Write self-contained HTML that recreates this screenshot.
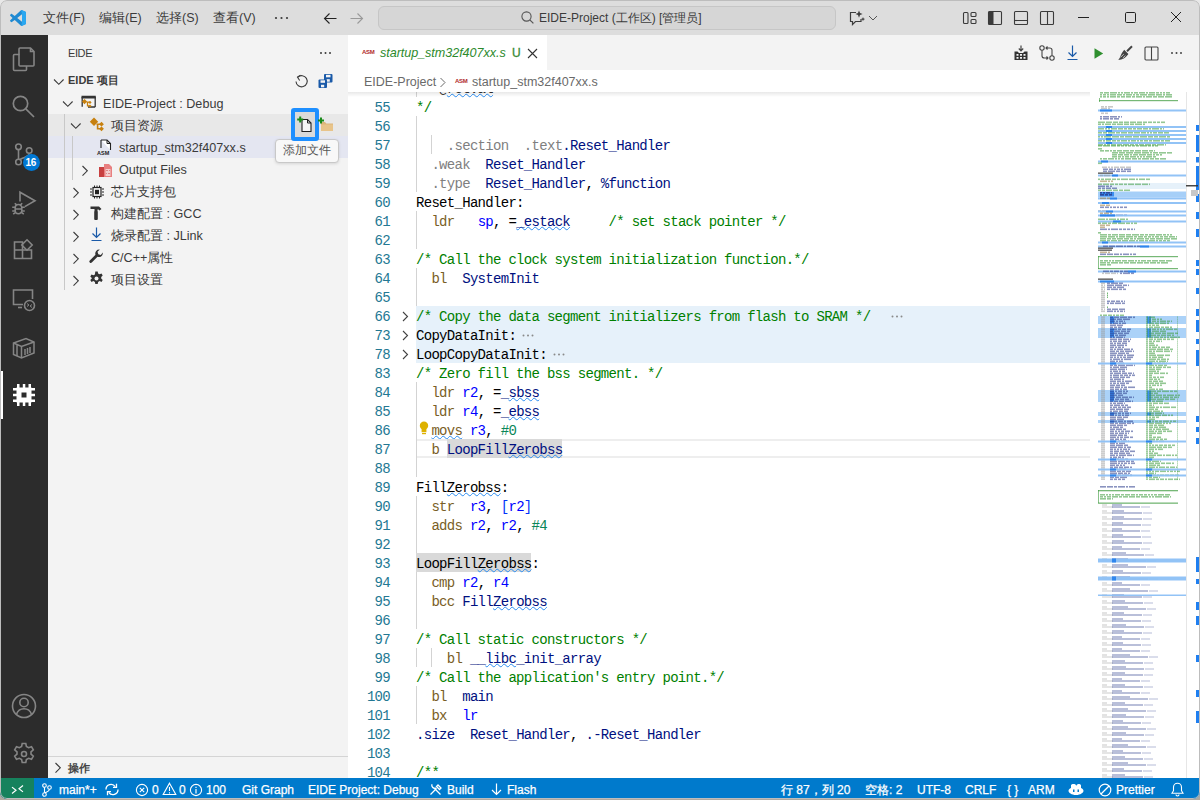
<!DOCTYPE html>
<html><head><meta charset="utf-8">
<style>
*{box-sizing:border-box;margin:0;padding:0}
html,body{width:1200px;height:800px;overflow:hidden;background:linear-gradient(#e8e8e8 0,#e8e8e8 30px,#b0a89f 30px);font-family:"Liberation Sans",sans-serif}
.a{position:absolute}
.t{position:absolute;white-space:pre;line-height:1}
svg{position:absolute;overflow:visible}
#win{position:absolute;left:0;top:0;width:1200px;height:799px;border-radius:7px;overflow:hidden;background:#f3f3f3}
#wb{position:absolute;left:0;top:0;width:1200px;height:799px;border-radius:7px;border:1px solid #bdbdbd;pointer-events:none;z-index:50}
#title{position:absolute;left:0;top:0;width:1200px;height:35px;background:#dddddd}
#act{position:absolute;left:0;top:35px;width:48px;height:743px;background:#2c2c2c}
#side{position:absolute;left:48px;top:35px;width:300px;height:743px;background:#f3f3f3}
#tabs{position:absolute;left:348px;top:35px;width:852px;height:35px;background:#f3f3f3}
#crumbs{position:absolute;left:348px;top:70px;width:852px;height:22px;background:#fff}
#editor{position:absolute;left:348px;top:92px;width:852px;height:686px;background:#fff;overflow:hidden}
#status{position:absolute;left:0;top:778px;width:1200px;height:21px;background:#007acc;color:#fff}
.menu{font-size:12.5px;color:#3b3b3b;top:12px}
.st{font-size:12px;color:#fff;top:6px;-webkit-text-stroke:0.25px #fff}
.side{font-size:12.6px;color:#3b3b3b}
.ln{position:absolute;margin-top:2px;left:0;width:42px;text-align:right;font-family:"Liberation Mono",monospace;font-size:14px;line-height:19px;height:19px;color:#237893;letter-spacing:-0.7px}
.cl{position:absolute;margin-top:2px;left:68px;white-space:pre;font-family:"Liberation Mono",monospace;font-size:14px;line-height:19px;height:19px;letter-spacing:-0.7px}
.cm{color:#008000}.dir{color:#7f7f7f}.id{color:#001080}.lab{color:#000}.mn{color:#795e26}.reg{color:#0000ff}.num{color:#098658}.p{color:#000}.br{color:#0431fa}.d{color:#333}
.sq{text-decoration:underline wavy #2a8cf0;text-decoration-thickness:1px;text-underline-offset:0px;text-decoration-skip-ink:none}
</style></head><body>
<div id="win">
<div id="title">
 <svg style="left:10px;top:10px" width="16" height="16" viewBox="0 0 100 100"><path fill="#1f8ad2" fill-rule="evenodd" d="M70.9 99.3c1.6.6 3.4.6 5-.2l20.6-9.9c2.2-1 3.5-3.2 3.5-5.6V16.4c0-2.4-1.4-4.6-3.5-5.6L75.9.9c-2.1-1-4.5-.8-6.4.6-.3.2-.5.4-.7.6L29.4 38 12.2 25c-1.6-1.2-3.8-1.1-5.3.2l-5.5 5c-1.8 1.7-1.8 4.5 0 6.2L16.2 50 1.4 63.6c-1.8 1.7-1.8 4.5 0 6.2l5.5 5c1.5 1.4 3.7 1.5 5.3.2l17.2-13 39.4 35.9c.6.6 1.4 1.1 2.1 1.4zM75 27.3 45.1 50 75 72.7V27.3z"/><path fill="#2aa7f0" d="M70.9 99.3c1.6.6 3.4.6 5-.2l20.6-9.9c2.2-1 3.5-3.2 3.5-5.6V16.4c0-2.4-1.4-4.6-3.5-5.6L75.9.9c-2.1-1-4.5-.8-6.4.6L75 27.3v45.4z"/></svg>
 <div class="t menu" style="left:43px">文件(F)</div>
 <div class="t menu" style="left:99px">编辑(E)</div>
 <div class="t menu" style="left:156px">选择(S)</div>
 <div class="t menu" style="left:213px">查看(V)</div>
 <svg style="left:274px;top:16px" width="16" height="4"><circle cx="2" cy="2" r="1.1" fill="#3b3b3b"/><circle cx="7.5" cy="2" r="1.1" fill="#3b3b3b"/><circle cx="13" cy="2" r="1.1" fill="#3b3b3b"/></svg>
 <svg style="left:323px;top:12px" width="16" height="14"><path d="M1.5 6.5h12M6.5 1.5l-5 5 5 5" stroke="#222" stroke-width="1.1" fill="none"/></svg>
 <svg style="left:349px;top:12px" width="16" height="14"><path d="M1.5 6.5h12M8.5 1.5l5 5-5 5" stroke="#999" stroke-width="1.1" fill="none"/></svg>
 <div class="a" style="left:378px;top:6px;width:458px;height:24px;border-radius:6px;background:#d6d6d6;border:1px solid #c6c6c6"></div>
 <svg style="left:519px;top:10px" width="16" height="16"><circle cx="7.5" cy="6.5" r="4.6" stroke="#555" stroke-width="1.1" fill="none"/><path d="M10.8 9.8l3.6 3.6" stroke="#555" stroke-width="1.2"/></svg>
 <div class="t" style="left:539px;top:12px;font-size:12px;color:#3b3b3b">EIDE-Project (工作区) [管理员]</div>
 <svg style="left:848px;top:10px" width="18" height="16"><path d="M8 2.5H2.5v9h2v3l3-3h5.5V9" stroke="#3b3b3b" stroke-width="1.2" fill="none"/><path d="M11 0.5l1 2.6 2.6 1-2.6 1-1 2.6-1-2.6-2.6-1 2.6-1z" fill="#3b3b3b"/><path d="M15 7l.6 1.5 1.5.6-1.5.6-.6 1.5-.6-1.5-1.5-.6 1.5-.6z" fill="#3b3b3b"/></svg>
 <svg style="left:868px;top:15px" width="10" height="6"><path d="M1 1l4 4 4-4" stroke="#555" stroke-width="1" fill="none"/></svg>
 <svg style="left:962px;top:11px" width="16" height="14"><rect x="1.5" y="1.5" width="4.5" height="11" rx="1" stroke="#3b3b3b" stroke-width="1.1" fill="none"/><rect x="9" y="1.5" width="5" height="4" rx="1" stroke="#3b3b3b" stroke-width="1.1" fill="none"/><rect x="9" y="8.5" width="5" height="4" rx="1" stroke="#3b3b3b" stroke-width="1.1" fill="none"/></svg>
 <svg style="left:987px;top:10px" width="16" height="16"><rect x="1.5" y="1.5" width="13" height="13" rx="1" stroke="#3b3b3b" stroke-width="1.1" fill="none"/><rect x="1.5" y="1.5" width="5" height="13" fill="#3b3b3b"/></svg>
 <svg style="left:1013px;top:10px" width="16" height="16"><rect x="1.5" y="1.5" width="13" height="13" rx="1" stroke="#3b3b3b" stroke-width="1.1" fill="none"/><path d="M1.5 10.5h13" stroke="#3b3b3b" stroke-width="1.1"/></svg>
 <svg style="left:1039px;top:10px" width="16" height="16"><rect x="1.5" y="1.5" width="13" height="13" rx="1" stroke="#3b3b3b" stroke-width="1.1" fill="none"/><path d="M8.5 1.5v13" stroke="#3b3b3b" stroke-width="1.1"/></svg>
 <svg style="left:1077px;top:16px" width="13" height="3"><path d="M1 1.5h11" stroke="#222" stroke-width="1"/></svg>
 <svg style="left:1124px;top:11px" width="13" height="13"><rect x="1.5" y="1.5" width="10" height="10" rx="1.2" stroke="#222" stroke-width="1" fill="none"/></svg>
 <svg style="left:1170px;top:11px" width="12" height="12"><path d="M1 1l10 10M11 1L1 11" stroke="#222" stroke-width="1"/></svg>
</div>
<div id="act">
 <!-- explorer -->
 <svg style="left:12px;top:12px" width="24" height="24" viewBox="0 0 24 24" fill="none" stroke="#858585" stroke-width="1.6"><path d="M7.5 7.5H2.5a1 1 0 0 0-1 1v14a1 1 0 0 0 1 1h11a1 1 0 0 0 1-1v-3.5"/><path d="M8 1h10.5l3.5 3.5V18a1 1 0 0 1-1 1H8a1 1 0 0 1-1-1V2a1 1 0 0 1 1-1z"/><path d="M18.5 1v3.5H22"/></svg>
 <!-- search -->
 <svg style="left:12px;top:60px" width="24" height="24" viewBox="0 0 24 24" fill="none" stroke="#858585" stroke-width="1.7"><circle cx="8.5" cy="8.5" r="7.2"/><path d="M13.8 13.8l8.2 8.2"/></svg>
 <!-- scm -->
 <svg style="left:12px;top:108px" width="24" height="24" viewBox="0 0 24 24" fill="none" stroke="#858585" stroke-width="1.6"><circle cx="6.5" cy="3.8" r="2.8"/><circle cx="17.2" cy="7.5" r="2.8"/><circle cx="6.5" cy="19" r="2.8"/><path d="M6.5 6.6v9.6M17.2 10.3c0 3.8-5 3.5-9.2 6.2"/></svg>
 <div class="a" style="left:23px;top:119px;width:17px;height:17px;border-radius:9px;background:#0078d4"></div>
 <div class="t" style="left:25.5px;top:123px;font-size:10px;font-weight:bold;color:#fff;letter-spacing:-0.3px">16</div>
 <!-- run debug -->
 <svg style="left:11px;top:156px" width="26" height="24" viewBox="0 0 26 24" fill="none" stroke="#858585" stroke-width="1.6"><path d="M9 10.5V1.2L24 9.8 13.8 15.6"/><path d="M4.2 16.8a3.3 3.3 0 0 1 6.6 0v2.6a3.3 3.3 0 0 1-6.6 0z M1.2 16.2h3M10.8 16.2h3M1.2 20h3M10.8 20h3M2.2 23.2l2-1.6M12.8 23.2l-2-1.6M5.2 13.6l-1.4-1.4M9.8 13.6l1.4-1.4M4.2 18h6.6"/></svg>
 <!-- extensions -->
 <svg style="left:12px;top:204px" width="24" height="24" viewBox="0 0 24 24" fill="none" stroke="#858585" stroke-width="1.6"><path d="M2.5 3h8v8h-8zM2.5 11h8v8.5h-8zM10.5 11h9v8.5h-9z"/><path d="M15 0.8l5.2 5.2-5.2 5.2-5.2-5.2z"/></svg>
 <!-- remote explorer -->
 <svg style="left:12px;top:253px" width="24" height="24" viewBox="0 0 24 24" fill="none" stroke="#858585" stroke-width="1.6"><path d="M11 16.5H1.5V2h19v9"/><path d="M6 19.5h4"/><circle cx="17.5" cy="17.5" r="5"/><path d="M15 15.5l2 1.5-2 1.5M20 16.5l-2 1.5 2 1.5" stroke-width="1"/></svg>
 <!-- container -->
 <svg style="left:12px;top:301px" width="24" height="24" viewBox="0 0 24 24" fill="none" stroke="#858585" stroke-width="1.5"><path d="M1.5 7v11.5L9.5 22 22 17V6L14 2.5z"/><path d="M1.5 7l8 3.5L22 6M9.5 10.5V22M5 9v11M13 13v6M15.5 12v6M18 11v6"/></svg>
 <!-- chip active -->
 <div class="a" style="left:1px;top:336px;width:2px;height:48px;background:#fff"></div>
 <svg style="left:12px;top:348px" width="24" height="24" viewBox="0 0 24 24" fill="#fff"><path d="M4.5 4.5h15v15h-15z M9.5 9.5v5h5v-5z" fill-rule="evenodd"/><path d="M5 1h2.5v4H5zM10.8 1h2.5v4h-2.5zM16.5 1H19v4h-2.5zM5 19h2.5v4H5zM10.8 19h2.5v4h-2.5zM16.5 19H19v4h-2.5zM1 5h4v2.5H1zM1 10.8h4v2.5H1zM1 16.5h4V19H1zM19 5h4v2.5h-4zM19 10.8h4v2.5h-4zM19 16.5h4V19h-4z"/></svg>
 <!-- account -->
 <svg style="left:12px;top:659px" width="24" height="24" viewBox="0 0 24 24" fill="none" stroke="#858585" stroke-width="1.6"><circle cx="12" cy="12" r="11.5"/><circle cx="12" cy="8.5" r="4.2"/><path d="M4.5 20.2c1.2-3.7 4-5.5 7.5-5.5s6.3 1.8 7.5 5.5"/></svg>
 <!-- settings gear -->
 <svg style="left:12px;top:707px" width="24" height="24" viewBox="0 0 24 24" fill="none" stroke="#858585" stroke-width="1.6"><path d="M10.2 1.5h3.6l.6 3 2.2 1.2 2.9-1 1.8 3.1-2.3 2v2.4l2.3 2-1.8 3.1-2.9-1-2.2 1.2-.6 3h-3.6l-.6-3-2.2-1.2-2.9 1-1.8-3.1 2.3-2v-2.4l-2.3-2 1.8-3.1 2.9 1 2.2-1.2z"/><circle cx="12" cy="12" r="2.5"/></svg>
</div>
<div id="side">
 <div class="t" style="left:20px;top:13px;font-size:11px;color:#3b3b3b;letter-spacing:-0.4px">EIDE</div>
 <svg style="left:271px;top:16px" width="14" height="4"><circle cx="2" cy="2" r="1" fill="#3b3b3b"/><circle cx="6.5" cy="2" r="1" fill="#3b3b3b"/><circle cx="11" cy="2" r="1" fill="#3b3b3b"/></svg>
 <!-- EIDE 项目 header -->
 <svg style="left:5px;top:43px" width="12" height="8"><path d="M1 1.5l4.8 4.8 4.8-4.8" stroke="#3b3b3b" stroke-width="1.1" fill="none"/></svg>
 <div class="t" style="left:20px;top:40px;font-size:11px;font-weight:bold;color:#3b3b3b">EIDE 项目</div>
 <svg style="left:246px;top:39px" width="15" height="15"><path d="M3.7 3.2A5.6 5.6 0 1 1 2 7.5" stroke="#3b3b3b" stroke-width="1.1" fill="none"/><path d="M6.5 1.2l-3 2 2.2 3.3" stroke="#3b3b3b" stroke-width="1.1" fill="none"/></svg>
 <svg style="left:270px;top:39px" width="15" height="15"><rect x="6" y="0" width="8.5" height="8.5" rx="1" fill="#1a5aa8"/><rect x="8" y="0.8" width="4.5" height="2.5" fill="#f3f3f3"/><rect x="8.6" y="5.2" width="3.2" height="2.5" fill="#f3f3f3"/><rect x="0.5" y="5.5" width="8.5" height="8.5" rx="1" fill="#1a5aa8"/><rect x="2.5" y="6.3" width="4.5" height="2.5" fill="#f3f3f3"/><rect x="3" y="10.8" width="3.2" height="2.5" fill="#f3f3f3"/></svg>
 <!-- project -->
 <svg style="left:14px;top:65px" width="12" height="8"><path d="M1 1.5l4.8 4.8 4.8-4.8" stroke="#3b3b3b" stroke-width="1.1" fill="none"/></svg>
 <svg style="left:33px;top:60px" width="16" height="16"><path d="M1.2 2v9.8M14.2 2v10M7 12h7.2" stroke="#333" stroke-width="1.3" fill="none"/><path d="M0.5 0.8h14.3v2.6H0.5z" fill="#333"/><path d="M3.5 4l2.6 2.6-2.6 2.6L.9 6.6z" fill="#c7800e"/><path d="M5.5 7.2h3M6.5 7.2v3.6h2" stroke="#c7800e" stroke-width="1.3" fill="none"/><path d="M9 5.8l1.6 1.6L9 9 7.4 7.4zM9 9.4l1.6 1.6L9 12.6 7.4 11z" fill="#c7800e"/></svg>
 <div class="t side" style="left:55px;top:63px">EIDE-Project : Debug</div>
 <!-- hover row 项目资源 -->
 <div class="a" style="left:0;top:79px;width:300px;height:22px;background:#e8e8e8"></div>
 <div class="a" style="left:16px;top:79px;width:1px;height:176px;background:#c8c8c8"></div>
 <svg style="left:22px;top:87px" width="12" height="8"><path d="M1 1.5l4.8 4.8 4.8-4.8" stroke="#3b3b3b" stroke-width="1.1" fill="none"/></svg>
 <svg style="left:41px;top:82px" width="16" height="15"><path d="M5 0.6l4.2 4.2L5 9 0.8 4.8z" fill="#c7800e"/><path d="M7.5 7.2h4.5M8.6 7.2v4.6h3.4" stroke="#c7800e" stroke-width="1.6" fill="none"/><path d="M12.5 4.8l2.4 2.4-2.4 2.4-2.4-2.4zM12.5 9.4l2.4 2.4-2.4 2.4-2.4-2.4z" fill="#c7800e"/></svg>
 <div class="t side" style="left:63px;top:85px">项目资源</div>
 <!-- selected row startup -->
 <div class="a" style="left:0;top:101px;width:300px;height:22px;background:#e4e6f1"></div>
 <div class="a" style="left:16px;top:79px;width:1px;height:176px;background:#c8c8c8"></div>
 <div class="a" style="left:24px;top:101px;width:1px;height:44px;background:#c8c8c8"></div>
 <svg style="left:49px;top:104px" width="15" height="16"><path d="M4 1h6l3.5 3.5V11" stroke="#222" stroke-width="1.1" fill="#fff"/><path d="M4 1v8" stroke="#222" stroke-width="1.1"/><path d="M10 1v3.5h3.5" stroke="#222" stroke-width="1" fill="none"/><text x="0" y="15.5" font-size="5.5" font-family="Liberation Sans" font-weight="bold" fill="#222">ASM</text></svg>
 <div class="t side" style="left:71px;top:107px">startup_stm32f407xx.s</div>
 <!-- output files -->
 <svg style="left:33px;top:130px" width="8" height="12"><path d="M1.5 1l4.8 4.8-4.8 4.8" stroke="#3b3b3b" stroke-width="1.1" fill="none"/></svg>
 <svg style="left:50px;top:128px" width="15" height="15"><path d="M1 4h6v10H1z" fill="#c84040"/><path d="M6 1h5l3 3v10H6z" fill="#e88080"/><path d="M7.5 6h5v7h-5z" fill="#f4d0d0"/><path d="M8.5 7.5h1M11 7.5h.5M8.5 10.5h.5M10.5 10.5h1" stroke="#c84040" stroke-width="1"/></svg>
 <div class="t side" style="left:71px;top:129px">Output Files</div>
 <!-- chip support -->
 <svg style="left:24px;top:152px" width="8" height="12"><path d="M1.5 1l4.8 4.8-4.8 4.8" stroke="#3b3b3b" stroke-width="1.1" fill="none"/></svg>
 <svg style="left:41px;top:150px" width="16" height="14"><rect x="4" y="2.5" width="8" height="9" stroke="#222" stroke-width="1.2" fill="none"/><rect x="6" y="4.8" width="4" height="4.4" fill="#222"/><path d="M1 4h2M1 7h2M1 10h2M13 4h2M13 7h2M13 10h2M5.5 0.5v1.5M8 0.5v1.5M10.5 0.5v1.5M5.5 12v1.5M8 12v1.5M10.5 12v1.5" stroke="#222" stroke-width="1"/></svg>
 <div class="t side" style="left:63px;top:151px">芯片支持包</div>
 <!-- build config -->
 <svg style="left:24px;top:174px" width="8" height="12"><path d="M1.5 1l4.8 4.8-4.8 4.8" stroke="#3b3b3b" stroke-width="1.1" fill="none"/></svg>
 <svg style="left:42px;top:171px" width="13" height="14"><path d="M0.5 0.5h8.5l2.5 2.5-2 1.5-1-1H7.5v2.5h-3V3H0.5z" fill="#333"/><path d="M4.2 5.5h3.6v7.5a1 1 0 0 1-1 1H5.2a1 1 0 0 1-1-1z" fill="#333"/></svg>
 <div class="t side" style="left:63px;top:173px">构建配置 : GCC</div>
 <!-- flash config -->
 <svg style="left:24px;top:196px" width="8" height="12"><path d="M1.5 1l4.8 4.8-4.8 4.8" stroke="#3b3b3b" stroke-width="1.1" fill="none"/></svg>
 <svg style="left:43px;top:192px" width="12" height="15"><path d="M5.5 0.5v10M1.5 6.5l4 4 4-4M0.5 13.5h10" stroke="#1a5aa8" stroke-width="1.2" fill="none"/></svg>
 <div class="t side" style="left:63px;top:195px">烧录配置 : JLink</div>
 <!-- c/c++ -->
 <svg style="left:24px;top:218px" width="8" height="12"><path d="M1.5 1l4.8 4.8-4.8 4.8" stroke="#3b3b3b" stroke-width="1.1" fill="none"/></svg>
 <svg style="left:41px;top:214px" width="15" height="15"><path d="M13.8 3.5a4 4 0 0 1-5.3 4.3L2.8 13.5a1.4 1.4 0 0 1-2-2L6.5 5.8A4 4 0 0 1 10.8 0.5L8.5 2.8l.8 2.5 2.5.8z" fill="#333"/></svg>
 <div class="t side" style="left:63px;top:217px">C/C++属性</div>
 <!-- project settings -->
 <svg style="left:24px;top:240px" width="8" height="12"><path d="M1.5 1l4.8 4.8-4.8 4.8" stroke="#3b3b3b" stroke-width="1.1" fill="none"/></svg>
 <svg style="left:41px;top:236px" width="15" height="15"><path d="M6.3 0.5h2.4l.4 2 1.5.8 1.9-.8 1.2 2-1.5 1.4v1.6l1.5 1.4-1.2 2-1.9-.8-1.5.8-.4 2H6.3l-.4-2-1.5-.8-1.9.8-1.2-2 1.5-1.4V6.9L1.3 5.5l1.2-2 1.9.8 1.5-.8z" fill="#333"/><circle cx="7.5" cy="7.5" r="2" fill="#f3f3f3"/></svg>
 <div class="t side" style="left:63px;top:239px">项目设置</div>
 <!-- tooltip -->
 <div class="a" style="left:227px;top:104px;width:64px;height:24px;background:#f8f8f8;border:1px solid #c8c8c8;border-radius:4px;box-shadow:0 1px 3px rgba(0,0,0,.12)"></div>
 <div class="t" style="left:235px;top:109px;font-size:12px;color:#555">添加文件</div>
 <!-- action buttons with highlight -->
 <div class="a" style="left:243px;top:73px;width:28px;height:33px;border:4px solid #1e8fff;border-radius:3px;background:#dadada"></div>
 <svg style="left:249px;top:81px" width="17" height="17"><path d="M5 3.5h5.5l3.5 3.5V15.5H5z" stroke="#222" stroke-width="1.1" fill="#f6f6f6"/><path d="M10.5 3.5V7H14" stroke="#222" stroke-width="1" fill="none"/><path d="M3.2 0.5v6M0.2 3.5h6" stroke="#1a8a1a" stroke-width="2"/></svg>
 <svg style="left:269px;top:82px" width="17" height="15"><path d="M4 5h4l1.3 1.5h6.7V14H4z" fill="#dcb67a"/><path d="M4 7.5h12V14H4z" fill="#e8c48a"/><path d="M4 0.5v6M1 3.5h6" stroke="#1a8a1a" stroke-width="2"/></svg>
 <!-- bottom section -->
 <div class="a" style="left:0;top:721px;width:300px;height:1px;background:#d4d4d4"></div>
 <svg style="left:6px;top:727px" width="8" height="12"><path d="M1.5 1l4.8 4.8-4.8 4.8" stroke="#3b3b3b" stroke-width="1.1" fill="none"/></svg>
 <div class="t" style="left:20px;top:728px;font-size:11px;font-weight:bold;color:#444">操作</div>
</div>
<div id="tabs">
 <div class="a" style="left:0;top:0;width:199px;height:35px;background:#fff"></div>
 <div class="t" style="left:14px;top:14px;font-size:6px;color:#b02a2a;letter-spacing:-0.3px;font-weight:bold">ASM</div>
 <div class="t" style="left:32px;top:12px;font-size:12.6px;font-style:italic;color:#2c8a2c;letter-spacing:-0.05px">startup_stm32f407xx.s</div>
 <div class="t" style="left:164px;top:12px;font-size:12px;color:#388a34;-webkit-text-stroke:0.3px #388a34">U</div>
 <svg style="left:179px;top:13px" width="11" height="11"><path d="M1 1l9 9M10 1L1 10" stroke="#333" stroke-width="1.1"/></svg>
 <!-- actions -->
 <svg style="left:665px;top:10px" width="16" height="16"><path d="M8 0.5v5M5.8 3.5L8 5.8l2.2-2.3" stroke="#444" stroke-width="1.2" fill="none"/><path d="M1.5 6.5h3l1.5 1.5h4l1.5-1.5h3V15h-13z" fill="#333"/><path d="M3.5 9h2v1.8h-2zM7 9h2v1.8H7zM10.5 9h2v1.8h-2zM3.5 12h2v1.8h-2zM7 12h2v1.8H7zM10.5 12h2v1.8h-2z" fill="#f3f3f3"/></svg>
 <svg style="left:691px;top:10px" width="16" height="16"><circle cx="3" cy="3" r="2.2" stroke="#444" stroke-width="1.1" fill="none"/><circle cx="13" cy="13" r="2.2" stroke="#444" stroke-width="1.1" fill="none"/><path d="M3 5.2V11c0 1.5 1 2 2.5 2H9M7.5 11.5L9 13l-1.5 1.5M13 10.8V5c0-1.5-1-2-2.5-2H7M8.5 1.5L7 3l1.5 1.5" stroke="#444" stroke-width="1.1" fill="none"/></svg>
 <svg style="left:719px;top:10px" width="12" height="16"><path d="M5.5 0.5v11M1.5 7.5l4 4 4-4M0.5 14.5h10" stroke="#1a5aa8" stroke-width="1.2" fill="none"/></svg>
 <svg style="left:746px;top:13px" width="10" height="11"><path d="M0.5 0.3v10.4l8.7-5.2z" fill="#2f8f2f"/></svg>
 <svg style="left:769px;top:10px" width="16" height="16"><path d="M15 1.2L10 6.2" stroke="#444" stroke-width="2"/><path d="M7.2 4.8l4.2 4.2-1.2 1.6c-1.6 2.2-4.5 4.2-9 4.4 1-1.2 1.4-2 2-3.3.8-1.8 1.8-4 4-6.9z" fill="#444"/><path d="M3.6 12.2l3.2-3M5.8 13l2.6-2.4" stroke="#f3f3f3" stroke-width="0.7"/></svg>
 <svg style="left:796px;top:11px" width="15" height="15"><rect x="1" y="1" width="13" height="13" rx="1" stroke="#444" stroke-width="1.1" fill="none"/><path d="M7.5 1v13" stroke="#444" stroke-width="1.1"/></svg>
 <svg style="left:822px;top:16px" width="14" height="4"><circle cx="2" cy="2" r="1" fill="#444"/><circle cx="6.5" cy="2" r="1" fill="#444"/><circle cx="11" cy="2" r="1" fill="#444"/></svg>
</div>
<div id="crumbs">
 <div class="t" style="left:16px;top:6px;font-size:12.5px;color:#6a6a6a">EIDE-Project</div>
 <svg style="left:91px;top:7px" width="8" height="11"><path d="M1.5 1l4.5 4.5-4.5 4.5" stroke="#6a6a6a" stroke-width="1" fill="none"/></svg>
 <div class="t" style="left:107px;top:8px;font-size:6px;color:#b02a2a;letter-spacing:-0.3px;font-weight:bold">ASM</div>
 <div class="t" style="left:124px;top:6px;font-size:12.5px;color:#6a6a6a">startup_stm32f407xx.s</div>
</div>
<div id="editor">
<div class="a" style="left:0;top:0;width:742px;height:5px;background:linear-gradient(rgba(0,0,0,0.09),rgba(0,0,0,0));z-index:5"></div>
<div class="a" style="left:68.0px;top:-14px;width:1px;height:19px;background:#d3d3d3"></div>
<div class="cl" style="top:-14px"><span class="p">   </span><span class="d">@</span><span class="d sq">retval</span></div>
<div class="ln" style="top:5px">55</div>
<div class="cl" style="top:5px"><span class="cm">*/</span></div>
<div class="a" style="left:68.0px;top:24px;width:1px;height:19px;background:#d3d3d3"></div>
<div class="ln" style="top:24px">56</div>
<div class="cl" style="top:24px"></div>
<div class="a" style="left:68.0px;top:43px;width:1px;height:19px;background:#d3d3d3"></div>
<div class="a" style="left:83.4px;top:43px;width:1px;height:19px;background:#d3d3d3"></div>
<div class="ln" style="top:43px">57</div>
<div class="cl" style="top:43px"><span class="p">    </span><span class="dir">.section</span><span class="p">  </span><span class="dir">.text</span><span class="id">.Reset_Handler</span></div>
<div class="a" style="left:68.0px;top:62px;width:1px;height:19px;background:#d3d3d3"></div>
<div class="ln" style="top:62px">58</div>
<div class="cl" style="top:62px"><span class="p">  </span><span class="dir">.weak</span><span class="p">  </span><span class="id">Reset_Handler</span></div>
<div class="a" style="left:68.0px;top:81px;width:1px;height:19px;background:#d3d3d3"></div>
<div class="ln" style="top:81px">59</div>
<div class="cl" style="top:81px"><span class="p">  </span><span class="dir">.type</span><span class="p">  </span><span class="id">Reset_Handler</span><span class="p">, </span><span class="id">%function</span></div>
<div class="ln" style="top:100px">60</div>
<div class="cl" style="top:100px"><span class="lab">Reset_Handler:</span></div>
<div class="a" style="left:68.0px;top:119px;width:1px;height:19px;background:#d3d3d3"></div>
<div class="ln" style="top:119px">61</div>
<div class="cl" style="top:119px"><span class="p">  </span><span class="mn">ldr</span><span class="p">   </span><span class="reg">sp</span><span class="p">, =</span><span class="id sq">_estack</span><span class="p">     </span><span class="cm">/* set stack pointer */</span></div>
<div class="a" style="left:68.0px;top:138px;width:1px;height:19px;background:#d3d3d3"></div>
<div class="ln" style="top:138px">62</div>
<div class="cl" style="top:138px"></div>
<div class="ln" style="top:157px">63</div>
<div class="cl" style="top:157px"><span class="cm">/* Call the clock system initialization function.*/</span></div>
<div class="a" style="left:68.0px;top:176px;width:1px;height:19px;background:#d3d3d3"></div>
<div class="ln" style="top:176px">64</div>
<div class="cl" style="top:176px"><span class="p">  </span><span class="mn">bl</span><span class="p">  </span><span class="id">SystemInit</span></div>
<div class="a" style="left:68.0px;top:195px;width:1px;height:19px;background:#d3d3d3"></div>
<div class="ln" style="top:195px">65</div>
<div class="cl" style="top:195px"></div>
<div class="a" style="left:68px;top:214px;width:674px;height:19px;background:#e6f1fa"></div>
<div class="ln" style="top:214px">66</div>
<svg style="left:54px;top:219px" width="7" height="10"><path d="M1 1l4.5 4.5L1 10" stroke="#424242" stroke-width="1.1" fill="none"/></svg>
<div class="cl" style="top:214px"><span class="cm">/* Copy the data segment initializers from flash to SRAM */</span></div>
<svg style="left:543.3px;top:223px" width="14" height="3"><circle cx="1.5" cy="1.5" r="1" fill="#8a8a8a"/><circle cx="6" cy="1.5" r="1" fill="#8a8a8a"/><circle cx="10.5" cy="1.5" r="1" fill="#8a8a8a"/></svg>
<div class="a" style="left:68px;top:233px;width:674px;height:19px;background:#e6f1fa"></div>
<div class="ln" style="top:233px">73</div>
<svg style="left:54px;top:238px" width="7" height="10"><path d="M1 1l4.5 4.5L1 10" stroke="#424242" stroke-width="1.1" fill="none"/></svg>
<div class="cl" style="top:233px"><span class="lab">CopyDataInit:</span></div>
<svg style="left:174.1px;top:242px" width="14" height="3"><circle cx="1.5" cy="1.5" r="1" fill="#8a8a8a"/><circle cx="6" cy="1.5" r="1" fill="#8a8a8a"/><circle cx="10.5" cy="1.5" r="1" fill="#8a8a8a"/></svg>
<div class="a" style="left:68px;top:252px;width:674px;height:19px;background:#e6f1fa"></div>
<div class="ln" style="top:252px">78</div>
<svg style="left:54px;top:257px" width="7" height="10"><path d="M1 1l4.5 4.5L1 10" stroke="#424242" stroke-width="1.1" fill="none"/></svg>
<div class="cl" style="top:252px"><span class="lab">LoopCopyDataInit:</span></div>
<svg style="left:204.9px;top:261px" width="14" height="3"><circle cx="1.5" cy="1.5" r="1" fill="#8a8a8a"/><circle cx="6" cy="1.5" r="1" fill="#8a8a8a"/><circle cx="10.5" cy="1.5" r="1" fill="#8a8a8a"/></svg>
<div class="ln" style="top:271px">83</div>
<div class="cl" style="top:271px"><span class="cm">/* Zero fill the bss segment. */</span></div>
<div class="a" style="left:68.0px;top:290px;width:1px;height:19px;background:#d3d3d3"></div>
<div class="ln" style="top:290px">84</div>
<div class="cl" style="top:290px"><span class="p">  </span><span class="mn">ldr</span><span class="p"> </span><span class="reg">r2</span><span class="p">, =</span><span class="id">_</span><span class="id sq">sbss</span></div>
<div class="a" style="left:68.0px;top:309px;width:1px;height:19px;background:#d3d3d3"></div>
<div class="ln" style="top:309px">85</div>
<div class="cl" style="top:309px"><span class="p">  </span><span class="mn">ldr</span><span class="p"> </span><span class="reg">r4</span><span class="p">, =</span><span class="id">_</span><span class="id sq">ebss</span></div>
<div class="a" style="left:68.0px;top:328px;width:1px;height:19px;background:#d3d3d3"></div>
<div class="ln" style="top:328px">86</div>
<div class="cl" style="top:328px"><span class="p">  </span><span class="mn sq">movs</span><span class="p"> </span><span class="reg">r3</span><span class="p">, </span><span class="num">#0</span></div>
<svg style="left:71px;top:329px" width="10" height="14"><path d="M5 0.5a4.2 4.2 0 0 0-4.2 4.2c0 1.7 1 2.5 1.8 3.5v3h4.8v-3c.8-1 1.8-1.8 1.8-3.5A4.2 4.2 0 0 0 5 .5z" fill="#ddb100"/><path d="M3 12h4v1.2H3z" fill="#ddb100"/></svg>
<div class="a" style="left:68px;top:347px;width:674px;height:19px;border-top:2px solid #eeeeee;border-bottom:2px solid #eeeeee"></div>
<div class="a" style="left:68.0px;top:347px;width:1px;height:19px;background:#d3d3d3"></div>
<div class="ln" style="top:347px">87</div>
<div class="a" style="left:98.8px;top:347px;width:61.6px;height:19px;background:#d9d9d9"></div>
<div class="a" style="left:160.4px;top:347px;width:53.9px;height:19px;background:#d9d9d9"></div>
<div class="cl" style="top:347px"><span class="p">  </span><span class="mn">b</span><span class="p"> </span><span class="id">LoopFill</span><span class="id sq">Zerobss</span></div>
<div class="a" style="left:68.0px;top:366px;width:1px;height:19px;background:#d3d3d3"></div>
<div class="ln" style="top:366px">88</div>
<div class="cl" style="top:366px"></div>
<div class="ln" style="top:385px">89</div>
<div class="cl" style="top:385px"><span class="lab">Fill</span><span class="lab sq">Zerobss</span><span class="lab">:</span></div>
<div class="a" style="left:68.0px;top:404px;width:1px;height:19px;background:#d3d3d3"></div>
<div class="ln" style="top:404px">90</div>
<div class="cl" style="top:404px"><span class="p">  </span><span class="mn">str</span><span class="p">  </span><span class="reg">r3</span><span class="p">, </span><span class="br">[</span><span class="reg">r2</span><span class="br">]</span></div>
<div class="a" style="left:68.0px;top:423px;width:1px;height:19px;background:#d3d3d3"></div>
<div class="ln" style="top:423px">91</div>
<div class="cl" style="top:423px"><span class="p">  </span><span class="mn">adds</span><span class="p"> </span><span class="reg">r2</span><span class="p">, </span><span class="reg">r2</span><span class="p">, </span><span class="num">#4</span></div>
<div class="a" style="left:68.0px;top:442px;width:1px;height:19px;background:#d3d3d3"></div>
<div class="ln" style="top:442px">92</div>
<div class="cl" style="top:442px"></div>
<div class="ln" style="top:461px">93</div>
<div class="a" style="left:68.0px;top:461px;width:61.6px;height:19px;background:#d9d9d9"></div>
<div class="a" style="left:129.6px;top:461px;width:53.9px;height:19px;background:#d9d9d9"></div>
<div class="cl" style="top:461px"><span class="lab">LoopFill</span><span class="lab sq">Zerobss</span><span class="lab">:</span></div>
<div class="a" style="left:68.0px;top:480px;width:1px;height:19px;background:#d3d3d3"></div>
<div class="ln" style="top:480px">94</div>
<div class="cl" style="top:480px"><span class="p">  </span><span class="mn">cmp</span><span class="p"> </span><span class="reg">r2</span><span class="p">, </span><span class="reg">r4</span></div>
<div class="a" style="left:68.0px;top:499px;width:1px;height:19px;background:#d3d3d3"></div>
<div class="ln" style="top:499px">95</div>
<div class="cl" style="top:499px"><span class="p">  </span><span class="mn">bcc</span><span class="p"> </span><span class="id">Fill</span><span class="id sq">Zerobss</span></div>
<div class="a" style="left:68.0px;top:518px;width:1px;height:19px;background:#d3d3d3"></div>
<div class="ln" style="top:518px">96</div>
<div class="cl" style="top:518px"></div>
<div class="ln" style="top:537px">97</div>
<div class="cl" style="top:537px"><span class="cm">/* Call static constructors */</span></div>
<div class="a" style="left:68.0px;top:556px;width:1px;height:19px;background:#d3d3d3"></div>
<div class="a" style="left:83.4px;top:556px;width:1px;height:19px;background:#d3d3d3"></div>
<div class="ln" style="top:556px">98</div>
<div class="cl" style="top:556px"><span class="p">    </span><span class="mn">bl</span><span class="p"> </span><span class="id">__</span><span class="id sq">libc</span><span class="id">_init_array</span></div>
<div class="ln" style="top:575px">99</div>
<div class="cl" style="top:575px"><span class="cm">/* Call the application&#x27;s entry point.*/</span></div>
<div class="a" style="left:68.0px;top:594px;width:1px;height:19px;background:#d3d3d3"></div>
<div class="ln" style="top:594px">100</div>
<div class="cl" style="top:594px"><span class="p">  </span><span class="mn">bl</span><span class="p">  </span><span class="id">main</span></div>
<div class="a" style="left:68.0px;top:613px;width:1px;height:19px;background:#d3d3d3"></div>
<div class="ln" style="top:613px">101</div>
<div class="cl" style="top:613px"><span class="p">  </span><span class="mn">bx</span><span class="p">  </span><span class="reg">lr</span></div>
<div class="ln" style="top:632px">102</div>
<div class="cl" style="top:632px"><span class="id">.size</span><span class="p">  </span><span class="id">Reset_Handler</span><span class="p">, </span><span class="id">.-Reset_Handler</span></div>
<div class="ln" style="top:651px">103</div>
<div class="cl" style="top:651px"></div>
<div class="ln" style="top:670px">104</div>
<div class="cl" style="top:670px"><span class="cm">/**</span></div>
<svg style="left:742px;top:0" width="109" height="686"><rect x="10.0" y="0.0" width="3.0" height="1.6" fill="#3c9a3c" fill-opacity="0.55"/><rect x="14.0" y="0.0" width="5.0" height="1.6" fill="#3c9a3c" fill-opacity="0.55"/><rect x="20.0" y="0.0" width="7.0" height="1.6" fill="#3c9a3c" fill-opacity="0.55"/><rect x="28.0" y="0.0" width="2.0" height="1.6" fill="#3c9a3c" fill-opacity="0.55"/><rect x="31.0" y="0.0" width="2.0" height="1.6" fill="#3c9a3c" fill-opacity="0.55"/><rect x="34.0" y="0.0" width="6.0" height="1.6" fill="#3c9a3c" fill-opacity="0.55"/><rect x="41.0" y="0.0" width="2.0" height="1.6" fill="#3c9a3c" fill-opacity="0.55"/><rect x="44.0" y="0.0" width="4.0" height="1.6" fill="#3c9a3c" fill-opacity="0.55"/><rect x="49.0" y="0.0" width="6.0" height="1.6" fill="#3c9a3c" fill-opacity="0.55"/><rect x="56.0" y="0.0" width="2.0" height="1.6" fill="#3c9a3c" fill-opacity="0.55"/><rect x="59.0" y="0.0" width="6.0" height="1.6" fill="#3c9a3c" fill-opacity="0.55"/><rect x="66.0" y="0.0" width="3.0" height="1.6" fill="#3c9a3c" fill-opacity="0.55"/><rect x="70.0" y="0.0" width="2.0" height="1.6" fill="#3c9a3c" fill-opacity="0.55"/><rect x="73.0" y="0.0" width="2.0" height="1.6" fill="#3c9a3c" fill-opacity="0.55"/><rect x="76.0" y="0.0" width="4.0" height="1.6" fill="#3c9a3c" fill-opacity="0.55"/><rect x="10.0" y="2.0" width="2.0" height="1.6" fill="#3c9a3c" fill-opacity="0.55"/><rect x="13.0" y="2.0" width="3.0" height="1.6" fill="#3c9a3c" fill-opacity="0.55"/><rect x="17.0" y="2.0" width="2.0" height="1.6" fill="#3c9a3c" fill-opacity="0.55"/><rect x="20.0" y="2.0" width="6.0" height="1.6" fill="#3c9a3c" fill-opacity="0.55"/><rect x="27.0" y="2.0" width="5.0" height="1.6" fill="#3c9a3c" fill-opacity="0.55"/><rect x="33.0" y="2.0" width="2.0" height="1.6" fill="#3c9a3c" fill-opacity="0.55"/><rect x="36.0" y="2.0" width="6.0" height="1.6" fill="#3c9a3c" fill-opacity="0.55"/><rect x="43.0" y="2.0" width="2.0" height="1.6" fill="#3c9a3c" fill-opacity="0.55"/><rect x="46.0" y="2.0" width="3.0" height="1.6" fill="#3c9a3c" fill-opacity="0.55"/><rect x="50.0" y="2.0" width="7.0" height="1.6" fill="#3c9a3c" fill-opacity="0.55"/><rect x="58.0" y="2.0" width="7.0" height="1.6" fill="#3c9a3c" fill-opacity="0.55"/><rect x="66.0" y="2.0" width="6.0" height="1.6" fill="#3c9a3c" fill-opacity="0.55"/><rect x="73.0" y="2.0" width="2.0" height="1.6" fill="#3c9a3c" fill-opacity="0.55"/><rect x="76.0" y="2.0" width="6.0" height="1.6" fill="#3c9a3c" fill-opacity="0.55"/><rect x="10.0" y="4.0" width="2.0" height="1.6" fill="#3c9a3c" fill-opacity="0.55"/><rect x="13.0" y="4.0" width="3.0" height="1.6" fill="#3c9a3c" fill-opacity="0.55"/><rect x="17.0" y="4.0" width="2.0" height="1.6" fill="#3c9a3c" fill-opacity="0.55"/><rect x="20.0" y="4.0" width="6.0" height="1.6" fill="#3c9a3c" fill-opacity="0.55"/><rect x="27.0" y="4.0" width="3.0" height="1.6" fill="#3c9a3c" fill-opacity="0.55"/><rect x="31.0" y="4.0" width="4.0" height="1.6" fill="#3c9a3c" fill-opacity="0.55"/><rect x="36.0" y="4.0" width="5.0" height="1.6" fill="#3c9a3c" fill-opacity="0.55"/><rect x="42.0" y="4.0" width="3.0" height="1.6" fill="#3c9a3c" fill-opacity="0.55"/><rect x="46.0" y="4.0" width="6.0" height="1.6" fill="#3c9a3c" fill-opacity="0.55"/><rect x="53.0" y="4.0" width="2.0" height="1.6" fill="#3c9a3c" fill-opacity="0.55"/><rect x="56.0" y="4.0" width="6.0" height="1.6" fill="#3c9a3c" fill-opacity="0.55"/><rect x="63.0" y="4.0" width="4.0" height="1.6" fill="#3c9a3c" fill-opacity="0.55"/><rect x="68.0" y="4.0" width="6.0" height="1.6" fill="#3c9a3c" fill-opacity="0.55"/><rect x="75.0" y="4.0" width="7.0" height="1.6" fill="#3c9a3c" fill-opacity="0.55"/><rect x="9.0" y="8.0" width="79.0" height="1.2" fill="#3c9a3c" fill-opacity="0.7"/><rect x="9.0" y="6.0" width="1.0" height="4" fill="#3c9a3c" fill-opacity="0.6"/><rect x="11.0" y="14.0" width="3.0" height="1.6" fill="#9a9a9a" fill-opacity="0.55"/><rect x="15.0" y="14.0" width="2.0" height="1.6" fill="#9a9a9a" fill-opacity="0.55"/><rect x="18.0" y="14.0" width="5.0" height="1.6" fill="#9a9a9a" fill-opacity="0.55"/><rect x="11.0" y="15.8" width="6.0" height="1.6" fill="#9a9a9a" fill-opacity="0.55"/><rect x="18.0" y="15.8" width="2.0" height="1.6" fill="#9a9a9a" fill-opacity="0.55"/><rect x="8.0" y="17.5" width="88.0" height="2" fill="#8cc0f5" fill-opacity="0.95"/><rect x="10.0" y="17.5" width="12.0" height="2" fill="#2f86ee"/><rect x="11.0" y="20.5" width="3.0" height="1.6" fill="#9a9a9a" fill-opacity="0.55"/><rect x="15.0" y="20.5" width="3.0" height="1.6" fill="#9a9a9a" fill-opacity="0.55"/><rect x="10.0" y="24.0" width="2.0" height="1.6" fill="#2a3a8a" fill-opacity="0.55"/><rect x="13.0" y="24.0" width="6.0" height="1.6" fill="#2a3a8a" fill-opacity="0.55"/><rect x="20.0" y="24.0" width="7.0" height="1.6" fill="#2a3a8a" fill-opacity="0.55"/><rect x="28.0" y="24.0" width="2.0" height="1.6" fill="#2a3a8a" fill-opacity="0.55"/><rect x="31.0" y="24.0" width="1.0" height="1.6" fill="#2a3a8a" fill-opacity="0.55"/><rect x="10.0" y="26.0" width="2.0" height="1.6" fill="#2a3a8a" fill-opacity="0.55"/><rect x="13.0" y="26.0" width="6.0" height="1.6" fill="#2a3a8a" fill-opacity="0.55"/><rect x="20.0" y="26.0" width="3.0" height="1.6" fill="#2a3a8a" fill-opacity="0.55"/><rect x="24.0" y="26.0" width="5.0" height="1.6" fill="#2a3a8a" fill-opacity="0.55"/><rect x="8.0" y="29.5" width="7.0" height="1.6" fill="#3c9a3c" fill-opacity="0.55"/><rect x="16.0" y="29.5" width="6.0" height="1.6" fill="#3c9a3c" fill-opacity="0.55"/><rect x="23.0" y="29.5" width="5.0" height="1.6" fill="#3c9a3c" fill-opacity="0.55"/><rect x="29.0" y="29.5" width="4.0" height="1.6" fill="#3c9a3c" fill-opacity="0.55"/><rect x="34.0" y="29.5" width="5.0" height="1.6" fill="#3c9a3c" fill-opacity="0.55"/><rect x="40.0" y="29.5" width="6.0" height="1.6" fill="#3c9a3c" fill-opacity="0.55"/><rect x="47.0" y="29.5" width="5.0" height="1.6" fill="#3c9a3c" fill-opacity="0.55"/><rect x="53.0" y="29.5" width="4.0" height="1.6" fill="#3c9a3c" fill-opacity="0.55"/><rect x="58.0" y="29.5" width="4.0" height="1.6" fill="#3c9a3c" fill-opacity="0.55"/><rect x="63.0" y="29.5" width="3.0" height="1.6" fill="#3c9a3c" fill-opacity="0.55"/><rect x="67.0" y="29.5" width="3.0" height="1.6" fill="#3c9a3c" fill-opacity="0.55"/><rect x="71.0" y="29.5" width="4.0" height="1.6" fill="#3c9a3c" fill-opacity="0.55"/><rect x="8.0" y="31.5" width="3.0" height="1.6" fill="#3c9a3c" fill-opacity="0.55"/><rect x="12.0" y="31.5" width="2.0" height="1.6" fill="#3c9a3c" fill-opacity="0.55"/><rect x="15.0" y="31.5" width="6.0" height="1.6" fill="#3c9a3c" fill-opacity="0.55"/><rect x="22.0" y="31.5" width="4.0" height="1.6" fill="#3c9a3c" fill-opacity="0.55"/><rect x="27.0" y="31.5" width="6.0" height="1.6" fill="#3c9a3c" fill-opacity="0.55"/><rect x="34.0" y="31.5" width="5.0" height="1.6" fill="#3c9a3c" fill-opacity="0.55"/><rect x="40.0" y="31.5" width="4.0" height="1.6" fill="#3c9a3c" fill-opacity="0.55"/><rect x="45.0" y="31.5" width="7.0" height="1.6" fill="#3c9a3c" fill-opacity="0.55"/><rect x="53.0" y="31.5" width="2.0" height="1.6" fill="#3c9a3c" fill-opacity="0.55"/><rect x="8.0" y="34.0" width="88.0" height="2" fill="#8cc0f5" fill-opacity="0.95"/><rect x="16.0" y="34.0" width="6.0" height="2" fill="#2f86ee"/><rect x="8.0" y="36.0" width="6.0" height="1.6" fill="#3c9a3c" fill-opacity="0.55"/><rect x="15.0" y="36.0" width="2.0" height="1.6" fill="#3c9a3c" fill-opacity="0.55"/><rect x="18.0" y="36.0" width="2.0" height="1.6" fill="#3c9a3c" fill-opacity="0.55"/><rect x="21.0" y="36.0" width="6.0" height="1.6" fill="#3c9a3c" fill-opacity="0.55"/><rect x="28.0" y="36.0" width="5.0" height="1.6" fill="#3c9a3c" fill-opacity="0.55"/><rect x="34.0" y="36.0" width="3.0" height="1.6" fill="#3c9a3c" fill-opacity="0.55"/><rect x="38.0" y="36.0" width="4.0" height="1.6" fill="#3c9a3c" fill-opacity="0.55"/><rect x="43.0" y="36.0" width="3.0" height="1.6" fill="#3c9a3c" fill-opacity="0.55"/><rect x="47.0" y="36.0" width="5.0" height="1.6" fill="#3c9a3c" fill-opacity="0.55"/><rect x="53.0" y="36.0" width="5.0" height="1.6" fill="#3c9a3c" fill-opacity="0.55"/><rect x="59.0" y="36.0" width="2.0" height="1.6" fill="#3c9a3c" fill-opacity="0.55"/><rect x="62.0" y="36.0" width="7.0" height="1.6" fill="#3c9a3c" fill-opacity="0.55"/><rect x="70.0" y="36.0" width="2.0" height="1.6" fill="#3c9a3c" fill-opacity="0.55"/><rect x="73.0" y="36.0" width="1.0" height="1.6" fill="#3c9a3c" fill-opacity="0.55"/><rect x="8.0" y="38.0" width="88.0" height="2" fill="#8cc0f5" fill-opacity="0.95"/><rect x="16.0" y="38.0" width="6.0" height="2" fill="#2f86ee"/><rect x="8.0" y="40.0" width="4.0" height="1.6" fill="#3c9a3c" fill-opacity="0.55"/><rect x="13.0" y="40.0" width="4.0" height="1.6" fill="#3c9a3c" fill-opacity="0.55"/><rect x="18.0" y="40.0" width="7.0" height="1.6" fill="#3c9a3c" fill-opacity="0.55"/><rect x="26.0" y="40.0" width="4.0" height="1.6" fill="#3c9a3c" fill-opacity="0.55"/><rect x="31.0" y="40.0" width="6.0" height="1.6" fill="#3c9a3c" fill-opacity="0.55"/><rect x="38.0" y="40.0" width="5.0" height="1.6" fill="#3c9a3c" fill-opacity="0.55"/><rect x="44.0" y="40.0" width="6.0" height="1.6" fill="#3c9a3c" fill-opacity="0.55"/><rect x="51.0" y="40.0" width="5.0" height="1.6" fill="#3c9a3c" fill-opacity="0.55"/><rect x="57.0" y="40.0" width="2.0" height="1.6" fill="#3c9a3c" fill-opacity="0.55"/><rect x="60.0" y="40.0" width="2.0" height="1.6" fill="#3c9a3c" fill-opacity="0.55"/><rect x="63.0" y="40.0" width="4.0" height="1.6" fill="#3c9a3c" fill-opacity="0.55"/><rect x="68.0" y="40.0" width="5.0" height="1.6" fill="#3c9a3c" fill-opacity="0.55"/><rect x="74.0" y="40.0" width="5.0" height="1.6" fill="#3c9a3c" fill-opacity="0.55"/><rect x="8.0" y="42.0" width="88.0" height="2" fill="#8cc0f5" fill-opacity="0.95"/><rect x="16.0" y="42.0" width="6.0" height="2" fill="#2f86ee"/><rect x="8.0" y="44.0" width="2.0" height="1.6" fill="#3c9a3c" fill-opacity="0.55"/><rect x="11.0" y="44.0" width="2.0" height="1.6" fill="#3c9a3c" fill-opacity="0.55"/><rect x="14.0" y="44.0" width="7.0" height="1.6" fill="#3c9a3c" fill-opacity="0.55"/><rect x="22.0" y="44.0" width="7.0" height="1.6" fill="#3c9a3c" fill-opacity="0.55"/><rect x="30.0" y="44.0" width="4.0" height="1.6" fill="#3c9a3c" fill-opacity="0.55"/><rect x="35.0" y="44.0" width="7.0" height="1.6" fill="#3c9a3c" fill-opacity="0.55"/><rect x="43.0" y="44.0" width="6.0" height="1.6" fill="#3c9a3c" fill-opacity="0.55"/><rect x="50.0" y="44.0" width="7.0" height="1.6" fill="#3c9a3c" fill-opacity="0.55"/><rect x="58.0" y="44.0" width="5.0" height="1.6" fill="#3c9a3c" fill-opacity="0.55"/><rect x="64.0" y="44.0" width="4.0" height="1.6" fill="#3c9a3c" fill-opacity="0.55"/><rect x="69.0" y="44.0" width="7.0" height="1.6" fill="#3c9a3c" fill-opacity="0.55"/><rect x="77.0" y="44.0" width="3.0" height="1.6" fill="#3c9a3c" fill-opacity="0.55"/><rect x="8.0" y="46.0" width="88.0" height="2" fill="#8cc0f5" fill-opacity="0.95"/><rect x="16.0" y="46.0" width="6.0" height="2" fill="#2f86ee"/><rect x="8.0" y="48.0" width="4.0" height="1.6" fill="#3c9a3c" fill-opacity="0.55"/><rect x="13.0" y="48.0" width="2.0" height="1.6" fill="#3c9a3c" fill-opacity="0.55"/><rect x="16.0" y="48.0" width="5.0" height="1.6" fill="#3c9a3c" fill-opacity="0.55"/><rect x="22.0" y="48.0" width="4.0" height="1.6" fill="#3c9a3c" fill-opacity="0.55"/><rect x="27.0" y="48.0" width="3.0" height="1.6" fill="#3c9a3c" fill-opacity="0.55"/><rect x="31.0" y="48.0" width="6.0" height="1.6" fill="#3c9a3c" fill-opacity="0.55"/><rect x="38.0" y="48.0" width="2.0" height="1.6" fill="#3c9a3c" fill-opacity="0.55"/><rect x="41.0" y="48.0" width="5.0" height="1.6" fill="#3c9a3c" fill-opacity="0.55"/><rect x="47.0" y="48.0" width="2.0" height="1.6" fill="#3c9a3c" fill-opacity="0.55"/><rect x="50.0" y="48.0" width="3.0" height="1.6" fill="#3c9a3c" fill-opacity="0.55"/><rect x="54.0" y="48.0" width="4.0" height="1.6" fill="#3c9a3c" fill-opacity="0.55"/><rect x="59.0" y="48.0" width="3.0" height="1.6" fill="#3c9a3c" fill-opacity="0.55"/><rect x="63.0" y="48.0" width="7.0" height="1.6" fill="#3c9a3c" fill-opacity="0.55"/><rect x="71.0" y="48.0" width="3.0" height="1.6" fill="#3c9a3c" fill-opacity="0.55"/><rect x="75.0" y="48.0" width="5.0" height="1.6" fill="#3c9a3c" fill-opacity="0.55"/><rect x="8.0" y="50.0" width="88.0" height="2" fill="#8cc0f5" fill-opacity="0.95"/><rect x="16.0" y="50.0" width="6.0" height="2" fill="#2f86ee"/><rect x="8.0" y="52.0" width="5.0" height="1.6" fill="#3c9a3c" fill-opacity="0.55"/><rect x="14.0" y="52.0" width="2.0" height="1.6" fill="#3c9a3c" fill-opacity="0.55"/><rect x="17.0" y="52.0" width="3.0" height="1.6" fill="#3c9a3c" fill-opacity="0.55"/><rect x="21.0" y="52.0" width="5.0" height="1.6" fill="#3c9a3c" fill-opacity="0.55"/><rect x="27.0" y="52.0" width="5.0" height="1.6" fill="#3c9a3c" fill-opacity="0.55"/><rect x="33.0" y="52.0" width="6.0" height="1.6" fill="#3c9a3c" fill-opacity="0.55"/><rect x="40.0" y="52.0" width="4.0" height="1.6" fill="#3c9a3c" fill-opacity="0.55"/><rect x="45.0" y="52.0" width="3.0" height="1.6" fill="#3c9a3c" fill-opacity="0.55"/><rect x="49.0" y="52.0" width="5.0" height="1.6" fill="#3c9a3c" fill-opacity="0.55"/><rect x="55.0" y="52.0" width="6.0" height="1.6" fill="#3c9a3c" fill-opacity="0.55"/><rect x="62.0" y="52.0" width="4.0" height="1.6" fill="#3c9a3c" fill-opacity="0.55"/><rect x="67.0" y="52.0" width="7.0" height="1.6" fill="#3c9a3c" fill-opacity="0.55"/><rect x="75.0" y="52.0" width="1.0" height="1.6" fill="#3c9a3c" fill-opacity="0.55"/><rect x="8.0" y="53.0" width="4.0" height="1.6" fill="#3c9a3c" fill-opacity="0.55"/><rect x="13.0" y="53.0" width="7.0" height="1.6" fill="#3c9a3c" fill-opacity="0.55"/><rect x="21.0" y="53.0" width="5.0" height="1.6" fill="#3c9a3c" fill-opacity="0.55"/><rect x="27.0" y="53.0" width="3.0" height="1.6" fill="#3c9a3c" fill-opacity="0.55"/><rect x="31.0" y="53.0" width="3.0" height="1.6" fill="#3c9a3c" fill-opacity="0.55"/><rect x="35.0" y="53.0" width="2.0" height="1.6" fill="#3c9a3c" fill-opacity="0.55"/><rect x="38.0" y="53.0" width="3.0" height="1.6" fill="#3c9a3c" fill-opacity="0.55"/><rect x="42.0" y="53.0" width="3.0" height="1.6" fill="#3c9a3c" fill-opacity="0.55"/><rect x="46.0" y="53.0" width="3.0" height="1.6" fill="#3c9a3c" fill-opacity="0.55"/><rect x="50.0" y="53.0" width="7.0" height="1.6" fill="#3c9a3c" fill-opacity="0.55"/><rect x="58.0" y="53.0" width="3.0" height="1.6" fill="#3c9a3c" fill-opacity="0.55"/><rect x="62.0" y="53.0" width="2.0" height="1.6" fill="#3c9a3c" fill-opacity="0.55"/><rect x="65.0" y="53.0" width="3.0" height="1.6" fill="#3c9a3c" fill-opacity="0.55"/><rect x="8.0" y="56.0" width="4.0" height="1.6" fill="#3c9a3c" fill-opacity="0.55"/><rect x="10.0" y="58.0" width="4.0" height="1.6" fill="#3c9a3c" fill-opacity="0.55"/><rect x="15.0" y="58.0" width="4.0" height="1.6" fill="#3c9a3c" fill-opacity="0.55"/><rect x="20.0" y="58.0" width="2.0" height="1.6" fill="#3c9a3c" fill-opacity="0.55"/><rect x="23.0" y="58.0" width="3.0" height="1.6" fill="#3c9a3c" fill-opacity="0.55"/><rect x="27.0" y="58.0" width="5.0" height="1.6" fill="#3c9a3c" fill-opacity="0.55"/><rect x="33.0" y="58.0" width="6.0" height="1.6" fill="#3c9a3c" fill-opacity="0.55"/><rect x="40.0" y="58.0" width="4.0" height="1.6" fill="#3c9a3c" fill-opacity="0.55"/><rect x="45.0" y="58.0" width="6.0" height="1.6" fill="#3c9a3c" fill-opacity="0.55"/><rect x="52.0" y="58.0" width="6.0" height="1.6" fill="#3c9a3c" fill-opacity="0.55"/><rect x="59.0" y="58.0" width="4.0" height="1.6" fill="#3c9a3c" fill-opacity="0.55"/><rect x="64.0" y="58.0" width="1.0" height="1.6" fill="#3c9a3c" fill-opacity="0.55"/><rect x="22.0" y="60.0" width="6.0" height="1.6" fill="#3c9a3c" fill-opacity="0.55"/><rect x="29.0" y="60.0" width="6.0" height="1.6" fill="#3c9a3c" fill-opacity="0.55"/><rect x="36.0" y="60.0" width="7.0" height="1.6" fill="#3c9a3c" fill-opacity="0.55"/><rect x="44.0" y="60.0" width="7.0" height="1.6" fill="#3c9a3c" fill-opacity="0.55"/><rect x="52.0" y="60.0" width="7.0" height="1.6" fill="#3c9a3c" fill-opacity="0.55"/><rect x="60.0" y="60.0" width="2.0" height="1.6" fill="#3c9a3c" fill-opacity="0.55"/><rect x="63.0" y="60.0" width="5.0" height="1.6" fill="#3c9a3c" fill-opacity="0.55"/><rect x="69.0" y="60.0" width="7.0" height="1.6" fill="#3c9a3c" fill-opacity="0.55"/><rect x="77.0" y="60.0" width="5.0" height="1.6" fill="#3c9a3c" fill-opacity="0.55"/><rect x="22.0" y="62.0" width="5.0" height="1.6" fill="#3c9a3c" fill-opacity="0.55"/><rect x="28.0" y="62.0" width="5.0" height="1.6" fill="#3c9a3c" fill-opacity="0.55"/><rect x="34.0" y="62.0" width="5.0" height="1.6" fill="#3c9a3c" fill-opacity="0.55"/><rect x="40.0" y="62.0" width="2.0" height="1.6" fill="#3c9a3c" fill-opacity="0.55"/><rect x="43.0" y="62.0" width="5.0" height="1.6" fill="#3c9a3c" fill-opacity="0.55"/><rect x="49.0" y="62.0" width="7.0" height="1.6" fill="#3c9a3c" fill-opacity="0.55"/><rect x="57.0" y="62.0" width="5.0" height="1.6" fill="#3c9a3c" fill-opacity="0.55"/><rect x="63.0" y="62.0" width="2.0" height="1.6" fill="#3c9a3c" fill-opacity="0.55"/><rect x="66.0" y="62.0" width="3.0" height="1.6" fill="#3c9a3c" fill-opacity="0.55"/><rect x="70.0" y="62.0" width="2.0" height="1.6" fill="#3c9a3c" fill-opacity="0.55"/><rect x="22.0" y="64.0" width="5.0" height="1.6" fill="#3c9a3c" fill-opacity="0.55"/><rect x="28.0" y="64.0" width="3.0" height="1.6" fill="#3c9a3c" fill-opacity="0.55"/><rect x="32.0" y="64.0" width="2.0" height="1.6" fill="#3c9a3c" fill-opacity="0.55"/><rect x="35.0" y="64.0" width="4.0" height="1.6" fill="#3c9a3c" fill-opacity="0.55"/><rect x="40.0" y="64.0" width="6.0" height="1.6" fill="#3c9a3c" fill-opacity="0.55"/><rect x="47.0" y="64.0" width="2.0" height="1.6" fill="#3c9a3c" fill-opacity="0.55"/><rect x="50.0" y="64.0" width="2.0" height="1.6" fill="#3c9a3c" fill-opacity="0.55"/><rect x="53.0" y="64.0" width="2.0" height="1.6" fill="#3c9a3c" fill-opacity="0.55"/><rect x="56.0" y="64.0" width="6.0" height="1.6" fill="#3c9a3c" fill-opacity="0.55"/><rect x="63.0" y="64.0" width="3.0" height="1.6" fill="#3c9a3c" fill-opacity="0.55"/><rect x="10.0" y="66.0" width="2.0" height="1.6" fill="#3c9a3c" fill-opacity="0.55"/><rect x="13.0" y="66.0" width="4.0" height="1.6" fill="#3c9a3c" fill-opacity="0.55"/><rect x="18.0" y="66.0" width="6.0" height="1.6" fill="#3c9a3c" fill-opacity="0.55"/><rect x="25.0" y="66.0" width="2.0" height="1.6" fill="#3c9a3c" fill-opacity="0.55"/><rect x="28.0" y="66.0" width="2.0" height="1.6" fill="#3c9a3c" fill-opacity="0.55"/><rect x="31.0" y="66.0" width="3.0" height="1.6" fill="#3c9a3c" fill-opacity="0.55"/><rect x="35.0" y="66.0" width="6.0" height="1.6" fill="#3c9a3c" fill-opacity="0.55"/><rect x="42.0" y="66.0" width="5.0" height="1.6" fill="#3c9a3c" fill-opacity="0.55"/><rect x="48.0" y="66.0" width="3.0" height="1.6" fill="#3c9a3c" fill-opacity="0.55"/><rect x="52.0" y="66.0" width="7.0" height="1.6" fill="#3c9a3c" fill-opacity="0.55"/><rect x="60.0" y="66.0" width="4.0" height="1.6" fill="#3c9a3c" fill-opacity="0.55"/><rect x="65.0" y="66.0" width="4.0" height="1.6" fill="#3c9a3c" fill-opacity="0.55"/><rect x="70.0" y="66.0" width="6.0" height="1.6" fill="#3c9a3c" fill-opacity="0.55"/><rect x="8.0" y="68.5" width="88.0" height="2" fill="#8cc0f5" fill-opacity="0.95"/><rect x="11.0" y="68.5" width="7.0" height="2" fill="#2f86ee"/><rect x="8.0" y="70.5" width="4.0" height="1.6" fill="#3c9a3c" fill-opacity="0.55"/><rect x="12.0" y="74.5" width="5.0" height="1.6" fill="#9a9a9a" fill-opacity="0.55"/><rect x="18.0" y="74.5" width="2.0" height="1.6" fill="#9a9a9a" fill-opacity="0.55"/><rect x="21.0" y="74.5" width="2.0" height="1.6" fill="#9a9a9a" fill-opacity="0.55"/><rect x="24.0" y="74.5" width="5.0" height="1.6" fill="#9a9a9a" fill-opacity="0.55"/><rect x="30.0" y="74.5" width="5.0" height="1.6" fill="#9a9a9a" fill-opacity="0.55"/><rect x="36.0" y="74.5" width="5.0" height="1.6" fill="#9a9a9a" fill-opacity="0.55"/><rect x="13.0" y="76.5" width="5.0" height="1.6" fill="#2a3a8a" fill-opacity="0.55"/><rect x="19.0" y="76.5" width="4.0" height="1.6" fill="#2a3a8a" fill-opacity="0.55"/><rect x="24.0" y="76.5" width="2.0" height="1.6" fill="#2a3a8a" fill-opacity="0.55"/><rect x="27.0" y="76.5" width="3.0" height="1.6" fill="#2a3a8a" fill-opacity="0.55"/><rect x="31.0" y="76.5" width="2.0" height="1.6" fill="#2a3a8a" fill-opacity="0.55"/><rect x="34.0" y="76.5" width="7.0" height="1.6" fill="#2a3a8a" fill-opacity="0.55"/><rect x="13.0" y="78.5" width="4.0" height="1.6" fill="#2a3a8a" fill-opacity="0.55"/><rect x="18.0" y="78.5" width="7.0" height="1.6" fill="#2a3a8a" fill-opacity="0.55"/><rect x="26.0" y="78.5" width="4.0" height="1.6" fill="#2a3a8a" fill-opacity="0.55"/><rect x="31.0" y="78.5" width="5.0" height="1.6" fill="#2a3a8a" fill-opacity="0.55"/><rect x="37.0" y="78.5" width="4.0" height="1.6" fill="#2a3a8a" fill-opacity="0.55"/><rect x="8.0" y="80.5" width="15.0" height="1.3" fill="#222" fill-opacity="0.8"/><rect x="8.0" y="82.5" width="88.0" height="2" fill="#8cc0f5" fill-opacity="0.95"/><rect x="22.0" y="82.5" width="6.0" height="2" fill="#2f86ee"/><rect x="10.0" y="82.7" width="3.0" height="1.6" fill="#9a9a9a" fill-opacity="0.55"/><rect x="14.0" y="82.7" width="6.0" height="1.6" fill="#9a9a9a" fill-opacity="0.55"/><rect x="8.0" y="86.5" width="2.0" height="1.6" fill="#3c9a3c" fill-opacity="0.55"/><rect x="11.0" y="86.5" width="3.0" height="1.6" fill="#3c9a3c" fill-opacity="0.55"/><rect x="15.0" y="86.5" width="6.0" height="1.6" fill="#3c9a3c" fill-opacity="0.55"/><rect x="22.0" y="86.5" width="4.0" height="1.6" fill="#3c9a3c" fill-opacity="0.55"/><rect x="27.0" y="86.5" width="3.0" height="1.6" fill="#3c9a3c" fill-opacity="0.55"/><rect x="31.0" y="86.5" width="7.0" height="1.6" fill="#3c9a3c" fill-opacity="0.55"/><rect x="39.0" y="86.5" width="6.0" height="1.6" fill="#3c9a3c" fill-opacity="0.55"/><rect x="46.0" y="86.5" width="2.0" height="1.6" fill="#3c9a3c" fill-opacity="0.55"/><rect x="49.0" y="86.5" width="6.0" height="1.6" fill="#3c9a3c" fill-opacity="0.55"/><rect x="56.0" y="86.5" width="4.0" height="1.6" fill="#3c9a3c" fill-opacity="0.55"/><rect x="10.0" y="88.5" width="7.0" height="1.6" fill="#9a7a40" fill-opacity="0.55"/><rect x="18.0" y="88.5" width="2.0" height="1.6" fill="#9a7a40" fill-opacity="0.55"/><rect x="21.0" y="88.5" width="2.0" height="1.6" fill="#9a7a40" fill-opacity="0.55"/><rect x="8.0" y="91.0" width="88.0" height="6" fill="#e6f1fa"/><rect x="8.0" y="91.5" width="4.0" height="1.6" fill="#3c9a3c" fill-opacity="0.55"/><rect x="13.0" y="91.5" width="6.0" height="1.6" fill="#3c9a3c" fill-opacity="0.55"/><rect x="20.0" y="91.5" width="4.0" height="1.6" fill="#3c9a3c" fill-opacity="0.55"/><rect x="25.0" y="91.5" width="3.0" height="1.6" fill="#3c9a3c" fill-opacity="0.55"/><rect x="29.0" y="91.5" width="4.0" height="1.6" fill="#3c9a3c" fill-opacity="0.55"/><rect x="34.0" y="91.5" width="3.0" height="1.6" fill="#3c9a3c" fill-opacity="0.55"/><rect x="38.0" y="91.5" width="6.0" height="1.6" fill="#3c9a3c" fill-opacity="0.55"/><rect x="45.0" y="91.5" width="6.0" height="1.6" fill="#3c9a3c" fill-opacity="0.55"/><rect x="52.0" y="91.5" width="6.0" height="1.6" fill="#3c9a3c" fill-opacity="0.55"/><rect x="59.0" y="91.5" width="1.0" height="1.6" fill="#3c9a3c" fill-opacity="0.55"/><rect x="8.0" y="93.5" width="7.0" height="1.6" fill="#2a3a8a" fill-opacity="0.55"/><rect x="16.0" y="93.5" width="3.0" height="1.6" fill="#2a3a8a" fill-opacity="0.55"/><rect x="20.0" y="93.5" width="2.0" height="1.6" fill="#2a3a8a" fill-opacity="0.55"/><rect x="8.0" y="95.5" width="3.0" height="1.6" fill="#2a3a8a" fill-opacity="0.55"/><rect x="12.0" y="95.5" width="3.0" height="1.6" fill="#2a3a8a" fill-opacity="0.55"/><rect x="16.0" y="95.5" width="5.0" height="1.6" fill="#2a3a8a" fill-opacity="0.55"/><rect x="22.0" y="95.5" width="5.0" height="1.6" fill="#2a3a8a" fill-opacity="0.55"/><rect x="8.0" y="97.5" width="3.0" height="1.6" fill="#3c9a3c" fill-opacity="0.55"/><rect x="12.0" y="97.5" width="3.0" height="1.6" fill="#3c9a3c" fill-opacity="0.55"/><rect x="16.0" y="97.5" width="6.0" height="1.6" fill="#3c9a3c" fill-opacity="0.55"/><rect x="23.0" y="97.5" width="5.0" height="1.6" fill="#3c9a3c" fill-opacity="0.55"/><rect x="29.0" y="97.5" width="4.0" height="1.6" fill="#3c9a3c" fill-opacity="0.55"/><rect x="34.0" y="97.5" width="6.0" height="1.6" fill="#3c9a3c" fill-opacity="0.55"/><rect x="8.0" y="99.5" width="88.0" height="6" fill="#9ccaf7" fill-opacity="0.9"/><rect x="10.0" y="100.0" width="14.0" height="4.5" fill="#2f86ee" fill-opacity="0.9"/><rect x="10.0" y="100.0" width="2.0" height="1.6" fill="#2a3a8a" fill-opacity="0.8"/><rect x="13.0" y="100.0" width="2.0" height="1.6" fill="#2a3a8a" fill-opacity="0.8"/><rect x="16.0" y="100.0" width="4.0" height="1.6" fill="#2a3a8a" fill-opacity="0.8"/><rect x="21.0" y="100.0" width="1.0" height="1.6" fill="#2a3a8a" fill-opacity="0.8"/><rect x="10.0" y="102.0" width="4.0" height="1.6" fill="#2a3a8a" fill-opacity="0.8"/><rect x="15.0" y="102.0" width="3.0" height="1.6" fill="#2a3a8a" fill-opacity="0.8"/><rect x="19.0" y="102.0" width="3.0" height="1.6" fill="#2a3a8a" fill-opacity="0.8"/><rect x="8.0" y="105.5" width="88.0" height="2" fill="#8cc0f5" fill-opacity="0.95"/><rect x="20.0" y="105.5" width="7.0" height="2" fill="#2f86ee"/><rect x="10.0" y="105.5" width="6.0" height="1.6" fill="#9a7a40" fill-opacity="0.55"/><rect x="17.0" y="105.5" width="3.0" height="1.6" fill="#9a7a40" fill-opacity="0.55"/><rect x="8.0" y="110.0" width="88.0" height="2" fill="#8cc0f5" fill-opacity="0.95"/><rect x="12.0" y="110.0" width="7.0" height="2" fill="#2f86ee"/><rect x="10.0" y="112.5" width="5.0" height="1.6" fill="#9a7a40" fill-opacity="0.55"/><rect x="16.0" y="112.5" width="4.0" height="1.6" fill="#9a7a40" fill-opacity="0.55"/><rect x="10.0" y="114.5" width="4.0" height="1.6" fill="#2a3a8a" fill-opacity="0.55"/><rect x="15.0" y="114.5" width="4.0" height="1.6" fill="#2a3a8a" fill-opacity="0.55"/><rect x="20.0" y="114.5" width="2.0" height="1.6" fill="#2a3a8a" fill-opacity="0.55"/><rect x="23.0" y="114.5" width="3.0" height="1.6" fill="#2a3a8a" fill-opacity="0.55"/><rect x="27.0" y="114.5" width="2.0" height="1.6" fill="#2a3a8a" fill-opacity="0.55"/><rect x="30.0" y="114.5" width="3.0" height="1.6" fill="#2a3a8a" fill-opacity="0.55"/><rect x="34.0" y="114.5" width="3.0" height="1.6" fill="#2a3a8a" fill-opacity="0.55"/><rect x="8.0" y="118.0" width="3.0" height="1.6" fill="#9a9a9a" fill-opacity="0.55"/><rect x="12.0" y="118.0" width="4.0" height="1.6" fill="#9a9a9a" fill-opacity="0.55"/><rect x="8.0" y="118.5" width="88.0" height="2" fill="#8cc0f5" fill-opacity="0.95"/><rect x="16.0" y="118.5" width="7.0" height="2" fill="#2f86ee"/><rect x="10.0" y="120.5" width="3.0" height="1.6" fill="#9a7a40" fill-opacity="0.55"/><rect x="14.0" y="120.5" width="5.0" height="1.6" fill="#9a7a40" fill-opacity="0.55"/><rect x="20.0" y="120.5" width="2.0" height="1.6" fill="#9a7a40" fill-opacity="0.55"/><rect x="10.0" y="122.5" width="6.0" height="1.6" fill="#2a3a8a" fill-opacity="0.55"/><rect x="17.0" y="122.5" width="2.0" height="1.6" fill="#2a3a8a" fill-opacity="0.55"/><rect x="20.0" y="122.5" width="5.0" height="1.6" fill="#2a3a8a" fill-opacity="0.55"/><rect x="26.0" y="122.5" width="7.0" height="1.6" fill="#2a3a8a" fill-opacity="0.55"/><rect x="34.0" y="122.5" width="3.0" height="1.6" fill="#2a3a8a" fill-opacity="0.55"/><rect x="8.0" y="122.5" width="88.0" height="2" fill="#8cc0f5" fill-opacity="0.95"/><rect x="10.0" y="122.5" width="15.0" height="2" fill="#2f86ee"/><rect x="8.0" y="126.5" width="7.0" height="1.6" fill="#3c9a3c" fill-opacity="0.55"/><rect x="16.0" y="126.5" width="2.0" height="1.6" fill="#3c9a3c" fill-opacity="0.55"/><rect x="19.0" y="126.5" width="7.0" height="1.6" fill="#3c9a3c" fill-opacity="0.55"/><rect x="27.0" y="126.5" width="2.0" height="1.6" fill="#3c9a3c" fill-opacity="0.55"/><rect x="30.0" y="126.5" width="5.0" height="1.6" fill="#3c9a3c" fill-opacity="0.55"/><rect x="36.0" y="126.5" width="2.0" height="1.6" fill="#3c9a3c" fill-opacity="0.55"/><rect x="8.0" y="128.5" width="88.0" height="2" fill="#8cc0f5" fill-opacity="0.95"/><rect x="23.0" y="128.5" width="8.0" height="2" fill="#2f86ee"/><rect x="8.0" y="130.5" width="3.0" height="1.6" fill="#3c9a3c" fill-opacity="0.55"/><rect x="12.0" y="130.5" width="5.0" height="1.6" fill="#3c9a3c" fill-opacity="0.55"/><rect x="18.0" y="130.5" width="3.0" height="1.6" fill="#3c9a3c" fill-opacity="0.55"/><rect x="22.0" y="130.5" width="5.0" height="1.6" fill="#3c9a3c" fill-opacity="0.55"/><rect x="28.0" y="130.5" width="7.0" height="1.6" fill="#3c9a3c" fill-opacity="0.55"/><rect x="36.0" y="130.5" width="4.0" height="1.6" fill="#3c9a3c" fill-opacity="0.55"/><rect x="41.0" y="130.5" width="2.0" height="1.6" fill="#3c9a3c" fill-opacity="0.55"/><rect x="44.0" y="130.5" width="3.0" height="1.6" fill="#3c9a3c" fill-opacity="0.55"/><rect x="10.0" y="132.5" width="5.0" height="1.6" fill="#9a7a40" fill-opacity="0.55"/><rect x="16.0" y="132.5" width="4.0" height="1.6" fill="#9a7a40" fill-opacity="0.55"/><rect x="10.0" y="134.5" width="5.0" height="1.6" fill="#9a7a40" fill-opacity="0.55"/><rect x="10.0" y="136.5" width="7.0" height="1.6" fill="#2a3a8a" fill-opacity="0.55"/><rect x="18.0" y="136.5" width="2.0" height="1.6" fill="#2a3a8a" fill-opacity="0.55"/><rect x="21.0" y="136.5" width="7.0" height="1.6" fill="#2a3a8a" fill-opacity="0.55"/><rect x="29.0" y="136.5" width="3.0" height="1.6" fill="#2a3a8a" fill-opacity="0.55"/><rect x="33.0" y="136.5" width="3.0" height="1.6" fill="#2a3a8a" fill-opacity="0.55"/><rect x="37.0" y="136.5" width="3.0" height="1.6" fill="#2a3a8a" fill-opacity="0.55"/><rect x="41.0" y="136.5" width="2.0" height="1.6" fill="#2a3a8a" fill-opacity="0.55"/><rect x="44.0" y="136.5" width="1.0" height="1.6" fill="#2a3a8a" fill-opacity="0.55"/><rect x="8.0" y="140.0" width="3.0" height="1.6" fill="#3c9a3c" fill-opacity="0.55"/><rect x="10.0" y="142.0" width="7.0" height="1.6" fill="#3c9a3c" fill-opacity="0.55"/><rect x="18.0" y="142.0" width="3.0" height="1.6" fill="#3c9a3c" fill-opacity="0.55"/><rect x="22.0" y="142.0" width="6.0" height="1.6" fill="#3c9a3c" fill-opacity="0.55"/><rect x="29.0" y="142.0" width="6.0" height="1.6" fill="#3c9a3c" fill-opacity="0.55"/><rect x="36.0" y="142.0" width="5.0" height="1.6" fill="#3c9a3c" fill-opacity="0.55"/><rect x="42.0" y="142.0" width="7.0" height="1.6" fill="#3c9a3c" fill-opacity="0.55"/><rect x="50.0" y="142.0" width="4.0" height="1.6" fill="#3c9a3c" fill-opacity="0.55"/><rect x="55.0" y="142.0" width="3.0" height="1.6" fill="#3c9a3c" fill-opacity="0.55"/><rect x="59.0" y="142.0" width="6.0" height="1.6" fill="#3c9a3c" fill-opacity="0.55"/><rect x="66.0" y="142.0" width="6.0" height="1.6" fill="#3c9a3c" fill-opacity="0.55"/><rect x="73.0" y="142.0" width="3.0" height="1.6" fill="#3c9a3c" fill-opacity="0.55"/><rect x="77.0" y="142.0" width="2.0" height="1.6" fill="#3c9a3c" fill-opacity="0.55"/><rect x="80.0" y="142.0" width="2.0" height="1.6" fill="#3c9a3c" fill-opacity="0.55"/><rect x="10.0" y="144.0" width="7.0" height="1.6" fill="#3c9a3c" fill-opacity="0.55"/><rect x="18.0" y="144.0" width="7.0" height="1.6" fill="#3c9a3c" fill-opacity="0.55"/><rect x="26.0" y="144.0" width="2.0" height="1.6" fill="#3c9a3c" fill-opacity="0.55"/><rect x="29.0" y="144.0" width="6.0" height="1.6" fill="#3c9a3c" fill-opacity="0.55"/><rect x="36.0" y="144.0" width="7.0" height="1.6" fill="#3c9a3c" fill-opacity="0.55"/><rect x="44.0" y="144.0" width="3.0" height="1.6" fill="#3c9a3c" fill-opacity="0.55"/><rect x="48.0" y="144.0" width="5.0" height="1.6" fill="#3c9a3c" fill-opacity="0.55"/><rect x="54.0" y="144.0" width="3.0" height="1.6" fill="#3c9a3c" fill-opacity="0.55"/><rect x="58.0" y="144.0" width="3.0" height="1.6" fill="#3c9a3c" fill-opacity="0.55"/><rect x="62.0" y="144.0" width="2.0" height="1.6" fill="#3c9a3c" fill-opacity="0.55"/><rect x="65.0" y="144.0" width="4.0" height="1.6" fill="#3c9a3c" fill-opacity="0.55"/><rect x="70.0" y="144.0" width="3.0" height="1.6" fill="#3c9a3c" fill-opacity="0.55"/><rect x="74.0" y="144.0" width="4.0" height="1.6" fill="#3c9a3c" fill-opacity="0.55"/><rect x="79.0" y="144.0" width="6.0" height="1.6" fill="#3c9a3c" fill-opacity="0.55"/><rect x="86.0" y="144.0" width="1.0" height="1.6" fill="#3c9a3c" fill-opacity="0.55"/><rect x="10.0" y="146.0" width="6.0" height="1.6" fill="#3c9a3c" fill-opacity="0.55"/><rect x="17.0" y="146.0" width="4.0" height="1.6" fill="#3c9a3c" fill-opacity="0.55"/><rect x="22.0" y="146.0" width="4.0" height="1.6" fill="#3c9a3c" fill-opacity="0.55"/><rect x="27.0" y="146.0" width="6.0" height="1.6" fill="#3c9a3c" fill-opacity="0.55"/><rect x="34.0" y="146.0" width="5.0" height="1.6" fill="#3c9a3c" fill-opacity="0.55"/><rect x="40.0" y="146.0" width="3.0" height="1.6" fill="#3c9a3c" fill-opacity="0.55"/><rect x="44.0" y="146.0" width="2.0" height="1.6" fill="#3c9a3c" fill-opacity="0.55"/><rect x="47.0" y="146.0" width="7.0" height="1.6" fill="#3c9a3c" fill-opacity="0.55"/><rect x="55.0" y="146.0" width="4.0" height="1.6" fill="#3c9a3c" fill-opacity="0.55"/><rect x="60.0" y="146.0" width="5.0" height="1.6" fill="#3c9a3c" fill-opacity="0.55"/><rect x="66.0" y="146.0" width="7.0" height="1.6" fill="#3c9a3c" fill-opacity="0.55"/><rect x="74.0" y="146.0" width="6.0" height="1.6" fill="#3c9a3c" fill-opacity="0.55"/><rect x="81.0" y="146.0" width="6.0" height="1.6" fill="#3c9a3c" fill-opacity="0.55"/><rect x="10.0" y="148.0" width="6.0" height="1.6" fill="#3c9a3c" fill-opacity="0.55"/><rect x="17.0" y="148.0" width="3.0" height="1.6" fill="#3c9a3c" fill-opacity="0.55"/><rect x="21.0" y="148.0" width="6.0" height="1.6" fill="#3c9a3c" fill-opacity="0.55"/><rect x="28.0" y="148.0" width="3.0" height="1.6" fill="#3c9a3c" fill-opacity="0.55"/><rect x="32.0" y="148.0" width="6.0" height="1.6" fill="#3c9a3c" fill-opacity="0.55"/><rect x="39.0" y="148.0" width="6.0" height="1.6" fill="#3c9a3c" fill-opacity="0.55"/><rect x="46.0" y="148.0" width="2.0" height="1.6" fill="#3c9a3c" fill-opacity="0.55"/><rect x="49.0" y="148.0" width="5.0" height="1.6" fill="#3c9a3c" fill-opacity="0.55"/><rect x="55.0" y="148.0" width="3.0" height="1.6" fill="#3c9a3c" fill-opacity="0.55"/><rect x="59.0" y="148.0" width="6.0" height="1.6" fill="#3c9a3c" fill-opacity="0.55"/><rect x="66.0" y="148.0" width="2.0" height="1.6" fill="#3c9a3c" fill-opacity="0.55"/><rect x="69.0" y="148.0" width="3.0" height="1.6" fill="#3c9a3c" fill-opacity="0.55"/><rect x="73.0" y="148.0" width="3.0" height="1.6" fill="#3c9a3c" fill-opacity="0.55"/><rect x="77.0" y="148.0" width="3.0" height="1.6" fill="#3c9a3c" fill-opacity="0.55"/><rect x="8.0" y="149.5" width="88.0" height="2" fill="#8cc0f5" fill-opacity="0.95"/><rect x="12.0" y="149.5" width="6.0" height="2" fill="#2f86ee"/><rect x="8.0" y="153.5" width="88.0" height="2" fill="#8cc0f5" fill-opacity="0.95"/><rect x="50.0" y="153.5" width="9.0" height="2" fill="#2f86ee"/><rect x="13.0" y="153.5" width="5.0" height="1.6" fill="#2a3a8a" fill-opacity="0.55"/><rect x="19.0" y="153.5" width="6.0" height="1.6" fill="#2a3a8a" fill-opacity="0.55"/><rect x="26.0" y="153.5" width="7.0" height="1.6" fill="#2a3a8a" fill-opacity="0.55"/><rect x="34.0" y="153.5" width="2.0" height="1.6" fill="#2a3a8a" fill-opacity="0.55"/><rect x="37.0" y="153.5" width="6.0" height="1.6" fill="#2a3a8a" fill-opacity="0.55"/><rect x="44.0" y="153.5" width="2.0" height="1.6" fill="#2a3a8a" fill-opacity="0.55"/><rect x="47.0" y="153.5" width="3.0" height="1.6" fill="#2a3a8a" fill-opacity="0.55"/><rect x="8.0" y="155.5" width="15.0" height="1.3" fill="#222" fill-opacity="0.8"/><rect x="8.0" y="157.5" width="14.0" height="1.3" fill="#222" fill-opacity="0.8"/><rect x="10.0" y="159.5" width="7.0" height="1.6" fill="#9a7a40" fill-opacity="0.55"/><rect x="18.0" y="159.5" width="2.0" height="1.6" fill="#9a7a40" fill-opacity="0.55"/><rect x="10.0" y="161.5" width="6.0" height="1.6" fill="#2a3a8a" fill-opacity="0.55"/><rect x="17.0" y="161.5" width="6.0" height="1.6" fill="#2a3a8a" fill-opacity="0.55"/><rect x="24.0" y="161.5" width="5.0" height="1.6" fill="#2a3a8a" fill-opacity="0.55"/><rect x="30.0" y="161.5" width="2.0" height="1.6" fill="#2a3a8a" fill-opacity="0.55"/><rect x="33.0" y="161.5" width="6.0" height="1.6" fill="#2a3a8a" fill-opacity="0.55"/><rect x="40.0" y="161.5" width="2.0" height="1.6" fill="#2a3a8a" fill-opacity="0.55"/><rect x="43.0" y="161.5" width="3.0" height="1.6" fill="#2a3a8a" fill-opacity="0.55"/><rect x="8.0" y="164.0" width="80.0" height="1.2" fill="#3c9a3c" fill-opacity="0.7"/><rect x="8.0" y="164.0" width="1.0" height="13" fill="#3c9a3c" fill-opacity="0.6"/><rect x="10.0" y="168.0" width="3.0" height="1.6" fill="#3c9a3c" fill-opacity="0.55"/><rect x="14.0" y="168.0" width="4.0" height="1.6" fill="#3c9a3c" fill-opacity="0.55"/><rect x="19.0" y="168.0" width="2.0" height="1.6" fill="#3c9a3c" fill-opacity="0.55"/><rect x="22.0" y="168.0" width="2.0" height="1.6" fill="#3c9a3c" fill-opacity="0.55"/><rect x="25.0" y="168.0" width="6.0" height="1.6" fill="#3c9a3c" fill-opacity="0.55"/><rect x="32.0" y="168.0" width="5.0" height="1.6" fill="#3c9a3c" fill-opacity="0.55"/><rect x="38.0" y="168.0" width="6.0" height="1.6" fill="#3c9a3c" fill-opacity="0.55"/><rect x="45.0" y="168.0" width="2.0" height="1.6" fill="#3c9a3c" fill-opacity="0.55"/><rect x="48.0" y="168.0" width="2.0" height="1.6" fill="#3c9a3c" fill-opacity="0.55"/><rect x="51.0" y="168.0" width="5.0" height="1.6" fill="#3c9a3c" fill-opacity="0.55"/><rect x="57.0" y="168.0" width="4.0" height="1.6" fill="#3c9a3c" fill-opacity="0.55"/><rect x="62.0" y="168.0" width="6.0" height="1.6" fill="#3c9a3c" fill-opacity="0.55"/><rect x="69.0" y="168.0" width="6.0" height="1.6" fill="#3c9a3c" fill-opacity="0.55"/><rect x="76.0" y="168.0" width="6.0" height="1.6" fill="#3c9a3c" fill-opacity="0.55"/><rect x="10.0" y="170.0" width="6.0" height="1.6" fill="#3c9a3c" fill-opacity="0.55"/><rect x="17.0" y="170.0" width="3.0" height="1.6" fill="#3c9a3c" fill-opacity="0.55"/><rect x="21.0" y="170.0" width="7.0" height="1.6" fill="#3c9a3c" fill-opacity="0.55"/><rect x="29.0" y="170.0" width="4.0" height="1.6" fill="#3c9a3c" fill-opacity="0.55"/><rect x="34.0" y="170.0" width="5.0" height="1.6" fill="#3c9a3c" fill-opacity="0.55"/><rect x="40.0" y="170.0" width="6.0" height="1.6" fill="#3c9a3c" fill-opacity="0.55"/><rect x="47.0" y="170.0" width="6.0" height="1.6" fill="#3c9a3c" fill-opacity="0.55"/><rect x="54.0" y="170.0" width="5.0" height="1.6" fill="#3c9a3c" fill-opacity="0.55"/><rect x="60.0" y="170.0" width="6.0" height="1.6" fill="#3c9a3c" fill-opacity="0.55"/><rect x="67.0" y="170.0" width="3.0" height="1.6" fill="#3c9a3c" fill-opacity="0.55"/><rect x="71.0" y="170.0" width="7.0" height="1.6" fill="#3c9a3c" fill-opacity="0.55"/><rect x="10.0" y="172.0" width="6.0" height="1.6" fill="#3c9a3c" fill-opacity="0.55"/><rect x="17.0" y="172.0" width="4.0" height="1.6" fill="#3c9a3c" fill-opacity="0.55"/><rect x="8.0" y="176.0" width="80.0" height="1.2" fill="#3c9a3c" fill-opacity="0.7"/><rect x="8.0" y="178.5" width="88.0" height="2" fill="#8cc0f5" fill-opacity="0.95"/><rect x="38.0" y="178.5" width="8.0" height="2" fill="#2f86ee"/><rect x="13.0" y="178.5" width="6.0" height="1.6" fill="#2a3a8a" fill-opacity="0.55"/><rect x="20.0" y="178.5" width="3.0" height="1.6" fill="#2a3a8a" fill-opacity="0.55"/><rect x="24.0" y="178.5" width="5.0" height="1.6" fill="#2a3a8a" fill-opacity="0.55"/><rect x="30.0" y="178.5" width="3.0" height="1.6" fill="#2a3a8a" fill-opacity="0.55"/><rect x="34.0" y="178.5" width="4.0" height="1.6" fill="#2a3a8a" fill-opacity="0.55"/><rect x="12.0" y="180.5" width="2.0" height="1.6" fill="#9a9a9a" fill-opacity="0.55"/><rect x="15.0" y="180.5" width="5.0" height="1.6" fill="#9a9a9a" fill-opacity="0.55"/><rect x="21.0" y="180.5" width="5.0" height="1.6" fill="#9a9a9a" fill-opacity="0.55"/><rect x="27.0" y="180.5" width="1.0" height="1.6" fill="#9a9a9a" fill-opacity="0.55"/><rect x="30.0" y="180.5" width="2.0" height="1.6" fill="#2a3a8a" fill-opacity="0.55"/><rect x="33.0" y="180.5" width="7.0" height="1.6" fill="#2a3a8a" fill-opacity="0.55"/><rect x="41.0" y="180.5" width="3.0" height="1.6" fill="#2a3a8a" fill-opacity="0.55"/><rect x="8.0" y="186.5" width="15.0" height="1.3" fill="#222" fill-opacity="0.8"/><rect x="8.0" y="188.5" width="88.0" height="2" fill="#8cc0f5" fill-opacity="0.95"/><rect x="10.0" y="188.5" width="14.0" height="2" fill="#2f86ee"/><rect x="11.0" y="190.5" width="4.0" height="1.6" fill="#9a9a9a" fill-opacity="0.55"/><rect x="17.0" y="190.5" width="3.0" height="1.6" fill="#2a3a8a" fill-opacity="0.55"/><rect x="21.0" y="190.5" width="7.0" height="1.6" fill="#2a3a8a" fill-opacity="0.55"/><rect x="29.0" y="190.5" width="4.0" height="1.6" fill="#2a3a8a" fill-opacity="0.55"/><rect x="11.0" y="192.5" width="2.0" height="1.6" fill="#9a9a9a" fill-opacity="0.55"/><rect x="14.0" y="192.5" width="1.0" height="1.6" fill="#9a9a9a" fill-opacity="0.55"/><rect x="17.0" y="192.5" width="7.0" height="1.6" fill="#2a3a8a" fill-opacity="0.55"/><rect x="25.0" y="192.5" width="7.0" height="1.6" fill="#2a3a8a" fill-opacity="0.55"/><rect x="33.0" y="192.5" width="4.0" height="1.6" fill="#2a3a8a" fill-opacity="0.55"/><rect x="38.0" y="192.5" width="1.0" height="1.6" fill="#2a3a8a" fill-opacity="0.55"/><rect x="11.0" y="194.5" width="4.0" height="1.6" fill="#9a9a9a" fill-opacity="0.55"/><rect x="17.0" y="194.5" width="5.0" height="1.6" fill="#2a3a8a" fill-opacity="0.55"/><rect x="23.0" y="194.5" width="3.0" height="1.6" fill="#2a3a8a" fill-opacity="0.55"/><rect x="27.0" y="194.5" width="7.0" height="1.6" fill="#2a3a8a" fill-opacity="0.55"/><rect x="11.0" y="196.5" width="2.0" height="1.6" fill="#9a9a9a" fill-opacity="0.55"/><rect x="14.0" y="196.5" width="1.0" height="1.6" fill="#9a9a9a" fill-opacity="0.55"/><rect x="17.0" y="196.5" width="3.0" height="1.6" fill="#2a3a8a" fill-opacity="0.55"/><rect x="21.0" y="196.5" width="7.0" height="1.6" fill="#2a3a8a" fill-opacity="0.55"/><rect x="29.0" y="196.5" width="3.0" height="1.6" fill="#2a3a8a" fill-opacity="0.55"/><rect x="33.0" y="196.5" width="3.0" height="1.6" fill="#2a3a8a" fill-opacity="0.55"/><rect x="11.0" y="198.5" width="4.0" height="1.6" fill="#9a9a9a" fill-opacity="0.55"/><rect x="11.0" y="200.5" width="4.0" height="1.6" fill="#9a9a9a" fill-opacity="0.55"/><rect x="17.0" y="200.5" width="1.0" height="1.5" fill="#3c9a3c" fill-opacity="0.7"/><rect x="11.0" y="202.5" width="4.0" height="1.6" fill="#9a9a9a" fill-opacity="0.55"/><rect x="17.0" y="202.5" width="1.0" height="1.5" fill="#3c9a3c" fill-opacity="0.7"/><rect x="11.0" y="204.5" width="4.0" height="1.6" fill="#9a9a9a" fill-opacity="0.55"/><rect x="17.0" y="204.5" width="1.0" height="1.5" fill="#3c9a3c" fill-opacity="0.7"/><rect x="11.0" y="206.5" width="4.0" height="1.6" fill="#9a9a9a" fill-opacity="0.55"/><rect x="11.0" y="208.5" width="4.0" height="1.6" fill="#9a9a9a" fill-opacity="0.55"/><rect x="17.0" y="208.5" width="3.0" height="1.6" fill="#2a3a8a" fill-opacity="0.55"/><rect x="21.0" y="208.5" width="4.0" height="1.6" fill="#2a3a8a" fill-opacity="0.55"/><rect x="26.0" y="208.5" width="4.0" height="1.6" fill="#2a3a8a" fill-opacity="0.55"/><rect x="31.0" y="208.5" width="2.0" height="1.6" fill="#2a3a8a" fill-opacity="0.55"/><rect x="34.0" y="208.5" width="1.0" height="1.6" fill="#2a3a8a" fill-opacity="0.55"/><rect x="11.0" y="210.5" width="4.0" height="1.6" fill="#9a9a9a" fill-opacity="0.55"/><rect x="17.0" y="210.5" width="2.0" height="1.6" fill="#2a3a8a" fill-opacity="0.55"/><rect x="20.0" y="210.5" width="4.0" height="1.6" fill="#2a3a8a" fill-opacity="0.55"/><rect x="25.0" y="210.5" width="6.0" height="1.6" fill="#2a3a8a" fill-opacity="0.55"/><rect x="32.0" y="210.5" width="3.0" height="1.6" fill="#2a3a8a" fill-opacity="0.55"/><rect x="11.0" y="212.5" width="4.0" height="1.6" fill="#9a9a9a" fill-opacity="0.55"/><rect x="11.0" y="214.5" width="4.0" height="1.6" fill="#9a9a9a" fill-opacity="0.55"/><rect x="17.0" y="214.5" width="1.0" height="1.5" fill="#3c9a3c" fill-opacity="0.7"/><rect x="11.0" y="216.5" width="2.0" height="1.6" fill="#9a9a9a" fill-opacity="0.55"/><rect x="14.0" y="216.5" width="1.0" height="1.6" fill="#9a9a9a" fill-opacity="0.55"/><rect x="17.0" y="216.5" width="4.0" height="1.6" fill="#2a3a8a" fill-opacity="0.55"/><rect x="22.0" y="216.5" width="6.0" height="1.6" fill="#2a3a8a" fill-opacity="0.55"/><rect x="29.0" y="216.5" width="6.0" height="1.6" fill="#2a3a8a" fill-opacity="0.55"/><rect x="11.0" y="218.5" width="4.0" height="1.6" fill="#9a9a9a" fill-opacity="0.55"/><rect x="17.0" y="218.5" width="6.0" height="1.6" fill="#2a3a8a" fill-opacity="0.55"/><rect x="24.0" y="218.5" width="2.0" height="1.6" fill="#2a3a8a" fill-opacity="0.55"/><rect x="27.0" y="218.5" width="2.0" height="1.6" fill="#2a3a8a" fill-opacity="0.55"/><rect x="30.0" y="218.5" width="3.0" height="1.6" fill="#2a3a8a" fill-opacity="0.55"/><rect x="34.0" y="218.5" width="1.0" height="1.6" fill="#2a3a8a" fill-opacity="0.55"/><rect x="10.0" y="222.5" width="2.0" height="1.6" fill="#3c9a3c" fill-opacity="0.55"/><rect x="13.0" y="222.5" width="4.0" height="1.6" fill="#3c9a3c" fill-opacity="0.55"/><rect x="18.0" y="222.5" width="4.0" height="1.6" fill="#3c9a3c" fill-opacity="0.55"/><rect x="23.0" y="222.5" width="2.0" height="1.6" fill="#3c9a3c" fill-opacity="0.55"/><rect x="26.0" y="222.5" width="3.0" height="1.6" fill="#3c9a3c" fill-opacity="0.55"/><rect x="30.0" y="222.5" width="4.0" height="1.6" fill="#3c9a3c" fill-opacity="0.55"/><rect x="8.0" y="224.0" width="88.0" height="8" fill="#9ccaf7" fill-opacity="0.85"/><rect x="20.0" y="224.5" width="4.0" height="7" fill="#2f86ee" fill-opacity="0.9"/><rect x="57.0" y="224.5" width="4.0" height="7" fill="#2f86ee" fill-opacity="0.9"/><rect x="8.0" y="236.0" width="88.0" height="10" fill="#9ccaf7" fill-opacity="0.85"/><rect x="20.0" y="236.5" width="4.0" height="9" fill="#2f86ee" fill-opacity="0.9"/><rect x="57.0" y="236.5" width="4.0" height="9" fill="#2f86ee" fill-opacity="0.9"/><rect x="8.0" y="298.0" width="88.0" height="12" fill="#9ccaf7" fill-opacity="0.85"/><rect x="20.0" y="298.5" width="4.0" height="11" fill="#2f86ee" fill-opacity="0.9"/><rect x="57.0" y="298.5" width="4.0" height="11" fill="#2f86ee" fill-opacity="0.9"/><rect x="8.0" y="320.0" width="88.0" height="4" fill="#9ccaf7" fill-opacity="0.85"/><rect x="20.0" y="320.5" width="4.0" height="3" fill="#2f86ee" fill-opacity="0.9"/><rect x="57.0" y="320.5" width="4.0" height="3" fill="#2f86ee" fill-opacity="0.9"/><rect x="8.0" y="328.0" width="88.0" height="3" fill="#9ccaf7" fill-opacity="0.85"/><rect x="20.0" y="328.5" width="4.0" height="2" fill="#2f86ee" fill-opacity="0.9"/><rect x="57.0" y="328.5" width="4.0" height="2" fill="#2f86ee" fill-opacity="0.9"/><rect x="11.0" y="224.5" width="4.0" height="1.2" fill="#9a9a9a" fill-opacity="0.7"/><rect x="20.0" y="224.5" width="3.0" height="1.6" fill="#2a3a8a" fill-opacity="0.55"/><rect x="24.0" y="224.5" width="5.0" height="1.6" fill="#2a3a8a" fill-opacity="0.55"/><rect x="30.0" y="224.5" width="7.0" height="1.6" fill="#2a3a8a" fill-opacity="0.55"/><rect x="38.0" y="224.5" width="4.0" height="1.6" fill="#2a3a8a" fill-opacity="0.55"/><rect x="43.0" y="224.5" width="2.0" height="1.6" fill="#2a3a8a" fill-opacity="0.55"/><rect x="56.0" y="224.5" width="2.0" height="1.2" fill="#3c9a3c" fill-opacity="0.7"/><rect x="59.0" y="224.5" width="6.0" height="1.6" fill="#3c9a3c" fill-opacity="0.55"/><rect x="87.0" y="224.5" width="1.0" height="1.2" fill="#3c9a3c" fill-opacity="0.5"/><rect x="11.0" y="226.5" width="4.0" height="1.2" fill="#9a9a9a" fill-opacity="0.7"/><rect x="20.0" y="226.5" width="6.0" height="1.6" fill="#2a3a8a" fill-opacity="0.55"/><rect x="27.0" y="226.5" width="5.0" height="1.6" fill="#2a3a8a" fill-opacity="0.55"/><rect x="33.0" y="226.5" width="7.0" height="1.6" fill="#2a3a8a" fill-opacity="0.55"/><rect x="56.0" y="226.5" width="2.0" height="1.2" fill="#3c9a3c" fill-opacity="0.7"/><rect x="59.0" y="226.5" width="2.0" height="1.6" fill="#3c9a3c" fill-opacity="0.55"/><rect x="62.0" y="226.5" width="4.0" height="1.6" fill="#3c9a3c" fill-opacity="0.55"/><rect x="67.0" y="226.5" width="2.0" height="1.6" fill="#3c9a3c" fill-opacity="0.55"/><rect x="70.0" y="226.5" width="2.0" height="1.6" fill="#3c9a3c" fill-opacity="0.55"/><rect x="87.0" y="226.5" width="1.0" height="1.2" fill="#3c9a3c" fill-opacity="0.5"/><rect x="11.0" y="228.5" width="4.0" height="1.2" fill="#9a9a9a" fill-opacity="0.7"/><rect x="20.0" y="228.5" width="5.0" height="1.6" fill="#2a3a8a" fill-opacity="0.55"/><rect x="26.0" y="228.5" width="2.0" height="1.6" fill="#2a3a8a" fill-opacity="0.55"/><rect x="29.0" y="228.5" width="4.0" height="1.6" fill="#2a3a8a" fill-opacity="0.55"/><rect x="34.0" y="228.5" width="1.0" height="1.6" fill="#2a3a8a" fill-opacity="0.55"/><rect x="56.0" y="228.5" width="2.0" height="1.2" fill="#3c9a3c" fill-opacity="0.7"/><rect x="59.0" y="228.5" width="2.0" height="1.6" fill="#3c9a3c" fill-opacity="0.55"/><rect x="62.0" y="228.5" width="4.0" height="1.6" fill="#3c9a3c" fill-opacity="0.55"/><rect x="67.0" y="228.5" width="2.0" height="1.6" fill="#3c9a3c" fill-opacity="0.55"/><rect x="70.0" y="228.5" width="6.0" height="1.6" fill="#3c9a3c" fill-opacity="0.55"/><rect x="77.0" y="228.5" width="3.0" height="1.6" fill="#3c9a3c" fill-opacity="0.55"/><rect x="81.0" y="228.5" width="1.0" height="1.6" fill="#3c9a3c" fill-opacity="0.55"/><rect x="87.0" y="228.5" width="1.0" height="1.2" fill="#3c9a3c" fill-opacity="0.5"/><rect x="11.0" y="230.5" width="4.0" height="1.2" fill="#9a9a9a" fill-opacity="0.7"/><rect x="20.0" y="230.5" width="2.0" height="1.6" fill="#2a3a8a" fill-opacity="0.55"/><rect x="23.0" y="230.5" width="5.0" height="1.6" fill="#2a3a8a" fill-opacity="0.55"/><rect x="29.0" y="230.5" width="2.0" height="1.6" fill="#2a3a8a" fill-opacity="0.55"/><rect x="32.0" y="230.5" width="4.0" height="1.6" fill="#2a3a8a" fill-opacity="0.55"/><rect x="56.0" y="230.5" width="2.0" height="1.2" fill="#3c9a3c" fill-opacity="0.7"/><rect x="59.0" y="230.5" width="5.0" height="1.6" fill="#3c9a3c" fill-opacity="0.55"/><rect x="65.0" y="230.5" width="4.0" height="1.6" fill="#3c9a3c" fill-opacity="0.55"/><rect x="70.0" y="230.5" width="6.0" height="1.6" fill="#3c9a3c" fill-opacity="0.55"/><rect x="77.0" y="230.5" width="2.0" height="1.6" fill="#3c9a3c" fill-opacity="0.55"/><rect x="87.0" y="230.5" width="1.0" height="1.2" fill="#3c9a3c" fill-opacity="0.5"/><rect x="11.0" y="232.5" width="4.0" height="1.2" fill="#9a9a9a" fill-opacity="0.7"/><rect x="20.0" y="232.5" width="6.0" height="1.6" fill="#2a3a8a" fill-opacity="0.55"/><rect x="27.0" y="232.5" width="6.0" height="1.6" fill="#2a3a8a" fill-opacity="0.55"/><rect x="56.0" y="232.5" width="2.0" height="1.2" fill="#3c9a3c" fill-opacity="0.7"/><rect x="59.0" y="232.5" width="2.0" height="1.6" fill="#3c9a3c" fill-opacity="0.55"/><rect x="62.0" y="232.5" width="3.0" height="1.6" fill="#3c9a3c" fill-opacity="0.55"/><rect x="66.0" y="232.5" width="3.0" height="1.6" fill="#3c9a3c" fill-opacity="0.55"/><rect x="87.0" y="232.5" width="1.0" height="1.2" fill="#3c9a3c" fill-opacity="0.5"/><rect x="11.0" y="234.5" width="4.0" height="1.2" fill="#9a9a9a" fill-opacity="0.7"/><rect x="20.0" y="234.5" width="3.0" height="1.6" fill="#2a3a8a" fill-opacity="0.55"/><rect x="24.0" y="234.5" width="3.0" height="1.6" fill="#2a3a8a" fill-opacity="0.55"/><rect x="28.0" y="234.5" width="4.0" height="1.6" fill="#2a3a8a" fill-opacity="0.55"/><rect x="56.0" y="234.5" width="2.0" height="1.2" fill="#3c9a3c" fill-opacity="0.7"/><rect x="59.0" y="234.5" width="4.0" height="1.6" fill="#3c9a3c" fill-opacity="0.55"/><rect x="64.0" y="234.5" width="6.0" height="1.6" fill="#3c9a3c" fill-opacity="0.55"/><rect x="71.0" y="234.5" width="3.0" height="1.6" fill="#3c9a3c" fill-opacity="0.55"/><rect x="75.0" y="234.5" width="4.0" height="1.6" fill="#3c9a3c" fill-opacity="0.55"/><rect x="80.0" y="234.5" width="2.0" height="1.6" fill="#3c9a3c" fill-opacity="0.55"/><rect x="87.0" y="234.5" width="1.0" height="1.2" fill="#3c9a3c" fill-opacity="0.5"/><rect x="11.0" y="236.5" width="4.0" height="1.2" fill="#9a9a9a" fill-opacity="0.7"/><rect x="20.0" y="236.5" width="7.0" height="1.6" fill="#2a3a8a" fill-opacity="0.55"/><rect x="28.0" y="236.5" width="3.0" height="1.6" fill="#2a3a8a" fill-opacity="0.55"/><rect x="32.0" y="236.5" width="4.0" height="1.6" fill="#2a3a8a" fill-opacity="0.55"/><rect x="37.0" y="236.5" width="4.0" height="1.6" fill="#2a3a8a" fill-opacity="0.55"/><rect x="56.0" y="236.5" width="2.0" height="1.2" fill="#3c9a3c" fill-opacity="0.7"/><rect x="59.0" y="236.5" width="2.0" height="1.6" fill="#3c9a3c" fill-opacity="0.55"/><rect x="62.0" y="236.5" width="4.0" height="1.6" fill="#3c9a3c" fill-opacity="0.55"/><rect x="67.0" y="236.5" width="2.0" height="1.6" fill="#3c9a3c" fill-opacity="0.55"/><rect x="70.0" y="236.5" width="2.0" height="1.6" fill="#3c9a3c" fill-opacity="0.55"/><rect x="73.0" y="236.5" width="2.0" height="1.6" fill="#3c9a3c" fill-opacity="0.55"/><rect x="76.0" y="236.5" width="7.0" height="1.6" fill="#3c9a3c" fill-opacity="0.55"/><rect x="84.0" y="236.5" width="3.0" height="1.6" fill="#3c9a3c" fill-opacity="0.55"/><rect x="87.0" y="236.5" width="1.0" height="1.2" fill="#3c9a3c" fill-opacity="0.5"/><rect x="11.0" y="238.5" width="4.0" height="1.2" fill="#9a9a9a" fill-opacity="0.7"/><rect x="20.0" y="238.5" width="3.0" height="1.6" fill="#2a3a8a" fill-opacity="0.55"/><rect x="24.0" y="238.5" width="6.0" height="1.6" fill="#2a3a8a" fill-opacity="0.55"/><rect x="31.0" y="238.5" width="5.0" height="1.6" fill="#2a3a8a" fill-opacity="0.55"/><rect x="37.0" y="238.5" width="3.0" height="1.6" fill="#2a3a8a" fill-opacity="0.55"/><rect x="56.0" y="238.5" width="2.0" height="1.2" fill="#3c9a3c" fill-opacity="0.7"/><rect x="59.0" y="238.5" width="2.0" height="1.6" fill="#3c9a3c" fill-opacity="0.55"/><rect x="62.0" y="238.5" width="7.0" height="1.6" fill="#3c9a3c" fill-opacity="0.55"/><rect x="70.0" y="238.5" width="6.0" height="1.6" fill="#3c9a3c" fill-opacity="0.55"/><rect x="87.0" y="238.5" width="1.0" height="1.2" fill="#3c9a3c" fill-opacity="0.5"/><rect x="11.0" y="240.5" width="4.0" height="1.2" fill="#9a9a9a" fill-opacity="0.7"/><rect x="20.0" y="240.5" width="7.0" height="1.6" fill="#2a3a8a" fill-opacity="0.55"/><rect x="28.0" y="240.5" width="5.0" height="1.6" fill="#2a3a8a" fill-opacity="0.55"/><rect x="34.0" y="240.5" width="5.0" height="1.6" fill="#2a3a8a" fill-opacity="0.55"/><rect x="56.0" y="240.5" width="2.0" height="1.2" fill="#3c9a3c" fill-opacity="0.7"/><rect x="59.0" y="240.5" width="5.0" height="1.6" fill="#3c9a3c" fill-opacity="0.55"/><rect x="65.0" y="240.5" width="6.0" height="1.6" fill="#3c9a3c" fill-opacity="0.55"/><rect x="72.0" y="240.5" width="4.0" height="1.6" fill="#3c9a3c" fill-opacity="0.55"/><rect x="77.0" y="240.5" width="7.0" height="1.6" fill="#3c9a3c" fill-opacity="0.55"/><rect x="85.0" y="240.5" width="3.0" height="1.6" fill="#3c9a3c" fill-opacity="0.55"/><rect x="87.0" y="240.5" width="1.0" height="1.2" fill="#3c9a3c" fill-opacity="0.5"/><rect x="11.0" y="242.5" width="4.0" height="1.2" fill="#9a9a9a" fill-opacity="0.7"/><rect x="20.0" y="242.5" width="4.0" height="1.6" fill="#2a3a8a" fill-opacity="0.55"/><rect x="25.0" y="242.5" width="3.0" height="1.6" fill="#2a3a8a" fill-opacity="0.55"/><rect x="29.0" y="242.5" width="7.0" height="1.6" fill="#2a3a8a" fill-opacity="0.55"/><rect x="56.0" y="242.5" width="2.0" height="1.2" fill="#3c9a3c" fill-opacity="0.7"/><rect x="59.0" y="242.5" width="7.0" height="1.6" fill="#3c9a3c" fill-opacity="0.55"/><rect x="67.0" y="242.5" width="3.0" height="1.6" fill="#3c9a3c" fill-opacity="0.55"/><rect x="71.0" y="242.5" width="5.0" height="1.6" fill="#3c9a3c" fill-opacity="0.55"/><rect x="77.0" y="242.5" width="4.0" height="1.6" fill="#3c9a3c" fill-opacity="0.55"/><rect x="82.0" y="242.5" width="2.0" height="1.6" fill="#3c9a3c" fill-opacity="0.55"/><rect x="87.0" y="242.5" width="1.0" height="1.2" fill="#3c9a3c" fill-opacity="0.5"/><rect x="11.0" y="244.5" width="4.0" height="1.2" fill="#9a9a9a" fill-opacity="0.7"/><rect x="20.0" y="244.5" width="2.0" height="1.6" fill="#2a3a8a" fill-opacity="0.55"/><rect x="23.0" y="244.5" width="2.0" height="1.6" fill="#2a3a8a" fill-opacity="0.55"/><rect x="26.0" y="244.5" width="7.0" height="1.6" fill="#2a3a8a" fill-opacity="0.55"/><rect x="34.0" y="244.5" width="1.0" height="1.6" fill="#2a3a8a" fill-opacity="0.55"/><rect x="56.0" y="244.5" width="2.0" height="1.2" fill="#3c9a3c" fill-opacity="0.7"/><rect x="59.0" y="244.5" width="4.0" height="1.6" fill="#3c9a3c" fill-opacity="0.55"/><rect x="64.0" y="244.5" width="5.0" height="1.6" fill="#3c9a3c" fill-opacity="0.55"/><rect x="70.0" y="244.5" width="3.0" height="1.6" fill="#3c9a3c" fill-opacity="0.55"/><rect x="74.0" y="244.5" width="2.0" height="1.6" fill="#3c9a3c" fill-opacity="0.55"/><rect x="77.0" y="244.5" width="2.0" height="1.6" fill="#3c9a3c" fill-opacity="0.55"/><rect x="80.0" y="244.5" width="7.0" height="1.6" fill="#3c9a3c" fill-opacity="0.55"/><rect x="88.0" y="244.5" width="2.0" height="1.6" fill="#3c9a3c" fill-opacity="0.55"/><rect x="87.0" y="244.5" width="1.0" height="1.2" fill="#3c9a3c" fill-opacity="0.5"/><rect x="11.0" y="246.5" width="4.0" height="1.2" fill="#9a9a9a" fill-opacity="0.7"/><rect x="20.0" y="246.5" width="7.0" height="1.6" fill="#2a3a8a" fill-opacity="0.55"/><rect x="28.0" y="246.5" width="4.0" height="1.6" fill="#2a3a8a" fill-opacity="0.55"/><rect x="33.0" y="246.5" width="6.0" height="1.6" fill="#2a3a8a" fill-opacity="0.55"/><rect x="40.0" y="246.5" width="1.0" height="1.6" fill="#2a3a8a" fill-opacity="0.55"/><rect x="56.0" y="246.5" width="2.0" height="1.2" fill="#3c9a3c" fill-opacity="0.7"/><rect x="59.0" y="246.5" width="4.0" height="1.6" fill="#3c9a3c" fill-opacity="0.55"/><rect x="64.0" y="246.5" width="2.0" height="1.6" fill="#3c9a3c" fill-opacity="0.55"/><rect x="67.0" y="246.5" width="5.0" height="1.6" fill="#3c9a3c" fill-opacity="0.55"/><rect x="73.0" y="246.5" width="3.0" height="1.6" fill="#3c9a3c" fill-opacity="0.55"/><rect x="77.0" y="246.5" width="3.0" height="1.6" fill="#3c9a3c" fill-opacity="0.55"/><rect x="81.0" y="246.5" width="3.0" height="1.6" fill="#3c9a3c" fill-opacity="0.55"/><rect x="87.0" y="246.5" width="1.0" height="1.2" fill="#3c9a3c" fill-opacity="0.5"/><rect x="11.0" y="248.5" width="4.0" height="1.2" fill="#9a9a9a" fill-opacity="0.7"/><rect x="20.0" y="248.5" width="2.0" height="1.6" fill="#2a3a8a" fill-opacity="0.55"/><rect x="23.0" y="248.5" width="4.0" height="1.6" fill="#2a3a8a" fill-opacity="0.55"/><rect x="28.0" y="248.5" width="4.0" height="1.6" fill="#2a3a8a" fill-opacity="0.55"/><rect x="33.0" y="248.5" width="4.0" height="1.6" fill="#2a3a8a" fill-opacity="0.55"/><rect x="38.0" y="248.5" width="2.0" height="1.6" fill="#2a3a8a" fill-opacity="0.55"/><rect x="56.0" y="248.5" width="2.0" height="1.2" fill="#3c9a3c" fill-opacity="0.7"/><rect x="59.0" y="248.5" width="3.0" height="1.6" fill="#3c9a3c" fill-opacity="0.55"/><rect x="63.0" y="248.5" width="2.0" height="1.6" fill="#3c9a3c" fill-opacity="0.55"/><rect x="66.0" y="248.5" width="4.0" height="1.6" fill="#3c9a3c" fill-opacity="0.55"/><rect x="71.0" y="248.5" width="1.0" height="1.6" fill="#3c9a3c" fill-opacity="0.55"/><rect x="87.0" y="248.5" width="1.0" height="1.2" fill="#3c9a3c" fill-opacity="0.5"/><rect x="11.0" y="250.5" width="4.0" height="1.2" fill="#9a9a9a" fill-opacity="0.7"/><rect x="20.0" y="250.5" width="3.0" height="1.6" fill="#2a3a8a" fill-opacity="0.55"/><rect x="24.0" y="250.5" width="2.0" height="1.6" fill="#2a3a8a" fill-opacity="0.55"/><rect x="27.0" y="250.5" width="4.0" height="1.6" fill="#2a3a8a" fill-opacity="0.55"/><rect x="32.0" y="250.5" width="5.0" height="1.6" fill="#2a3a8a" fill-opacity="0.55"/><rect x="56.0" y="250.5" width="2.0" height="1.2" fill="#3c9a3c" fill-opacity="0.7"/><rect x="59.0" y="250.5" width="5.0" height="1.6" fill="#3c9a3c" fill-opacity="0.55"/><rect x="87.0" y="250.5" width="1.0" height="1.2" fill="#3c9a3c" fill-opacity="0.5"/><rect x="11.0" y="252.5" width="4.0" height="1.2" fill="#9a9a9a" fill-opacity="0.7"/><rect x="20.0" y="252.5" width="6.0" height="1.6" fill="#2a3a8a" fill-opacity="0.55"/><rect x="27.0" y="252.5" width="7.0" height="1.6" fill="#2a3a8a" fill-opacity="0.55"/><rect x="35.0" y="252.5" width="2.0" height="1.6" fill="#2a3a8a" fill-opacity="0.55"/><rect x="56.0" y="252.5" width="2.0" height="1.2" fill="#3c9a3c" fill-opacity="0.7"/><rect x="59.0" y="252.5" width="6.0" height="1.6" fill="#3c9a3c" fill-opacity="0.55"/><rect x="66.0" y="252.5" width="2.0" height="1.6" fill="#3c9a3c" fill-opacity="0.55"/><rect x="87.0" y="252.5" width="1.0" height="1.2" fill="#3c9a3c" fill-opacity="0.5"/><rect x="11.0" y="254.5" width="4.0" height="1.2" fill="#9a9a9a" fill-opacity="0.7"/><rect x="20.0" y="254.5" width="4.0" height="1.6" fill="#2a3a8a" fill-opacity="0.55"/><rect x="25.0" y="254.5" width="2.0" height="1.6" fill="#2a3a8a" fill-opacity="0.55"/><rect x="28.0" y="254.5" width="3.0" height="1.6" fill="#2a3a8a" fill-opacity="0.55"/><rect x="32.0" y="254.5" width="2.0" height="1.6" fill="#2a3a8a" fill-opacity="0.55"/><rect x="56.0" y="254.5" width="2.0" height="1.2" fill="#3c9a3c" fill-opacity="0.7"/><rect x="59.0" y="254.5" width="2.0" height="1.6" fill="#3c9a3c" fill-opacity="0.55"/><rect x="62.0" y="254.5" width="5.0" height="1.6" fill="#3c9a3c" fill-opacity="0.55"/><rect x="68.0" y="254.5" width="2.0" height="1.6" fill="#3c9a3c" fill-opacity="0.55"/><rect x="71.0" y="254.5" width="4.0" height="1.6" fill="#3c9a3c" fill-opacity="0.55"/><rect x="76.0" y="254.5" width="4.0" height="1.6" fill="#3c9a3c" fill-opacity="0.55"/><rect x="87.0" y="254.5" width="1.0" height="1.2" fill="#3c9a3c" fill-opacity="0.5"/><rect x="11.0" y="256.5" width="4.0" height="1.2" fill="#9a9a9a" fill-opacity="0.7"/><rect x="20.0" y="256.5" width="3.0" height="1.6" fill="#2a3a8a" fill-opacity="0.55"/><rect x="24.0" y="256.5" width="2.0" height="1.6" fill="#2a3a8a" fill-opacity="0.55"/><rect x="27.0" y="256.5" width="6.0" height="1.6" fill="#2a3a8a" fill-opacity="0.55"/><rect x="34.0" y="256.5" width="6.0" height="1.6" fill="#2a3a8a" fill-opacity="0.55"/><rect x="41.0" y="256.5" width="2.0" height="1.6" fill="#2a3a8a" fill-opacity="0.55"/><rect x="56.0" y="256.5" width="2.0" height="1.2" fill="#3c9a3c" fill-opacity="0.7"/><rect x="59.0" y="256.5" width="7.0" height="1.6" fill="#3c9a3c" fill-opacity="0.55"/><rect x="67.0" y="256.5" width="6.0" height="1.6" fill="#3c9a3c" fill-opacity="0.55"/><rect x="74.0" y="256.5" width="5.0" height="1.6" fill="#3c9a3c" fill-opacity="0.55"/><rect x="80.0" y="256.5" width="3.0" height="1.6" fill="#3c9a3c" fill-opacity="0.55"/><rect x="87.0" y="256.5" width="1.0" height="1.2" fill="#3c9a3c" fill-opacity="0.5"/><rect x="11.0" y="258.5" width="4.0" height="1.2" fill="#9a9a9a" fill-opacity="0.7"/><rect x="20.0" y="258.5" width="5.0" height="1.6" fill="#2a3a8a" fill-opacity="0.55"/><rect x="26.0" y="258.5" width="3.0" height="1.6" fill="#2a3a8a" fill-opacity="0.55"/><rect x="30.0" y="258.5" width="4.0" height="1.6" fill="#2a3a8a" fill-opacity="0.55"/><rect x="35.0" y="258.5" width="7.0" height="1.6" fill="#2a3a8a" fill-opacity="0.55"/><rect x="43.0" y="258.5" width="1.0" height="1.6" fill="#2a3a8a" fill-opacity="0.55"/><rect x="56.0" y="258.5" width="2.0" height="1.2" fill="#3c9a3c" fill-opacity="0.7"/><rect x="59.0" y="258.5" width="3.0" height="1.6" fill="#3c9a3c" fill-opacity="0.55"/><rect x="63.0" y="258.5" width="2.0" height="1.6" fill="#3c9a3c" fill-opacity="0.55"/><rect x="66.0" y="258.5" width="7.0" height="1.6" fill="#3c9a3c" fill-opacity="0.55"/><rect x="74.0" y="258.5" width="6.0" height="1.6" fill="#3c9a3c" fill-opacity="0.55"/><rect x="81.0" y="258.5" width="1.0" height="1.6" fill="#3c9a3c" fill-opacity="0.55"/><rect x="87.0" y="258.5" width="1.0" height="1.2" fill="#3c9a3c" fill-opacity="0.5"/><rect x="11.0" y="260.5" width="4.0" height="1.2" fill="#9a9a9a" fill-opacity="0.7"/><rect x="20.0" y="260.5" width="7.0" height="1.6" fill="#2a3a8a" fill-opacity="0.55"/><rect x="28.0" y="260.5" width="7.0" height="1.6" fill="#2a3a8a" fill-opacity="0.55"/><rect x="36.0" y="260.5" width="3.0" height="1.6" fill="#2a3a8a" fill-opacity="0.55"/><rect x="56.0" y="260.5" width="2.0" height="1.2" fill="#3c9a3c" fill-opacity="0.7"/><rect x="59.0" y="260.5" width="6.0" height="1.6" fill="#3c9a3c" fill-opacity="0.55"/><rect x="87.0" y="260.5" width="1.0" height="1.2" fill="#3c9a3c" fill-opacity="0.5"/><rect x="11.0" y="262.5" width="4.0" height="1.2" fill="#9a9a9a" fill-opacity="0.7"/><rect x="20.0" y="262.5" width="6.0" height="1.6" fill="#2a3a8a" fill-opacity="0.55"/><rect x="27.0" y="262.5" width="6.0" height="1.6" fill="#2a3a8a" fill-opacity="0.55"/><rect x="34.0" y="262.5" width="2.0" height="1.6" fill="#2a3a8a" fill-opacity="0.55"/><rect x="37.0" y="262.5" width="7.0" height="1.6" fill="#2a3a8a" fill-opacity="0.55"/><rect x="56.0" y="262.5" width="2.0" height="1.2" fill="#3c9a3c" fill-opacity="0.7"/><rect x="59.0" y="262.5" width="7.0" height="1.6" fill="#3c9a3c" fill-opacity="0.55"/><rect x="67.0" y="262.5" width="7.0" height="1.6" fill="#3c9a3c" fill-opacity="0.55"/><rect x="75.0" y="262.5" width="5.0" height="1.6" fill="#3c9a3c" fill-opacity="0.55"/><rect x="87.0" y="262.5" width="1.0" height="1.2" fill="#3c9a3c" fill-opacity="0.5"/><rect x="11.0" y="264.5" width="4.0" height="1.2" fill="#9a9a9a" fill-opacity="0.7"/><rect x="20.0" y="264.5" width="3.0" height="1.6" fill="#2a3a8a" fill-opacity="0.55"/><rect x="24.0" y="264.5" width="2.0" height="1.6" fill="#2a3a8a" fill-opacity="0.55"/><rect x="27.0" y="264.5" width="2.0" height="1.6" fill="#2a3a8a" fill-opacity="0.55"/><rect x="30.0" y="264.5" width="2.0" height="1.6" fill="#2a3a8a" fill-opacity="0.55"/><rect x="33.0" y="264.5" width="3.0" height="1.6" fill="#2a3a8a" fill-opacity="0.55"/><rect x="37.0" y="264.5" width="6.0" height="1.6" fill="#2a3a8a" fill-opacity="0.55"/><rect x="56.0" y="264.5" width="2.0" height="1.2" fill="#3c9a3c" fill-opacity="0.7"/><rect x="59.0" y="264.5" width="2.0" height="1.6" fill="#3c9a3c" fill-opacity="0.55"/><rect x="62.0" y="264.5" width="5.0" height="1.6" fill="#3c9a3c" fill-opacity="0.55"/><rect x="68.0" y="264.5" width="5.0" height="1.6" fill="#3c9a3c" fill-opacity="0.55"/><rect x="87.0" y="264.5" width="1.0" height="1.2" fill="#3c9a3c" fill-opacity="0.5"/><rect x="11.0" y="266.5" width="4.0" height="1.2" fill="#9a9a9a" fill-opacity="0.7"/><rect x="20.0" y="266.5" width="2.0" height="1.6" fill="#2a3a8a" fill-opacity="0.55"/><rect x="23.0" y="266.5" width="7.0" height="1.6" fill="#2a3a8a" fill-opacity="0.55"/><rect x="31.0" y="266.5" width="2.0" height="1.6" fill="#2a3a8a" fill-opacity="0.55"/><rect x="34.0" y="266.5" width="7.0" height="1.6" fill="#2a3a8a" fill-opacity="0.55"/><rect x="56.0" y="266.5" width="2.0" height="1.2" fill="#3c9a3c" fill-opacity="0.7"/><rect x="59.0" y="266.5" width="7.0" height="1.6" fill="#3c9a3c" fill-opacity="0.55"/><rect x="67.0" y="266.5" width="3.0" height="1.6" fill="#3c9a3c" fill-opacity="0.55"/><rect x="71.0" y="266.5" width="5.0" height="1.6" fill="#3c9a3c" fill-opacity="0.55"/><rect x="77.0" y="266.5" width="2.0" height="1.6" fill="#3c9a3c" fill-opacity="0.55"/><rect x="87.0" y="266.5" width="1.0" height="1.2" fill="#3c9a3c" fill-opacity="0.5"/><rect x="11.0" y="268.5" width="4.0" height="1.2" fill="#9a9a9a" fill-opacity="0.7"/><rect x="20.0" y="268.5" width="5.0" height="1.6" fill="#2a3a8a" fill-opacity="0.55"/><rect x="26.0" y="268.5" width="2.0" height="1.6" fill="#2a3a8a" fill-opacity="0.55"/><rect x="29.0" y="268.5" width="4.0" height="1.6" fill="#2a3a8a" fill-opacity="0.55"/><rect x="56.0" y="268.5" width="2.0" height="1.2" fill="#3c9a3c" fill-opacity="0.7"/><rect x="59.0" y="268.5" width="6.0" height="1.6" fill="#3c9a3c" fill-opacity="0.55"/><rect x="66.0" y="268.5" width="2.0" height="1.6" fill="#3c9a3c" fill-opacity="0.55"/><rect x="69.0" y="268.5" width="7.0" height="1.6" fill="#3c9a3c" fill-opacity="0.55"/><rect x="77.0" y="268.5" width="1.0" height="1.6" fill="#3c9a3c" fill-opacity="0.55"/><rect x="87.0" y="268.5" width="1.0" height="1.2" fill="#3c9a3c" fill-opacity="0.5"/><rect x="11.0" y="270.5" width="4.0" height="1.2" fill="#9a9a9a" fill-opacity="0.7"/><rect x="20.0" y="270.5" width="7.0" height="1.6" fill="#2a3a8a" fill-opacity="0.55"/><rect x="28.0" y="270.5" width="6.0" height="1.6" fill="#2a3a8a" fill-opacity="0.55"/><rect x="56.0" y="270.5" width="2.0" height="1.2" fill="#3c9a3c" fill-opacity="0.7"/><rect x="59.0" y="270.5" width="4.0" height="1.6" fill="#3c9a3c" fill-opacity="0.55"/><rect x="64.0" y="270.5" width="2.0" height="1.6" fill="#3c9a3c" fill-opacity="0.55"/><rect x="67.0" y="270.5" width="4.0" height="1.6" fill="#3c9a3c" fill-opacity="0.55"/><rect x="72.0" y="270.5" width="3.0" height="1.6" fill="#3c9a3c" fill-opacity="0.55"/><rect x="76.0" y="270.5" width="1.0" height="1.6" fill="#3c9a3c" fill-opacity="0.55"/><rect x="87.0" y="270.5" width="1.0" height="1.2" fill="#3c9a3c" fill-opacity="0.5"/><rect x="11.0" y="272.5" width="4.0" height="1.2" fill="#9a9a9a" fill-opacity="0.7"/><rect x="20.0" y="272.5" width="3.0" height="1.6" fill="#2a3a8a" fill-opacity="0.55"/><rect x="24.0" y="272.5" width="3.0" height="1.6" fill="#2a3a8a" fill-opacity="0.55"/><rect x="28.0" y="272.5" width="7.0" height="1.6" fill="#2a3a8a" fill-opacity="0.55"/><rect x="36.0" y="272.5" width="7.0" height="1.6" fill="#2a3a8a" fill-opacity="0.55"/><rect x="44.0" y="272.5" width="1.0" height="1.6" fill="#2a3a8a" fill-opacity="0.55"/><rect x="56.0" y="272.5" width="2.0" height="1.2" fill="#3c9a3c" fill-opacity="0.7"/><rect x="59.0" y="272.5" width="5.0" height="1.6" fill="#3c9a3c" fill-opacity="0.55"/><rect x="65.0" y="272.5" width="2.0" height="1.6" fill="#3c9a3c" fill-opacity="0.55"/><rect x="68.0" y="272.5" width="5.0" height="1.6" fill="#3c9a3c" fill-opacity="0.55"/><rect x="74.0" y="272.5" width="3.0" height="1.6" fill="#3c9a3c" fill-opacity="0.55"/><rect x="87.0" y="272.5" width="1.0" height="1.2" fill="#3c9a3c" fill-opacity="0.5"/><rect x="11.0" y="274.5" width="4.0" height="1.2" fill="#9a9a9a" fill-opacity="0.7"/><rect x="20.0" y="274.5" width="2.0" height="1.6" fill="#2a3a8a" fill-opacity="0.55"/><rect x="23.0" y="274.5" width="6.0" height="1.6" fill="#2a3a8a" fill-opacity="0.55"/><rect x="30.0" y="274.5" width="7.0" height="1.6" fill="#2a3a8a" fill-opacity="0.55"/><rect x="56.0" y="274.5" width="2.0" height="1.2" fill="#3c9a3c" fill-opacity="0.7"/><rect x="59.0" y="274.5" width="3.0" height="1.6" fill="#3c9a3c" fill-opacity="0.55"/><rect x="63.0" y="274.5" width="2.0" height="1.6" fill="#3c9a3c" fill-opacity="0.55"/><rect x="66.0" y="274.5" width="6.0" height="1.6" fill="#3c9a3c" fill-opacity="0.55"/><rect x="73.0" y="274.5" width="3.0" height="1.6" fill="#3c9a3c" fill-opacity="0.55"/><rect x="77.0" y="274.5" width="4.0" height="1.6" fill="#3c9a3c" fill-opacity="0.55"/><rect x="87.0" y="274.5" width="1.0" height="1.2" fill="#3c9a3c" fill-opacity="0.5"/><rect x="11.0" y="276.5" width="4.0" height="1.2" fill="#9a9a9a" fill-opacity="0.7"/><rect x="20.0" y="276.5" width="7.0" height="1.6" fill="#2a3a8a" fill-opacity="0.55"/><rect x="28.0" y="276.5" width="7.0" height="1.6" fill="#2a3a8a" fill-opacity="0.55"/><rect x="36.0" y="276.5" width="1.0" height="1.6" fill="#2a3a8a" fill-opacity="0.55"/><rect x="56.0" y="276.5" width="2.0" height="1.2" fill="#3c9a3c" fill-opacity="0.7"/><rect x="59.0" y="276.5" width="6.0" height="1.6" fill="#3c9a3c" fill-opacity="0.55"/><rect x="66.0" y="276.5" width="5.0" height="1.6" fill="#3c9a3c" fill-opacity="0.55"/><rect x="87.0" y="276.5" width="1.0" height="1.2" fill="#3c9a3c" fill-opacity="0.5"/><rect x="11.0" y="278.5" width="4.0" height="1.2" fill="#9a9a9a" fill-opacity="0.7"/><rect x="20.0" y="278.5" width="2.0" height="1.6" fill="#2a3a8a" fill-opacity="0.55"/><rect x="23.0" y="278.5" width="5.0" height="1.6" fill="#2a3a8a" fill-opacity="0.55"/><rect x="29.0" y="278.5" width="2.0" height="1.6" fill="#2a3a8a" fill-opacity="0.55"/><rect x="32.0" y="278.5" width="3.0" height="1.6" fill="#2a3a8a" fill-opacity="0.55"/><rect x="56.0" y="278.5" width="2.0" height="1.2" fill="#3c9a3c" fill-opacity="0.7"/><rect x="59.0" y="278.5" width="7.0" height="1.6" fill="#3c9a3c" fill-opacity="0.55"/><rect x="67.0" y="278.5" width="2.0" height="1.6" fill="#3c9a3c" fill-opacity="0.55"/><rect x="87.0" y="278.5" width="1.0" height="1.2" fill="#3c9a3c" fill-opacity="0.5"/><rect x="11.0" y="280.5" width="4.0" height="1.2" fill="#9a9a9a" fill-opacity="0.7"/><rect x="20.0" y="280.5" width="3.0" height="1.6" fill="#2a3a8a" fill-opacity="0.55"/><rect x="24.0" y="280.5" width="7.0" height="1.6" fill="#2a3a8a" fill-opacity="0.55"/><rect x="32.0" y="280.5" width="5.0" height="1.6" fill="#2a3a8a" fill-opacity="0.55"/><rect x="38.0" y="280.5" width="4.0" height="1.6" fill="#2a3a8a" fill-opacity="0.55"/><rect x="43.0" y="280.5" width="1.0" height="1.6" fill="#2a3a8a" fill-opacity="0.55"/><rect x="56.0" y="280.5" width="2.0" height="1.2" fill="#3c9a3c" fill-opacity="0.7"/><rect x="59.0" y="280.5" width="4.0" height="1.6" fill="#3c9a3c" fill-opacity="0.55"/><rect x="64.0" y="280.5" width="5.0" height="1.6" fill="#3c9a3c" fill-opacity="0.55"/><rect x="70.0" y="280.5" width="5.0" height="1.6" fill="#3c9a3c" fill-opacity="0.55"/><rect x="76.0" y="280.5" width="2.0" height="1.6" fill="#3c9a3c" fill-opacity="0.55"/><rect x="87.0" y="280.5" width="1.0" height="1.2" fill="#3c9a3c" fill-opacity="0.5"/><rect x="11.0" y="282.5" width="4.0" height="1.2" fill="#9a9a9a" fill-opacity="0.7"/><rect x="20.0" y="282.5" width="2.0" height="1.6" fill="#2a3a8a" fill-opacity="0.55"/><rect x="23.0" y="282.5" width="6.0" height="1.6" fill="#2a3a8a" fill-opacity="0.55"/><rect x="30.0" y="282.5" width="3.0" height="1.6" fill="#2a3a8a" fill-opacity="0.55"/><rect x="34.0" y="282.5" width="4.0" height="1.6" fill="#2a3a8a" fill-opacity="0.55"/><rect x="39.0" y="282.5" width="2.0" height="1.6" fill="#2a3a8a" fill-opacity="0.55"/><rect x="42.0" y="282.5" width="3.0" height="1.6" fill="#2a3a8a" fill-opacity="0.55"/><rect x="56.0" y="282.5" width="2.0" height="1.2" fill="#3c9a3c" fill-opacity="0.7"/><rect x="59.0" y="282.5" width="3.0" height="1.6" fill="#3c9a3c" fill-opacity="0.55"/><rect x="87.0" y="282.5" width="1.0" height="1.2" fill="#3c9a3c" fill-opacity="0.5"/><rect x="11.0" y="284.5" width="4.0" height="1.2" fill="#9a9a9a" fill-opacity="0.7"/><rect x="20.0" y="284.5" width="2.0" height="1.6" fill="#2a3a8a" fill-opacity="0.55"/><rect x="23.0" y="284.5" width="6.0" height="1.6" fill="#2a3a8a" fill-opacity="0.55"/><rect x="30.0" y="284.5" width="5.0" height="1.6" fill="#2a3a8a" fill-opacity="0.55"/><rect x="36.0" y="284.5" width="4.0" height="1.6" fill="#2a3a8a" fill-opacity="0.55"/><rect x="56.0" y="284.5" width="2.0" height="1.2" fill="#3c9a3c" fill-opacity="0.7"/><rect x="59.0" y="284.5" width="3.0" height="1.6" fill="#3c9a3c" fill-opacity="0.55"/><rect x="63.0" y="284.5" width="3.0" height="1.6" fill="#3c9a3c" fill-opacity="0.55"/><rect x="67.0" y="284.5" width="2.0" height="1.6" fill="#3c9a3c" fill-opacity="0.55"/><rect x="70.0" y="284.5" width="4.0" height="1.6" fill="#3c9a3c" fill-opacity="0.55"/><rect x="87.0" y="284.5" width="1.0" height="1.2" fill="#3c9a3c" fill-opacity="0.5"/><rect x="11.0" y="286.5" width="4.0" height="1.2" fill="#9a9a9a" fill-opacity="0.7"/><rect x="20.0" y="286.5" width="3.0" height="1.6" fill="#2a3a8a" fill-opacity="0.55"/><rect x="24.0" y="286.5" width="7.0" height="1.6" fill="#2a3a8a" fill-opacity="0.55"/><rect x="32.0" y="286.5" width="2.0" height="1.6" fill="#2a3a8a" fill-opacity="0.55"/><rect x="56.0" y="286.5" width="2.0" height="1.2" fill="#3c9a3c" fill-opacity="0.7"/><rect x="59.0" y="286.5" width="4.0" height="1.6" fill="#3c9a3c" fill-opacity="0.55"/><rect x="64.0" y="286.5" width="3.0" height="1.6" fill="#3c9a3c" fill-opacity="0.55"/><rect x="68.0" y="286.5" width="2.0" height="1.6" fill="#3c9a3c" fill-opacity="0.55"/><rect x="87.0" y="286.5" width="1.0" height="1.2" fill="#3c9a3c" fill-opacity="0.5"/><rect x="11.0" y="288.5" width="4.0" height="1.2" fill="#9a9a9a" fill-opacity="0.7"/><rect x="20.0" y="288.5" width="6.0" height="1.6" fill="#2a3a8a" fill-opacity="0.55"/><rect x="27.0" y="288.5" width="4.0" height="1.6" fill="#2a3a8a" fill-opacity="0.55"/><rect x="32.0" y="288.5" width="2.0" height="1.6" fill="#2a3a8a" fill-opacity="0.55"/><rect x="35.0" y="288.5" width="7.0" height="1.6" fill="#2a3a8a" fill-opacity="0.55"/><rect x="56.0" y="288.5" width="2.0" height="1.2" fill="#3c9a3c" fill-opacity="0.7"/><rect x="59.0" y="288.5" width="3.0" height="1.6" fill="#3c9a3c" fill-opacity="0.55"/><rect x="63.0" y="288.5" width="5.0" height="1.6" fill="#3c9a3c" fill-opacity="0.55"/><rect x="69.0" y="288.5" width="4.0" height="1.6" fill="#3c9a3c" fill-opacity="0.55"/><rect x="87.0" y="288.5" width="1.0" height="1.2" fill="#3c9a3c" fill-opacity="0.5"/><rect x="11.0" y="290.5" width="4.0" height="1.2" fill="#9a9a9a" fill-opacity="0.7"/><rect x="20.0" y="290.5" width="2.0" height="1.6" fill="#2a3a8a" fill-opacity="0.55"/><rect x="23.0" y="290.5" width="3.0" height="1.6" fill="#2a3a8a" fill-opacity="0.55"/><rect x="27.0" y="290.5" width="2.0" height="1.6" fill="#2a3a8a" fill-opacity="0.55"/><rect x="30.0" y="290.5" width="5.0" height="1.6" fill="#2a3a8a" fill-opacity="0.55"/><rect x="36.0" y="290.5" width="3.0" height="1.6" fill="#2a3a8a" fill-opacity="0.55"/><rect x="56.0" y="290.5" width="2.0" height="1.2" fill="#3c9a3c" fill-opacity="0.7"/><rect x="59.0" y="290.5" width="5.0" height="1.6" fill="#3c9a3c" fill-opacity="0.55"/><rect x="65.0" y="290.5" width="4.0" height="1.6" fill="#3c9a3c" fill-opacity="0.55"/><rect x="70.0" y="290.5" width="6.0" height="1.6" fill="#3c9a3c" fill-opacity="0.55"/><rect x="87.0" y="290.5" width="1.0" height="1.2" fill="#3c9a3c" fill-opacity="0.5"/><rect x="11.0" y="292.5" width="4.0" height="1.2" fill="#9a9a9a" fill-opacity="0.7"/><rect x="20.0" y="292.5" width="5.0" height="1.6" fill="#2a3a8a" fill-opacity="0.55"/><rect x="26.0" y="292.5" width="4.0" height="1.6" fill="#2a3a8a" fill-opacity="0.55"/><rect x="31.0" y="292.5" width="4.0" height="1.6" fill="#2a3a8a" fill-opacity="0.55"/><rect x="56.0" y="292.5" width="2.0" height="1.2" fill="#3c9a3c" fill-opacity="0.7"/><rect x="59.0" y="292.5" width="2.0" height="1.6" fill="#3c9a3c" fill-opacity="0.55"/><rect x="62.0" y="292.5" width="4.0" height="1.6" fill="#3c9a3c" fill-opacity="0.55"/><rect x="67.0" y="292.5" width="2.0" height="1.6" fill="#3c9a3c" fill-opacity="0.55"/><rect x="70.0" y="292.5" width="2.0" height="1.6" fill="#3c9a3c" fill-opacity="0.55"/><rect x="87.0" y="292.5" width="1.0" height="1.2" fill="#3c9a3c" fill-opacity="0.5"/><rect x="11.0" y="294.5" width="4.0" height="1.2" fill="#9a9a9a" fill-opacity="0.7"/><rect x="20.0" y="294.5" width="4.0" height="1.6" fill="#2a3a8a" fill-opacity="0.55"/><rect x="25.0" y="294.5" width="5.0" height="1.6" fill="#2a3a8a" fill-opacity="0.55"/><rect x="31.0" y="294.5" width="2.0" height="1.6" fill="#2a3a8a" fill-opacity="0.55"/><rect x="34.0" y="294.5" width="3.0" height="1.6" fill="#2a3a8a" fill-opacity="0.55"/><rect x="38.0" y="294.5" width="7.0" height="1.6" fill="#2a3a8a" fill-opacity="0.55"/><rect x="56.0" y="294.5" width="2.0" height="1.2" fill="#3c9a3c" fill-opacity="0.7"/><rect x="59.0" y="294.5" width="3.0" height="1.6" fill="#3c9a3c" fill-opacity="0.55"/><rect x="87.0" y="294.5" width="1.0" height="1.2" fill="#3c9a3c" fill-opacity="0.5"/><rect x="11.0" y="296.5" width="4.0" height="1.2" fill="#9a9a9a" fill-opacity="0.7"/><rect x="20.0" y="296.5" width="4.0" height="1.6" fill="#2a3a8a" fill-opacity="0.55"/><rect x="25.0" y="296.5" width="4.0" height="1.6" fill="#2a3a8a" fill-opacity="0.55"/><rect x="30.0" y="296.5" width="2.0" height="1.6" fill="#2a3a8a" fill-opacity="0.55"/><rect x="33.0" y="296.5" width="4.0" height="1.6" fill="#2a3a8a" fill-opacity="0.55"/><rect x="56.0" y="296.5" width="2.0" height="1.2" fill="#3c9a3c" fill-opacity="0.7"/><rect x="59.0" y="296.5" width="6.0" height="1.6" fill="#3c9a3c" fill-opacity="0.55"/><rect x="66.0" y="296.5" width="2.0" height="1.6" fill="#3c9a3c" fill-opacity="0.55"/><rect x="69.0" y="296.5" width="4.0" height="1.6" fill="#3c9a3c" fill-opacity="0.55"/><rect x="87.0" y="296.5" width="1.0" height="1.2" fill="#3c9a3c" fill-opacity="0.5"/><rect x="11.0" y="298.5" width="4.0" height="1.2" fill="#9a9a9a" fill-opacity="0.7"/><rect x="20.0" y="298.5" width="4.0" height="1.6" fill="#2a3a8a" fill-opacity="0.55"/><rect x="25.0" y="298.5" width="2.0" height="1.6" fill="#2a3a8a" fill-opacity="0.55"/><rect x="28.0" y="298.5" width="4.0" height="1.6" fill="#2a3a8a" fill-opacity="0.55"/><rect x="33.0" y="298.5" width="2.0" height="1.6" fill="#2a3a8a" fill-opacity="0.55"/><rect x="36.0" y="298.5" width="2.0" height="1.6" fill="#2a3a8a" fill-opacity="0.55"/><rect x="56.0" y="298.5" width="2.0" height="1.2" fill="#3c9a3c" fill-opacity="0.7"/><rect x="59.0" y="298.5" width="7.0" height="1.6" fill="#3c9a3c" fill-opacity="0.55"/><rect x="67.0" y="298.5" width="4.0" height="1.6" fill="#3c9a3c" fill-opacity="0.55"/><rect x="72.0" y="298.5" width="7.0" height="1.6" fill="#3c9a3c" fill-opacity="0.55"/><rect x="80.0" y="298.5" width="3.0" height="1.6" fill="#3c9a3c" fill-opacity="0.55"/><rect x="84.0" y="298.5" width="3.0" height="1.6" fill="#3c9a3c" fill-opacity="0.55"/><rect x="87.0" y="298.5" width="1.0" height="1.2" fill="#3c9a3c" fill-opacity="0.5"/><rect x="11.0" y="300.5" width="4.0" height="1.2" fill="#9a9a9a" fill-opacity="0.7"/><rect x="20.0" y="300.5" width="5.0" height="1.6" fill="#2a3a8a" fill-opacity="0.55"/><rect x="26.0" y="300.5" width="6.0" height="1.6" fill="#2a3a8a" fill-opacity="0.55"/><rect x="33.0" y="300.5" width="4.0" height="1.6" fill="#2a3a8a" fill-opacity="0.55"/><rect x="56.0" y="300.5" width="2.0" height="1.2" fill="#3c9a3c" fill-opacity="0.7"/><rect x="59.0" y="300.5" width="4.0" height="1.6" fill="#3c9a3c" fill-opacity="0.55"/><rect x="64.0" y="300.5" width="4.0" height="1.6" fill="#3c9a3c" fill-opacity="0.55"/><rect x="87.0" y="300.5" width="1.0" height="1.2" fill="#3c9a3c" fill-opacity="0.5"/><rect x="11.0" y="302.5" width="4.0" height="1.2" fill="#9a9a9a" fill-opacity="0.7"/><rect x="20.0" y="302.5" width="7.0" height="1.6" fill="#2a3a8a" fill-opacity="0.55"/><rect x="28.0" y="302.5" width="5.0" height="1.6" fill="#2a3a8a" fill-opacity="0.55"/><rect x="56.0" y="302.5" width="2.0" height="1.2" fill="#3c9a3c" fill-opacity="0.7"/><rect x="59.0" y="302.5" width="6.0" height="1.6" fill="#3c9a3c" fill-opacity="0.55"/><rect x="66.0" y="302.5" width="6.0" height="1.6" fill="#3c9a3c" fill-opacity="0.55"/><rect x="73.0" y="302.5" width="3.0" height="1.6" fill="#3c9a3c" fill-opacity="0.55"/><rect x="77.0" y="302.5" width="7.0" height="1.6" fill="#3c9a3c" fill-opacity="0.55"/><rect x="85.0" y="302.5" width="2.0" height="1.6" fill="#3c9a3c" fill-opacity="0.55"/><rect x="88.0" y="302.5" width="2.0" height="1.6" fill="#3c9a3c" fill-opacity="0.55"/><rect x="87.0" y="302.5" width="1.0" height="1.2" fill="#3c9a3c" fill-opacity="0.5"/><rect x="11.0" y="304.5" width="4.0" height="1.2" fill="#9a9a9a" fill-opacity="0.7"/><rect x="20.0" y="304.5" width="5.0" height="1.6" fill="#2a3a8a" fill-opacity="0.55"/><rect x="26.0" y="304.5" width="5.0" height="1.6" fill="#2a3a8a" fill-opacity="0.55"/><rect x="32.0" y="304.5" width="6.0" height="1.6" fill="#2a3a8a" fill-opacity="0.55"/><rect x="39.0" y="304.5" width="3.0" height="1.6" fill="#2a3a8a" fill-opacity="0.55"/><rect x="43.0" y="304.5" width="1.0" height="1.6" fill="#2a3a8a" fill-opacity="0.55"/><rect x="56.0" y="304.5" width="2.0" height="1.2" fill="#3c9a3c" fill-opacity="0.7"/><rect x="59.0" y="304.5" width="4.0" height="1.6" fill="#3c9a3c" fill-opacity="0.55"/><rect x="64.0" y="304.5" width="5.0" height="1.6" fill="#3c9a3c" fill-opacity="0.55"/><rect x="70.0" y="304.5" width="2.0" height="1.6" fill="#3c9a3c" fill-opacity="0.55"/><rect x="73.0" y="304.5" width="6.0" height="1.6" fill="#3c9a3c" fill-opacity="0.55"/><rect x="80.0" y="304.5" width="3.0" height="1.6" fill="#3c9a3c" fill-opacity="0.55"/><rect x="84.0" y="304.5" width="3.0" height="1.6" fill="#3c9a3c" fill-opacity="0.55"/><rect x="88.0" y="304.5" width="1.0" height="1.6" fill="#3c9a3c" fill-opacity="0.55"/><rect x="87.0" y="304.5" width="1.0" height="1.2" fill="#3c9a3c" fill-opacity="0.5"/><rect x="11.0" y="306.5" width="4.0" height="1.2" fill="#9a9a9a" fill-opacity="0.7"/><rect x="20.0" y="306.5" width="4.0" height="1.6" fill="#2a3a8a" fill-opacity="0.55"/><rect x="25.0" y="306.5" width="4.0" height="1.6" fill="#2a3a8a" fill-opacity="0.55"/><rect x="30.0" y="306.5" width="4.0" height="1.6" fill="#2a3a8a" fill-opacity="0.55"/><rect x="35.0" y="306.5" width="4.0" height="1.6" fill="#2a3a8a" fill-opacity="0.55"/><rect x="56.0" y="306.5" width="2.0" height="1.2" fill="#3c9a3c" fill-opacity="0.7"/><rect x="59.0" y="306.5" width="7.0" height="1.6" fill="#3c9a3c" fill-opacity="0.55"/><rect x="67.0" y="306.5" width="7.0" height="1.6" fill="#3c9a3c" fill-opacity="0.55"/><rect x="75.0" y="306.5" width="4.0" height="1.6" fill="#3c9a3c" fill-opacity="0.55"/><rect x="80.0" y="306.5" width="5.0" height="1.6" fill="#3c9a3c" fill-opacity="0.55"/><rect x="87.0" y="306.5" width="1.0" height="1.2" fill="#3c9a3c" fill-opacity="0.5"/><rect x="11.0" y="308.5" width="4.0" height="1.2" fill="#9a9a9a" fill-opacity="0.7"/><rect x="20.0" y="308.5" width="3.0" height="1.6" fill="#2a3a8a" fill-opacity="0.55"/><rect x="24.0" y="308.5" width="4.0" height="1.6" fill="#2a3a8a" fill-opacity="0.55"/><rect x="29.0" y="308.5" width="5.0" height="1.6" fill="#2a3a8a" fill-opacity="0.55"/><rect x="35.0" y="308.5" width="6.0" height="1.6" fill="#2a3a8a" fill-opacity="0.55"/><rect x="42.0" y="308.5" width="1.0" height="1.6" fill="#2a3a8a" fill-opacity="0.55"/><rect x="56.0" y="308.5" width="2.0" height="1.2" fill="#3c9a3c" fill-opacity="0.7"/><rect x="59.0" y="308.5" width="2.0" height="1.6" fill="#3c9a3c" fill-opacity="0.55"/><rect x="62.0" y="308.5" width="3.0" height="1.6" fill="#3c9a3c" fill-opacity="0.55"/><rect x="66.0" y="308.5" width="7.0" height="1.6" fill="#3c9a3c" fill-opacity="0.55"/><rect x="87.0" y="308.5" width="1.0" height="1.2" fill="#3c9a3c" fill-opacity="0.5"/><rect x="11.0" y="310.5" width="4.0" height="1.2" fill="#9a9a9a" fill-opacity="0.7"/><rect x="20.0" y="310.5" width="2.0" height="1.6" fill="#2a3a8a" fill-opacity="0.55"/><rect x="23.0" y="310.5" width="3.0" height="1.6" fill="#2a3a8a" fill-opacity="0.55"/><rect x="27.0" y="310.5" width="6.0" height="1.6" fill="#2a3a8a" fill-opacity="0.55"/><rect x="34.0" y="310.5" width="1.0" height="1.6" fill="#2a3a8a" fill-opacity="0.55"/><rect x="56.0" y="310.5" width="2.0" height="1.2" fill="#3c9a3c" fill-opacity="0.7"/><rect x="59.0" y="310.5" width="3.0" height="1.6" fill="#3c9a3c" fill-opacity="0.55"/><rect x="63.0" y="310.5" width="5.0" height="1.6" fill="#3c9a3c" fill-opacity="0.55"/><rect x="69.0" y="310.5" width="4.0" height="1.6" fill="#3c9a3c" fill-opacity="0.55"/><rect x="74.0" y="310.5" width="5.0" height="1.6" fill="#3c9a3c" fill-opacity="0.55"/><rect x="87.0" y="310.5" width="1.0" height="1.2" fill="#3c9a3c" fill-opacity="0.5"/><rect x="11.0" y="312.5" width="4.0" height="1.2" fill="#9a9a9a" fill-opacity="0.7"/><rect x="20.0" y="312.5" width="3.0" height="1.6" fill="#2a3a8a" fill-opacity="0.55"/><rect x="24.0" y="312.5" width="6.0" height="1.6" fill="#2a3a8a" fill-opacity="0.55"/><rect x="31.0" y="312.5" width="3.0" height="1.6" fill="#2a3a8a" fill-opacity="0.55"/><rect x="35.0" y="312.5" width="3.0" height="1.6" fill="#2a3a8a" fill-opacity="0.55"/><rect x="56.0" y="312.5" width="2.0" height="1.2" fill="#3c9a3c" fill-opacity="0.7"/><rect x="59.0" y="312.5" width="3.0" height="1.6" fill="#3c9a3c" fill-opacity="0.55"/><rect x="63.0" y="312.5" width="1.0" height="1.6" fill="#3c9a3c" fill-opacity="0.55"/><rect x="87.0" y="312.5" width="1.0" height="1.2" fill="#3c9a3c" fill-opacity="0.5"/><rect x="11.0" y="314.5" width="4.0" height="1.2" fill="#9a9a9a" fill-opacity="0.7"/><rect x="20.0" y="314.5" width="2.0" height="1.6" fill="#2a3a8a" fill-opacity="0.55"/><rect x="23.0" y="314.5" width="4.0" height="1.6" fill="#2a3a8a" fill-opacity="0.55"/><rect x="28.0" y="314.5" width="3.0" height="1.6" fill="#2a3a8a" fill-opacity="0.55"/><rect x="32.0" y="314.5" width="4.0" height="1.6" fill="#2a3a8a" fill-opacity="0.55"/><rect x="37.0" y="314.5" width="4.0" height="1.6" fill="#2a3a8a" fill-opacity="0.55"/><rect x="56.0" y="314.5" width="2.0" height="1.2" fill="#3c9a3c" fill-opacity="0.7"/><rect x="59.0" y="314.5" width="6.0" height="1.6" fill="#3c9a3c" fill-opacity="0.55"/><rect x="66.0" y="314.5" width="3.0" height="1.6" fill="#3c9a3c" fill-opacity="0.55"/><rect x="70.0" y="314.5" width="2.0" height="1.6" fill="#3c9a3c" fill-opacity="0.55"/><rect x="73.0" y="314.5" width="7.0" height="1.6" fill="#3c9a3c" fill-opacity="0.55"/><rect x="81.0" y="314.5" width="5.0" height="1.6" fill="#3c9a3c" fill-opacity="0.55"/><rect x="87.0" y="314.5" width="1.0" height="1.2" fill="#3c9a3c" fill-opacity="0.5"/><rect x="11.0" y="316.5" width="4.0" height="1.2" fill="#9a9a9a" fill-opacity="0.7"/><rect x="20.0" y="316.5" width="5.0" height="1.6" fill="#2a3a8a" fill-opacity="0.55"/><rect x="26.0" y="316.5" width="7.0" height="1.6" fill="#2a3a8a" fill-opacity="0.55"/><rect x="34.0" y="316.5" width="5.0" height="1.6" fill="#2a3a8a" fill-opacity="0.55"/><rect x="56.0" y="316.5" width="2.0" height="1.2" fill="#3c9a3c" fill-opacity="0.7"/><rect x="59.0" y="316.5" width="5.0" height="1.6" fill="#3c9a3c" fill-opacity="0.55"/><rect x="65.0" y="316.5" width="3.0" height="1.6" fill="#3c9a3c" fill-opacity="0.55"/><rect x="87.0" y="316.5" width="1.0" height="1.2" fill="#3c9a3c" fill-opacity="0.5"/><rect x="11.0" y="318.5" width="4.0" height="1.2" fill="#9a9a9a" fill-opacity="0.7"/><rect x="20.0" y="318.5" width="2.0" height="1.6" fill="#2a3a8a" fill-opacity="0.55"/><rect x="23.0" y="318.5" width="5.0" height="1.6" fill="#2a3a8a" fill-opacity="0.55"/><rect x="29.0" y="318.5" width="4.0" height="1.6" fill="#2a3a8a" fill-opacity="0.55"/><rect x="34.0" y="318.5" width="4.0" height="1.6" fill="#2a3a8a" fill-opacity="0.55"/><rect x="56.0" y="318.5" width="2.0" height="1.2" fill="#3c9a3c" fill-opacity="0.7"/><rect x="59.0" y="318.5" width="3.0" height="1.6" fill="#3c9a3c" fill-opacity="0.55"/><rect x="63.0" y="318.5" width="7.0" height="1.6" fill="#3c9a3c" fill-opacity="0.55"/><rect x="71.0" y="318.5" width="2.0" height="1.6" fill="#3c9a3c" fill-opacity="0.55"/><rect x="87.0" y="318.5" width="1.0" height="1.2" fill="#3c9a3c" fill-opacity="0.5"/><rect x="11.0" y="320.5" width="4.0" height="1.2" fill="#9a9a9a" fill-opacity="0.7"/><rect x="20.0" y="320.5" width="7.0" height="1.6" fill="#2a3a8a" fill-opacity="0.55"/><rect x="28.0" y="320.5" width="3.0" height="1.6" fill="#2a3a8a" fill-opacity="0.55"/><rect x="32.0" y="320.5" width="2.0" height="1.6" fill="#2a3a8a" fill-opacity="0.55"/><rect x="35.0" y="320.5" width="4.0" height="1.6" fill="#2a3a8a" fill-opacity="0.55"/><rect x="40.0" y="320.5" width="1.0" height="1.6" fill="#2a3a8a" fill-opacity="0.55"/><rect x="56.0" y="320.5" width="2.0" height="1.2" fill="#3c9a3c" fill-opacity="0.7"/><rect x="59.0" y="320.5" width="5.0" height="1.6" fill="#3c9a3c" fill-opacity="0.55"/><rect x="65.0" y="320.5" width="7.0" height="1.6" fill="#3c9a3c" fill-opacity="0.55"/><rect x="73.0" y="320.5" width="1.0" height="1.6" fill="#3c9a3c" fill-opacity="0.55"/><rect x="87.0" y="320.5" width="1.0" height="1.2" fill="#3c9a3c" fill-opacity="0.5"/><rect x="11.0" y="322.5" width="4.0" height="1.2" fill="#9a9a9a" fill-opacity="0.7"/><rect x="20.0" y="322.5" width="4.0" height="1.6" fill="#2a3a8a" fill-opacity="0.55"/><rect x="25.0" y="322.5" width="2.0" height="1.6" fill="#2a3a8a" fill-opacity="0.55"/><rect x="28.0" y="322.5" width="3.0" height="1.6" fill="#2a3a8a" fill-opacity="0.55"/><rect x="32.0" y="322.5" width="2.0" height="1.6" fill="#2a3a8a" fill-opacity="0.55"/><rect x="35.0" y="322.5" width="4.0" height="1.6" fill="#2a3a8a" fill-opacity="0.55"/><rect x="56.0" y="322.5" width="2.0" height="1.2" fill="#3c9a3c" fill-opacity="0.7"/><rect x="59.0" y="322.5" width="5.0" height="1.6" fill="#3c9a3c" fill-opacity="0.55"/><rect x="65.0" y="322.5" width="6.0" height="1.6" fill="#3c9a3c" fill-opacity="0.55"/><rect x="72.0" y="322.5" width="5.0" height="1.6" fill="#3c9a3c" fill-opacity="0.55"/><rect x="78.0" y="322.5" width="2.0" height="1.6" fill="#3c9a3c" fill-opacity="0.55"/><rect x="81.0" y="322.5" width="2.0" height="1.6" fill="#3c9a3c" fill-opacity="0.55"/><rect x="87.0" y="322.5" width="1.0" height="1.2" fill="#3c9a3c" fill-opacity="0.5"/><rect x="11.0" y="324.5" width="4.0" height="1.2" fill="#9a9a9a" fill-opacity="0.7"/><rect x="20.0" y="324.5" width="6.0" height="1.6" fill="#2a3a8a" fill-opacity="0.55"/><rect x="27.0" y="324.5" width="5.0" height="1.6" fill="#2a3a8a" fill-opacity="0.55"/><rect x="33.0" y="324.5" width="5.0" height="1.6" fill="#2a3a8a" fill-opacity="0.55"/><rect x="56.0" y="324.5" width="2.0" height="1.2" fill="#3c9a3c" fill-opacity="0.7"/><rect x="59.0" y="324.5" width="2.0" height="1.6" fill="#3c9a3c" fill-opacity="0.55"/><rect x="62.0" y="324.5" width="3.0" height="1.6" fill="#3c9a3c" fill-opacity="0.55"/><rect x="66.0" y="324.5" width="3.0" height="1.6" fill="#3c9a3c" fill-opacity="0.55"/><rect x="87.0" y="324.5" width="1.0" height="1.2" fill="#3c9a3c" fill-opacity="0.5"/><rect x="11.0" y="326.5" width="4.0" height="1.2" fill="#9a9a9a" fill-opacity="0.7"/><rect x="20.0" y="326.5" width="6.0" height="1.6" fill="#2a3a8a" fill-opacity="0.55"/><rect x="27.0" y="326.5" width="7.0" height="1.6" fill="#2a3a8a" fill-opacity="0.55"/><rect x="56.0" y="326.5" width="2.0" height="1.2" fill="#3c9a3c" fill-opacity="0.7"/><rect x="59.0" y="326.5" width="6.0" height="1.6" fill="#3c9a3c" fill-opacity="0.55"/><rect x="87.0" y="326.5" width="1.0" height="1.2" fill="#3c9a3c" fill-opacity="0.5"/><rect x="11.0" y="328.5" width="4.0" height="1.2" fill="#9a9a9a" fill-opacity="0.7"/><rect x="20.0" y="328.5" width="7.0" height="1.6" fill="#2a3a8a" fill-opacity="0.55"/><rect x="28.0" y="328.5" width="5.0" height="1.6" fill="#2a3a8a" fill-opacity="0.55"/><rect x="34.0" y="328.5" width="2.0" height="1.6" fill="#2a3a8a" fill-opacity="0.55"/><rect x="37.0" y="328.5" width="6.0" height="1.6" fill="#2a3a8a" fill-opacity="0.55"/><rect x="56.0" y="328.5" width="2.0" height="1.2" fill="#3c9a3c" fill-opacity="0.7"/><rect x="59.0" y="328.5" width="2.0" height="1.6" fill="#3c9a3c" fill-opacity="0.55"/><rect x="62.0" y="328.5" width="2.0" height="1.6" fill="#3c9a3c" fill-opacity="0.55"/><rect x="65.0" y="328.5" width="3.0" height="1.6" fill="#3c9a3c" fill-opacity="0.55"/><rect x="69.0" y="328.5" width="3.0" height="1.6" fill="#3c9a3c" fill-opacity="0.55"/><rect x="73.0" y="328.5" width="6.0" height="1.6" fill="#3c9a3c" fill-opacity="0.55"/><rect x="80.0" y="328.5" width="2.0" height="1.6" fill="#3c9a3c" fill-opacity="0.55"/><rect x="83.0" y="328.5" width="3.0" height="1.6" fill="#3c9a3c" fill-opacity="0.55"/><rect x="87.0" y="328.5" width="1.0" height="1.2" fill="#3c9a3c" fill-opacity="0.5"/><rect x="11.0" y="330.5" width="4.0" height="1.2" fill="#9a9a9a" fill-opacity="0.7"/><rect x="20.0" y="330.5" width="4.0" height="1.6" fill="#2a3a8a" fill-opacity="0.55"/><rect x="25.0" y="330.5" width="3.0" height="1.6" fill="#2a3a8a" fill-opacity="0.55"/><rect x="29.0" y="330.5" width="7.0" height="1.6" fill="#2a3a8a" fill-opacity="0.55"/><rect x="37.0" y="330.5" width="4.0" height="1.6" fill="#2a3a8a" fill-opacity="0.55"/><rect x="42.0" y="330.5" width="2.0" height="1.6" fill="#2a3a8a" fill-opacity="0.55"/><rect x="56.0" y="330.5" width="2.0" height="1.2" fill="#3c9a3c" fill-opacity="0.7"/><rect x="59.0" y="330.5" width="5.0" height="1.6" fill="#3c9a3c" fill-opacity="0.55"/><rect x="65.0" y="330.5" width="7.0" height="1.6" fill="#3c9a3c" fill-opacity="0.55"/><rect x="73.0" y="330.5" width="2.0" height="1.6" fill="#3c9a3c" fill-opacity="0.55"/><rect x="76.0" y="330.5" width="2.0" height="1.6" fill="#3c9a3c" fill-opacity="0.55"/><rect x="79.0" y="330.5" width="2.0" height="1.6" fill="#3c9a3c" fill-opacity="0.55"/><rect x="87.0" y="330.5" width="1.0" height="1.2" fill="#3c9a3c" fill-opacity="0.5"/><rect x="11.0" y="332.5" width="4.0" height="1.2" fill="#9a9a9a" fill-opacity="0.7"/><rect x="20.0" y="332.5" width="6.0" height="1.6" fill="#2a3a8a" fill-opacity="0.55"/><rect x="27.0" y="332.5" width="6.0" height="1.6" fill="#2a3a8a" fill-opacity="0.55"/><rect x="34.0" y="332.5" width="3.0" height="1.6" fill="#2a3a8a" fill-opacity="0.55"/><rect x="56.0" y="332.5" width="2.0" height="1.2" fill="#3c9a3c" fill-opacity="0.7"/><rect x="59.0" y="332.5" width="4.0" height="1.6" fill="#3c9a3c" fill-opacity="0.55"/><rect x="64.0" y="332.5" width="3.0" height="1.6" fill="#3c9a3c" fill-opacity="0.55"/><rect x="68.0" y="332.5" width="6.0" height="1.6" fill="#3c9a3c" fill-opacity="0.55"/><rect x="87.0" y="332.5" width="1.0" height="1.2" fill="#3c9a3c" fill-opacity="0.5"/><rect x="11.0" y="334.5" width="4.0" height="1.2" fill="#9a9a9a" fill-opacity="0.7"/><rect x="20.0" y="334.5" width="2.0" height="1.6" fill="#2a3a8a" fill-opacity="0.55"/><rect x="23.0" y="334.5" width="6.0" height="1.6" fill="#2a3a8a" fill-opacity="0.55"/><rect x="30.0" y="334.5" width="3.0" height="1.6" fill="#2a3a8a" fill-opacity="0.55"/><rect x="56.0" y="334.5" width="2.0" height="1.2" fill="#3c9a3c" fill-opacity="0.7"/><rect x="59.0" y="334.5" width="4.0" height="1.6" fill="#3c9a3c" fill-opacity="0.55"/><rect x="64.0" y="334.5" width="4.0" height="1.6" fill="#3c9a3c" fill-opacity="0.55"/><rect x="69.0" y="334.5" width="7.0" height="1.6" fill="#3c9a3c" fill-opacity="0.55"/><rect x="87.0" y="334.5" width="1.0" height="1.2" fill="#3c9a3c" fill-opacity="0.5"/><rect x="11.0" y="336.5" width="4.0" height="1.2" fill="#9a9a9a" fill-opacity="0.7"/><rect x="20.0" y="336.5" width="5.0" height="1.6" fill="#2a3a8a" fill-opacity="0.55"/><rect x="26.0" y="336.5" width="6.0" height="1.6" fill="#2a3a8a" fill-opacity="0.55"/><rect x="33.0" y="336.5" width="3.0" height="1.6" fill="#2a3a8a" fill-opacity="0.55"/><rect x="56.0" y="336.5" width="2.0" height="1.2" fill="#3c9a3c" fill-opacity="0.7"/><rect x="59.0" y="336.5" width="3.0" height="1.6" fill="#3c9a3c" fill-opacity="0.55"/><rect x="63.0" y="336.5" width="2.0" height="1.6" fill="#3c9a3c" fill-opacity="0.55"/><rect x="66.0" y="336.5" width="5.0" height="1.6" fill="#3c9a3c" fill-opacity="0.55"/><rect x="72.0" y="336.5" width="7.0" height="1.6" fill="#3c9a3c" fill-opacity="0.55"/><rect x="87.0" y="336.5" width="1.0" height="1.2" fill="#3c9a3c" fill-opacity="0.5"/><rect x="11.0" y="338.5" width="4.0" height="1.2" fill="#9a9a9a" fill-opacity="0.7"/><rect x="20.0" y="338.5" width="4.0" height="1.6" fill="#2a3a8a" fill-opacity="0.55"/><rect x="25.0" y="338.5" width="2.0" height="1.6" fill="#2a3a8a" fill-opacity="0.55"/><rect x="28.0" y="338.5" width="2.0" height="1.6" fill="#2a3a8a" fill-opacity="0.55"/><rect x="31.0" y="338.5" width="3.0" height="1.6" fill="#2a3a8a" fill-opacity="0.55"/><rect x="35.0" y="338.5" width="5.0" height="1.6" fill="#2a3a8a" fill-opacity="0.55"/><rect x="41.0" y="338.5" width="2.0" height="1.6" fill="#2a3a8a" fill-opacity="0.55"/><rect x="56.0" y="338.5" width="2.0" height="1.2" fill="#3c9a3c" fill-opacity="0.7"/><rect x="59.0" y="338.5" width="5.0" height="1.6" fill="#3c9a3c" fill-opacity="0.55"/><rect x="65.0" y="338.5" width="2.0" height="1.6" fill="#3c9a3c" fill-opacity="0.55"/><rect x="68.0" y="338.5" width="4.0" height="1.6" fill="#3c9a3c" fill-opacity="0.55"/><rect x="73.0" y="338.5" width="3.0" height="1.6" fill="#3c9a3c" fill-opacity="0.55"/><rect x="77.0" y="338.5" width="5.0" height="1.6" fill="#3c9a3c" fill-opacity="0.55"/><rect x="87.0" y="338.5" width="1.0" height="1.2" fill="#3c9a3c" fill-opacity="0.5"/><rect x="11.0" y="340.5" width="4.0" height="1.2" fill="#9a9a9a" fill-opacity="0.7"/><rect x="20.0" y="340.5" width="4.0" height="1.6" fill="#2a3a8a" fill-opacity="0.55"/><rect x="25.0" y="340.5" width="3.0" height="1.6" fill="#2a3a8a" fill-opacity="0.55"/><rect x="29.0" y="340.5" width="5.0" height="1.6" fill="#2a3a8a" fill-opacity="0.55"/><rect x="35.0" y="340.5" width="2.0" height="1.6" fill="#2a3a8a" fill-opacity="0.55"/><rect x="38.0" y="340.5" width="1.0" height="1.6" fill="#2a3a8a" fill-opacity="0.55"/><rect x="56.0" y="340.5" width="2.0" height="1.2" fill="#3c9a3c" fill-opacity="0.7"/><rect x="59.0" y="340.5" width="7.0" height="1.6" fill="#3c9a3c" fill-opacity="0.55"/><rect x="67.0" y="340.5" width="5.0" height="1.6" fill="#3c9a3c" fill-opacity="0.55"/><rect x="87.0" y="340.5" width="1.0" height="1.2" fill="#3c9a3c" fill-opacity="0.5"/><rect x="11.0" y="342.5" width="4.0" height="1.2" fill="#9a9a9a" fill-opacity="0.7"/><rect x="20.0" y="342.5" width="7.0" height="1.6" fill="#2a3a8a" fill-opacity="0.55"/><rect x="28.0" y="342.5" width="5.0" height="1.6" fill="#2a3a8a" fill-opacity="0.55"/><rect x="34.0" y="342.5" width="3.0" height="1.6" fill="#2a3a8a" fill-opacity="0.55"/><rect x="56.0" y="342.5" width="2.0" height="1.2" fill="#3c9a3c" fill-opacity="0.7"/><rect x="59.0" y="342.5" width="3.0" height="1.6" fill="#3c9a3c" fill-opacity="0.55"/><rect x="87.0" y="342.5" width="1.0" height="1.2" fill="#3c9a3c" fill-opacity="0.5"/><rect x="11.0" y="344.5" width="4.0" height="1.2" fill="#9a9a9a" fill-opacity="0.7"/><rect x="20.0" y="344.5" width="6.0" height="1.6" fill="#2a3a8a" fill-opacity="0.55"/><rect x="27.0" y="344.5" width="2.0" height="1.6" fill="#2a3a8a" fill-opacity="0.55"/><rect x="30.0" y="344.5" width="3.0" height="1.6" fill="#2a3a8a" fill-opacity="0.55"/><rect x="34.0" y="344.5" width="5.0" height="1.6" fill="#2a3a8a" fill-opacity="0.55"/><rect x="40.0" y="344.5" width="3.0" height="1.6" fill="#2a3a8a" fill-opacity="0.55"/><rect x="56.0" y="344.5" width="2.0" height="1.2" fill="#3c9a3c" fill-opacity="0.7"/><rect x="59.0" y="344.5" width="3.0" height="1.6" fill="#3c9a3c" fill-opacity="0.55"/><rect x="63.0" y="344.5" width="3.0" height="1.6" fill="#3c9a3c" fill-opacity="0.55"/><rect x="67.0" y="344.5" width="4.0" height="1.6" fill="#3c9a3c" fill-opacity="0.55"/><rect x="87.0" y="344.5" width="1.0" height="1.2" fill="#3c9a3c" fill-opacity="0.5"/><rect x="11.0" y="346.5" width="4.0" height="1.2" fill="#9a9a9a" fill-opacity="0.7"/><rect x="20.0" y="346.5" width="4.0" height="1.6" fill="#2a3a8a" fill-opacity="0.55"/><rect x="25.0" y="346.5" width="4.0" height="1.6" fill="#2a3a8a" fill-opacity="0.55"/><rect x="30.0" y="346.5" width="2.0" height="1.6" fill="#2a3a8a" fill-opacity="0.55"/><rect x="33.0" y="346.5" width="3.0" height="1.6" fill="#2a3a8a" fill-opacity="0.55"/><rect x="56.0" y="346.5" width="2.0" height="1.2" fill="#3c9a3c" fill-opacity="0.7"/><rect x="59.0" y="346.5" width="6.0" height="1.6" fill="#3c9a3c" fill-opacity="0.55"/><rect x="66.0" y="346.5" width="3.0" height="1.6" fill="#3c9a3c" fill-opacity="0.55"/><rect x="70.0" y="346.5" width="3.0" height="1.6" fill="#3c9a3c" fill-opacity="0.55"/><rect x="74.0" y="346.5" width="3.0" height="1.6" fill="#3c9a3c" fill-opacity="0.55"/><rect x="87.0" y="346.5" width="1.0" height="1.2" fill="#3c9a3c" fill-opacity="0.5"/><rect x="11.0" y="348.5" width="4.0" height="1.2" fill="#9a9a9a" fill-opacity="0.7"/><rect x="20.0" y="348.5" width="7.0" height="1.6" fill="#2a3a8a" fill-opacity="0.55"/><rect x="28.0" y="348.5" width="2.0" height="1.6" fill="#2a3a8a" fill-opacity="0.55"/><rect x="31.0" y="348.5" width="6.0" height="1.6" fill="#2a3a8a" fill-opacity="0.55"/><rect x="38.0" y="348.5" width="1.0" height="1.6" fill="#2a3a8a" fill-opacity="0.55"/><rect x="56.0" y="348.5" width="2.0" height="1.2" fill="#3c9a3c" fill-opacity="0.7"/><rect x="59.0" y="348.5" width="2.0" height="1.6" fill="#3c9a3c" fill-opacity="0.55"/><rect x="62.0" y="348.5" width="3.0" height="1.6" fill="#3c9a3c" fill-opacity="0.55"/><rect x="66.0" y="348.5" width="2.0" height="1.6" fill="#3c9a3c" fill-opacity="0.55"/><rect x="69.0" y="348.5" width="5.0" height="1.6" fill="#3c9a3c" fill-opacity="0.55"/><rect x="87.0" y="348.5" width="1.0" height="1.2" fill="#3c9a3c" fill-opacity="0.5"/><rect x="11.0" y="350.5" width="4.0" height="1.2" fill="#9a9a9a" fill-opacity="0.7"/><rect x="20.0" y="350.5" width="5.0" height="1.6" fill="#2a3a8a" fill-opacity="0.55"/><rect x="26.0" y="350.5" width="2.0" height="1.6" fill="#2a3a8a" fill-opacity="0.55"/><rect x="29.0" y="350.5" width="6.0" height="1.6" fill="#2a3a8a" fill-opacity="0.55"/><rect x="56.0" y="350.5" width="2.0" height="1.2" fill="#3c9a3c" fill-opacity="0.7"/><rect x="59.0" y="350.5" width="3.0" height="1.6" fill="#3c9a3c" fill-opacity="0.55"/><rect x="87.0" y="350.5" width="1.0" height="1.2" fill="#3c9a3c" fill-opacity="0.5"/><rect x="11.0" y="352.5" width="4.0" height="1.2" fill="#9a9a9a" fill-opacity="0.7"/><rect x="20.0" y="352.5" width="5.0" height="1.6" fill="#2a3a8a" fill-opacity="0.55"/><rect x="26.0" y="352.5" width="7.0" height="1.6" fill="#2a3a8a" fill-opacity="0.55"/><rect x="34.0" y="352.5" width="4.0" height="1.6" fill="#2a3a8a" fill-opacity="0.55"/><rect x="56.0" y="352.5" width="2.0" height="1.2" fill="#3c9a3c" fill-opacity="0.7"/><rect x="59.0" y="352.5" width="2.0" height="1.6" fill="#3c9a3c" fill-opacity="0.55"/><rect x="62.0" y="352.5" width="2.0" height="1.6" fill="#3c9a3c" fill-opacity="0.55"/><rect x="65.0" y="352.5" width="3.0" height="1.6" fill="#3c9a3c" fill-opacity="0.55"/><rect x="69.0" y="352.5" width="4.0" height="1.6" fill="#3c9a3c" fill-opacity="0.55"/><rect x="74.0" y="352.5" width="3.0" height="1.6" fill="#3c9a3c" fill-opacity="0.55"/><rect x="78.0" y="352.5" width="3.0" height="1.6" fill="#3c9a3c" fill-opacity="0.55"/><rect x="82.0" y="352.5" width="3.0" height="1.6" fill="#3c9a3c" fill-opacity="0.55"/><rect x="87.0" y="352.5" width="1.0" height="1.2" fill="#3c9a3c" fill-opacity="0.5"/><rect x="11.0" y="354.5" width="4.0" height="1.2" fill="#9a9a9a" fill-opacity="0.7"/><rect x="20.0" y="354.5" width="7.0" height="1.6" fill="#2a3a8a" fill-opacity="0.55"/><rect x="28.0" y="354.5" width="5.0" height="1.6" fill="#2a3a8a" fill-opacity="0.55"/><rect x="34.0" y="354.5" width="2.0" height="1.6" fill="#2a3a8a" fill-opacity="0.55"/><rect x="37.0" y="354.5" width="4.0" height="1.6" fill="#2a3a8a" fill-opacity="0.55"/><rect x="56.0" y="354.5" width="2.0" height="1.2" fill="#3c9a3c" fill-opacity="0.7"/><rect x="59.0" y="354.5" width="7.0" height="1.6" fill="#3c9a3c" fill-opacity="0.55"/><rect x="67.0" y="354.5" width="5.0" height="1.6" fill="#3c9a3c" fill-opacity="0.55"/><rect x="73.0" y="354.5" width="4.0" height="1.6" fill="#3c9a3c" fill-opacity="0.55"/><rect x="78.0" y="354.5" width="4.0" height="1.6" fill="#3c9a3c" fill-opacity="0.55"/><rect x="87.0" y="354.5" width="1.0" height="1.2" fill="#3c9a3c" fill-opacity="0.5"/><rect x="11.0" y="356.5" width="4.0" height="1.2" fill="#9a9a9a" fill-opacity="0.7"/><rect x="20.0" y="356.5" width="3.0" height="1.6" fill="#2a3a8a" fill-opacity="0.55"/><rect x="24.0" y="356.5" width="2.0" height="1.6" fill="#2a3a8a" fill-opacity="0.55"/><rect x="27.0" y="356.5" width="2.0" height="1.6" fill="#2a3a8a" fill-opacity="0.55"/><rect x="30.0" y="356.5" width="2.0" height="1.6" fill="#2a3a8a" fill-opacity="0.55"/><rect x="33.0" y="356.5" width="4.0" height="1.6" fill="#2a3a8a" fill-opacity="0.55"/><rect x="38.0" y="356.5" width="2.0" height="1.6" fill="#2a3a8a" fill-opacity="0.55"/><rect x="56.0" y="356.5" width="2.0" height="1.2" fill="#3c9a3c" fill-opacity="0.7"/><rect x="59.0" y="356.5" width="5.0" height="1.6" fill="#3c9a3c" fill-opacity="0.55"/><rect x="65.0" y="356.5" width="2.0" height="1.6" fill="#3c9a3c" fill-opacity="0.55"/><rect x="68.0" y="356.5" width="5.0" height="1.6" fill="#3c9a3c" fill-opacity="0.55"/><rect x="87.0" y="356.5" width="1.0" height="1.2" fill="#3c9a3c" fill-opacity="0.5"/><rect x="11.0" y="358.5" width="4.0" height="1.2" fill="#9a9a9a" fill-opacity="0.7"/><rect x="20.0" y="358.5" width="3.0" height="1.6" fill="#2a3a8a" fill-opacity="0.55"/><rect x="24.0" y="358.5" width="5.0" height="1.6" fill="#2a3a8a" fill-opacity="0.55"/><rect x="30.0" y="358.5" width="4.0" height="1.6" fill="#2a3a8a" fill-opacity="0.55"/><rect x="35.0" y="358.5" width="4.0" height="1.6" fill="#2a3a8a" fill-opacity="0.55"/><rect x="40.0" y="358.5" width="5.0" height="1.6" fill="#2a3a8a" fill-opacity="0.55"/><rect x="56.0" y="358.5" width="2.0" height="1.2" fill="#3c9a3c" fill-opacity="0.7"/><rect x="59.0" y="358.5" width="2.0" height="1.6" fill="#3c9a3c" fill-opacity="0.55"/><rect x="62.0" y="358.5" width="2.0" height="1.6" fill="#3c9a3c" fill-opacity="0.55"/><rect x="87.0" y="358.5" width="1.0" height="1.2" fill="#3c9a3c" fill-opacity="0.5"/><rect x="11.0" y="360.5" width="4.0" height="1.2" fill="#9a9a9a" fill-opacity="0.7"/><rect x="20.0" y="360.5" width="3.0" height="1.6" fill="#2a3a8a" fill-opacity="0.55"/><rect x="24.0" y="360.5" width="4.0" height="1.6" fill="#2a3a8a" fill-opacity="0.55"/><rect x="29.0" y="360.5" width="6.0" height="1.6" fill="#2a3a8a" fill-opacity="0.55"/><rect x="36.0" y="360.5" width="4.0" height="1.6" fill="#2a3a8a" fill-opacity="0.55"/><rect x="56.0" y="360.5" width="2.0" height="1.2" fill="#3c9a3c" fill-opacity="0.7"/><rect x="59.0" y="360.5" width="4.0" height="1.6" fill="#3c9a3c" fill-opacity="0.55"/><rect x="64.0" y="360.5" width="4.0" height="1.6" fill="#3c9a3c" fill-opacity="0.55"/><rect x="87.0" y="360.5" width="1.0" height="1.2" fill="#3c9a3c" fill-opacity="0.5"/><rect x="11.0" y="362.5" width="4.0" height="1.2" fill="#9a9a9a" fill-opacity="0.7"/><rect x="20.0" y="362.5" width="5.0" height="1.6" fill="#2a3a8a" fill-opacity="0.55"/><rect x="26.0" y="362.5" width="2.0" height="1.6" fill="#2a3a8a" fill-opacity="0.55"/><rect x="29.0" y="362.5" width="7.0" height="1.6" fill="#2a3a8a" fill-opacity="0.55"/><rect x="37.0" y="362.5" width="5.0" height="1.6" fill="#2a3a8a" fill-opacity="0.55"/><rect x="43.0" y="362.5" width="1.0" height="1.6" fill="#2a3a8a" fill-opacity="0.55"/><rect x="56.0" y="362.5" width="2.0" height="1.2" fill="#3c9a3c" fill-opacity="0.7"/><rect x="59.0" y="362.5" width="7.0" height="1.6" fill="#3c9a3c" fill-opacity="0.55"/><rect x="67.0" y="362.5" width="5.0" height="1.6" fill="#3c9a3c" fill-opacity="0.55"/><rect x="73.0" y="362.5" width="2.0" height="1.6" fill="#3c9a3c" fill-opacity="0.55"/><rect x="76.0" y="362.5" width="5.0" height="1.6" fill="#3c9a3c" fill-opacity="0.55"/><rect x="82.0" y="362.5" width="2.0" height="1.6" fill="#3c9a3c" fill-opacity="0.55"/><rect x="85.0" y="362.5" width="2.0" height="1.6" fill="#3c9a3c" fill-opacity="0.55"/><rect x="87.0" y="362.5" width="1.0" height="1.2" fill="#3c9a3c" fill-opacity="0.5"/><rect x="11.0" y="364.5" width="4.0" height="1.2" fill="#9a9a9a" fill-opacity="0.7"/><rect x="20.0" y="364.5" width="2.0" height="1.6" fill="#2a3a8a" fill-opacity="0.55"/><rect x="23.0" y="364.5" width="4.0" height="1.6" fill="#2a3a8a" fill-opacity="0.55"/><rect x="28.0" y="364.5" width="3.0" height="1.6" fill="#2a3a8a" fill-opacity="0.55"/><rect x="32.0" y="364.5" width="2.0" height="1.6" fill="#2a3a8a" fill-opacity="0.55"/><rect x="56.0" y="364.5" width="2.0" height="1.2" fill="#3c9a3c" fill-opacity="0.7"/><rect x="59.0" y="364.5" width="5.0" height="1.6" fill="#3c9a3c" fill-opacity="0.55"/><rect x="87.0" y="364.5" width="1.0" height="1.2" fill="#3c9a3c" fill-opacity="0.5"/><rect x="11.0" y="366.5" width="4.0" height="1.2" fill="#9a9a9a" fill-opacity="0.7"/><rect x="20.0" y="366.5" width="4.0" height="1.6" fill="#2a3a8a" fill-opacity="0.55"/><rect x="25.0" y="366.5" width="4.0" height="1.6" fill="#2a3a8a" fill-opacity="0.55"/><rect x="30.0" y="366.5" width="4.0" height="1.6" fill="#2a3a8a" fill-opacity="0.55"/><rect x="35.0" y="366.5" width="3.0" height="1.6" fill="#2a3a8a" fill-opacity="0.55"/><rect x="56.0" y="366.5" width="2.0" height="1.2" fill="#3c9a3c" fill-opacity="0.7"/><rect x="59.0" y="366.5" width="4.0" height="1.6" fill="#3c9a3c" fill-opacity="0.55"/><rect x="87.0" y="366.5" width="1.0" height="1.2" fill="#3c9a3c" fill-opacity="0.5"/><rect x="11.0" y="368.5" width="4.0" height="1.2" fill="#9a9a9a" fill-opacity="0.7"/><rect x="20.0" y="368.5" width="7.0" height="1.6" fill="#2a3a8a" fill-opacity="0.55"/><rect x="28.0" y="368.5" width="7.0" height="1.6" fill="#2a3a8a" fill-opacity="0.55"/><rect x="36.0" y="368.5" width="4.0" height="1.6" fill="#2a3a8a" fill-opacity="0.55"/><rect x="41.0" y="368.5" width="3.0" height="1.6" fill="#2a3a8a" fill-opacity="0.55"/><rect x="56.0" y="368.5" width="2.0" height="1.2" fill="#3c9a3c" fill-opacity="0.7"/><rect x="59.0" y="368.5" width="2.0" height="1.6" fill="#3c9a3c" fill-opacity="0.55"/><rect x="62.0" y="368.5" width="7.0" height="1.6" fill="#3c9a3c" fill-opacity="0.55"/><rect x="70.0" y="368.5" width="1.0" height="1.6" fill="#3c9a3c" fill-opacity="0.55"/><rect x="87.0" y="368.5" width="1.0" height="1.2" fill="#3c9a3c" fill-opacity="0.5"/><rect x="11.0" y="370.5" width="4.0" height="1.2" fill="#9a9a9a" fill-opacity="0.7"/><rect x="20.0" y="370.5" width="7.0" height="1.6" fill="#2a3a8a" fill-opacity="0.55"/><rect x="28.0" y="370.5" width="2.0" height="1.6" fill="#2a3a8a" fill-opacity="0.55"/><rect x="31.0" y="370.5" width="2.0" height="1.6" fill="#2a3a8a" fill-opacity="0.55"/><rect x="34.0" y="370.5" width="3.0" height="1.6" fill="#2a3a8a" fill-opacity="0.55"/><rect x="38.0" y="370.5" width="2.0" height="1.6" fill="#2a3a8a" fill-opacity="0.55"/><rect x="41.0" y="370.5" width="4.0" height="1.6" fill="#2a3a8a" fill-opacity="0.55"/><rect x="56.0" y="370.5" width="2.0" height="1.2" fill="#3c9a3c" fill-opacity="0.7"/><rect x="59.0" y="370.5" width="5.0" height="1.6" fill="#3c9a3c" fill-opacity="0.55"/><rect x="65.0" y="370.5" width="5.0" height="1.6" fill="#3c9a3c" fill-opacity="0.55"/><rect x="71.0" y="370.5" width="4.0" height="1.6" fill="#3c9a3c" fill-opacity="0.55"/><rect x="76.0" y="370.5" width="5.0" height="1.6" fill="#3c9a3c" fill-opacity="0.55"/><rect x="82.0" y="370.5" width="2.0" height="1.6" fill="#3c9a3c" fill-opacity="0.55"/><rect x="87.0" y="370.5" width="1.0" height="1.2" fill="#3c9a3c" fill-opacity="0.5"/><rect x="11.0" y="372.5" width="4.0" height="1.2" fill="#9a9a9a" fill-opacity="0.7"/><rect x="20.0" y="372.5" width="5.0" height="1.6" fill="#2a3a8a" fill-opacity="0.55"/><rect x="26.0" y="372.5" width="3.0" height="1.6" fill="#2a3a8a" fill-opacity="0.55"/><rect x="30.0" y="372.5" width="2.0" height="1.6" fill="#2a3a8a" fill-opacity="0.55"/><rect x="33.0" y="372.5" width="2.0" height="1.6" fill="#2a3a8a" fill-opacity="0.55"/><rect x="56.0" y="372.5" width="2.0" height="1.2" fill="#3c9a3c" fill-opacity="0.7"/><rect x="59.0" y="372.5" width="7.0" height="1.6" fill="#3c9a3c" fill-opacity="0.55"/><rect x="67.0" y="372.5" width="3.0" height="1.6" fill="#3c9a3c" fill-opacity="0.55"/><rect x="87.0" y="372.5" width="1.0" height="1.2" fill="#3c9a3c" fill-opacity="0.5"/><rect x="11.0" y="374.5" width="4.0" height="1.2" fill="#9a9a9a" fill-opacity="0.7"/><rect x="20.0" y="374.5" width="3.0" height="1.6" fill="#2a3a8a" fill-opacity="0.55"/><rect x="24.0" y="374.5" width="4.0" height="1.6" fill="#2a3a8a" fill-opacity="0.55"/><rect x="29.0" y="374.5" width="4.0" height="1.6" fill="#2a3a8a" fill-opacity="0.55"/><rect x="34.0" y="374.5" width="5.0" height="1.6" fill="#2a3a8a" fill-opacity="0.55"/><rect x="40.0" y="374.5" width="2.0" height="1.6" fill="#2a3a8a" fill-opacity="0.55"/><rect x="56.0" y="374.5" width="2.0" height="1.2" fill="#3c9a3c" fill-opacity="0.7"/><rect x="59.0" y="374.5" width="6.0" height="1.6" fill="#3c9a3c" fill-opacity="0.55"/><rect x="66.0" y="374.5" width="2.0" height="1.6" fill="#3c9a3c" fill-opacity="0.55"/><rect x="69.0" y="374.5" width="6.0" height="1.6" fill="#3c9a3c" fill-opacity="0.55"/><rect x="76.0" y="374.5" width="3.0" height="1.6" fill="#3c9a3c" fill-opacity="0.55"/><rect x="80.0" y="374.5" width="5.0" height="1.6" fill="#3c9a3c" fill-opacity="0.55"/><rect x="86.0" y="374.5" width="1.0" height="1.6" fill="#3c9a3c" fill-opacity="0.55"/><rect x="87.0" y="374.5" width="1.0" height="1.2" fill="#3c9a3c" fill-opacity="0.5"/><rect x="11.0" y="376.5" width="4.0" height="1.2" fill="#9a9a9a" fill-opacity="0.7"/><rect x="20.0" y="376.5" width="5.0" height="1.6" fill="#2a3a8a" fill-opacity="0.55"/><rect x="26.0" y="376.5" width="2.0" height="1.6" fill="#2a3a8a" fill-opacity="0.55"/><rect x="29.0" y="376.5" width="7.0" height="1.6" fill="#2a3a8a" fill-opacity="0.55"/><rect x="56.0" y="376.5" width="2.0" height="1.2" fill="#3c9a3c" fill-opacity="0.7"/><rect x="59.0" y="376.5" width="4.0" height="1.6" fill="#3c9a3c" fill-opacity="0.55"/><rect x="87.0" y="376.5" width="1.0" height="1.2" fill="#3c9a3c" fill-opacity="0.5"/><rect x="11.0" y="378.5" width="4.0" height="1.2" fill="#9a9a9a" fill-opacity="0.7"/><rect x="20.0" y="378.5" width="6.0" height="1.6" fill="#2a3a8a" fill-opacity="0.55"/><rect x="27.0" y="378.5" width="4.0" height="1.6" fill="#2a3a8a" fill-opacity="0.55"/><rect x="32.0" y="378.5" width="3.0" height="1.6" fill="#2a3a8a" fill-opacity="0.55"/><rect x="36.0" y="378.5" width="5.0" height="1.6" fill="#2a3a8a" fill-opacity="0.55"/><rect x="56.0" y="378.5" width="2.0" height="1.2" fill="#3c9a3c" fill-opacity="0.7"/><rect x="59.0" y="378.5" width="2.0" height="1.6" fill="#3c9a3c" fill-opacity="0.55"/><rect x="62.0" y="378.5" width="2.0" height="1.6" fill="#3c9a3c" fill-opacity="0.55"/><rect x="65.0" y="378.5" width="4.0" height="1.6" fill="#3c9a3c" fill-opacity="0.55"/><rect x="70.0" y="378.5" width="6.0" height="1.6" fill="#3c9a3c" fill-opacity="0.55"/><rect x="77.0" y="378.5" width="2.0" height="1.6" fill="#3c9a3c" fill-opacity="0.55"/><rect x="80.0" y="378.5" width="3.0" height="1.6" fill="#3c9a3c" fill-opacity="0.55"/><rect x="84.0" y="378.5" width="2.0" height="1.6" fill="#3c9a3c" fill-opacity="0.55"/><rect x="87.0" y="378.5" width="3.0" height="1.6" fill="#3c9a3c" fill-opacity="0.55"/><rect x="87.0" y="378.5" width="1.0" height="1.2" fill="#3c9a3c" fill-opacity="0.5"/><rect x="11.0" y="380.5" width="4.0" height="1.2" fill="#9a9a9a" fill-opacity="0.7"/><rect x="20.0" y="380.5" width="7.0" height="1.6" fill="#2a3a8a" fill-opacity="0.55"/><rect x="28.0" y="380.5" width="5.0" height="1.6" fill="#2a3a8a" fill-opacity="0.55"/><rect x="34.0" y="380.5" width="3.0" height="1.6" fill="#2a3a8a" fill-opacity="0.55"/><rect x="38.0" y="380.5" width="2.0" height="1.6" fill="#2a3a8a" fill-opacity="0.55"/><rect x="56.0" y="380.5" width="2.0" height="1.2" fill="#3c9a3c" fill-opacity="0.7"/><rect x="59.0" y="380.5" width="5.0" height="1.6" fill="#3c9a3c" fill-opacity="0.55"/><rect x="65.0" y="380.5" width="1.0" height="1.6" fill="#3c9a3c" fill-opacity="0.55"/><rect x="87.0" y="380.5" width="1.0" height="1.2" fill="#3c9a3c" fill-opacity="0.5"/><rect x="11.0" y="382.5" width="4.0" height="1.2" fill="#9a9a9a" fill-opacity="0.7"/><rect x="20.0" y="382.5" width="7.0" height="1.6" fill="#2a3a8a" fill-opacity="0.55"/><rect x="28.0" y="382.5" width="3.0" height="1.6" fill="#2a3a8a" fill-opacity="0.55"/><rect x="32.0" y="382.5" width="7.0" height="1.6" fill="#2a3a8a" fill-opacity="0.55"/><rect x="40.0" y="382.5" width="2.0" height="1.6" fill="#2a3a8a" fill-opacity="0.55"/><rect x="56.0" y="382.5" width="2.0" height="1.2" fill="#3c9a3c" fill-opacity="0.7"/><rect x="59.0" y="382.5" width="7.0" height="1.6" fill="#3c9a3c" fill-opacity="0.55"/><rect x="67.0" y="382.5" width="2.0" height="1.6" fill="#3c9a3c" fill-opacity="0.55"/><rect x="70.0" y="382.5" width="4.0" height="1.6" fill="#3c9a3c" fill-opacity="0.55"/><rect x="75.0" y="382.5" width="4.0" height="1.6" fill="#3c9a3c" fill-opacity="0.55"/><rect x="80.0" y="382.5" width="4.0" height="1.6" fill="#3c9a3c" fill-opacity="0.55"/><rect x="85.0" y="382.5" width="4.0" height="1.6" fill="#3c9a3c" fill-opacity="0.55"/><rect x="87.0" y="382.5" width="1.0" height="1.2" fill="#3c9a3c" fill-opacity="0.5"/><rect x="11.0" y="384.5" width="4.0" height="1.2" fill="#9a9a9a" fill-opacity="0.7"/><rect x="20.0" y="384.5" width="4.0" height="1.6" fill="#2a3a8a" fill-opacity="0.55"/><rect x="25.0" y="384.5" width="4.0" height="1.6" fill="#2a3a8a" fill-opacity="0.55"/><rect x="30.0" y="384.5" width="7.0" height="1.6" fill="#2a3a8a" fill-opacity="0.55"/><rect x="56.0" y="384.5" width="2.0" height="1.2" fill="#3c9a3c" fill-opacity="0.7"/><rect x="59.0" y="384.5" width="3.0" height="1.6" fill="#3c9a3c" fill-opacity="0.55"/><rect x="63.0" y="384.5" width="5.0" height="1.6" fill="#3c9a3c" fill-opacity="0.55"/><rect x="69.0" y="384.5" width="1.0" height="1.6" fill="#3c9a3c" fill-opacity="0.55"/><rect x="87.0" y="384.5" width="1.0" height="1.2" fill="#3c9a3c" fill-opacity="0.5"/><rect x="11.0" y="386.5" width="4.0" height="1.2" fill="#9a9a9a" fill-opacity="0.7"/><rect x="20.0" y="386.5" width="3.0" height="1.6" fill="#2a3a8a" fill-opacity="0.55"/><rect x="24.0" y="386.5" width="3.0" height="1.6" fill="#2a3a8a" fill-opacity="0.55"/><rect x="28.0" y="386.5" width="3.0" height="1.6" fill="#2a3a8a" fill-opacity="0.55"/><rect x="32.0" y="386.5" width="3.0" height="1.6" fill="#2a3a8a" fill-opacity="0.55"/><rect x="56.0" y="386.5" width="2.0" height="1.2" fill="#3c9a3c" fill-opacity="0.7"/><rect x="59.0" y="386.5" width="6.0" height="1.6" fill="#3c9a3c" fill-opacity="0.55"/><rect x="66.0" y="386.5" width="3.0" height="1.6" fill="#3c9a3c" fill-opacity="0.55"/><rect x="70.0" y="386.5" width="4.0" height="1.6" fill="#3c9a3c" fill-opacity="0.55"/><rect x="75.0" y="386.5" width="2.0" height="1.6" fill="#3c9a3c" fill-opacity="0.55"/><rect x="78.0" y="386.5" width="5.0" height="1.6" fill="#3c9a3c" fill-opacity="0.55"/><rect x="84.0" y="386.5" width="4.0" height="1.6" fill="#3c9a3c" fill-opacity="0.55"/><rect x="89.0" y="386.5" width="1.0" height="1.6" fill="#3c9a3c" fill-opacity="0.55"/><rect x="87.0" y="386.5" width="1.0" height="1.2" fill="#3c9a3c" fill-opacity="0.5"/><rect x="8.0" y="270.5" width="88.0" height="2" fill="#8cc0f5" fill-opacity="0.95"/><rect x="20.0" y="270.5" width="6.0" height="2" fill="#2f86ee"/><rect x="56.0" y="270.5" width="6.0" height="2" fill="#2f86ee"/><rect x="8.0" y="348.5" width="88.0" height="2" fill="#8cc0f5" fill-opacity="0.95"/><rect x="20.0" y="348.5" width="6.0" height="2" fill="#2f86ee"/><rect x="56.0" y="348.5" width="6.0" height="2" fill="#2f86ee"/><rect x="8.0" y="366.5" width="88.0" height="2" fill="#8cc0f5" fill-opacity="0.95"/><rect x="20.0" y="366.5" width="6.0" height="2" fill="#2f86ee"/><rect x="56.0" y="366.5" width="6.0" height="2" fill="#2f86ee"/><rect x="8.0" y="376.5" width="88.0" height="2" fill="#8cc0f5" fill-opacity="0.95"/><rect x="20.0" y="376.5" width="6.0" height="2" fill="#2f86ee"/><rect x="56.0" y="376.5" width="6.0" height="2" fill="#2f86ee"/><rect x="8.0" y="382.5" width="88.0" height="2" fill="#8cc0f5" fill-opacity="0.95"/><rect x="20.0" y="382.5" width="6.0" height="2" fill="#2f86ee"/><rect x="56.0" y="382.5" width="6.0" height="2" fill="#2f86ee"/><rect x="10.0" y="394.0" width="6.0" height="1.6" fill="#2a3a8a" fill-opacity="0.55"/><rect x="17.0" y="394.0" width="6.0" height="1.6" fill="#2a3a8a" fill-opacity="0.55"/><rect x="24.0" y="394.0" width="3.0" height="1.6" fill="#2a3a8a" fill-opacity="0.55"/><rect x="28.0" y="394.0" width="7.0" height="1.6" fill="#2a3a8a" fill-opacity="0.55"/><rect x="36.0" y="394.0" width="2.0" height="1.6" fill="#2a3a8a" fill-opacity="0.55"/><rect x="39.0" y="394.0" width="6.0" height="1.6" fill="#2a3a8a" fill-opacity="0.55"/><rect x="8.0" y="398.0" width="80.0" height="1.3" fill="#3c9a3c" fill-opacity="0.7"/><rect x="8.0" y="398.0" width="1.0" height="13" fill="#3c9a3c" fill-opacity="0.6"/><rect x="10.0" y="402.0" width="5.0" height="1.6" fill="#3c9a3c" fill-opacity="0.55"/><rect x="16.0" y="402.0" width="2.0" height="1.6" fill="#3c9a3c" fill-opacity="0.55"/><rect x="19.0" y="402.0" width="2.0" height="1.6" fill="#3c9a3c" fill-opacity="0.55"/><rect x="22.0" y="402.0" width="2.0" height="1.6" fill="#3c9a3c" fill-opacity="0.55"/><rect x="25.0" y="402.0" width="5.0" height="1.6" fill="#3c9a3c" fill-opacity="0.55"/><rect x="31.0" y="402.0" width="3.0" height="1.6" fill="#3c9a3c" fill-opacity="0.55"/><rect x="35.0" y="402.0" width="5.0" height="1.6" fill="#3c9a3c" fill-opacity="0.55"/><rect x="41.0" y="402.0" width="4.0" height="1.6" fill="#3c9a3c" fill-opacity="0.55"/><rect x="46.0" y="402.0" width="2.0" height="1.6" fill="#3c9a3c" fill-opacity="0.55"/><rect x="49.0" y="402.0" width="4.0" height="1.6" fill="#3c9a3c" fill-opacity="0.55"/><rect x="54.0" y="402.0" width="3.0" height="1.6" fill="#3c9a3c" fill-opacity="0.55"/><rect x="58.0" y="402.0" width="2.0" height="1.6" fill="#3c9a3c" fill-opacity="0.55"/><rect x="61.0" y="402.0" width="2.0" height="1.6" fill="#3c9a3c" fill-opacity="0.55"/><rect x="64.0" y="402.0" width="3.0" height="1.6" fill="#3c9a3c" fill-opacity="0.55"/><rect x="68.0" y="402.0" width="6.0" height="1.6" fill="#3c9a3c" fill-opacity="0.55"/><rect x="75.0" y="402.0" width="5.0" height="1.6" fill="#3c9a3c" fill-opacity="0.55"/><rect x="10.0" y="404.0" width="3.0" height="1.6" fill="#3c9a3c" fill-opacity="0.55"/><rect x="14.0" y="404.0" width="2.0" height="1.6" fill="#3c9a3c" fill-opacity="0.55"/><rect x="17.0" y="404.0" width="4.0" height="1.6" fill="#3c9a3c" fill-opacity="0.55"/><rect x="22.0" y="404.0" width="6.0" height="1.6" fill="#3c9a3c" fill-opacity="0.55"/><rect x="29.0" y="404.0" width="3.0" height="1.6" fill="#3c9a3c" fill-opacity="0.55"/><rect x="33.0" y="404.0" width="5.0" height="1.6" fill="#3c9a3c" fill-opacity="0.55"/><rect x="39.0" y="404.0" width="6.0" height="1.6" fill="#3c9a3c" fill-opacity="0.55"/><rect x="46.0" y="404.0" width="4.0" height="1.6" fill="#3c9a3c" fill-opacity="0.55"/><rect x="51.0" y="404.0" width="7.0" height="1.6" fill="#3c9a3c" fill-opacity="0.55"/><rect x="59.0" y="404.0" width="2.0" height="1.6" fill="#3c9a3c" fill-opacity="0.55"/><rect x="62.0" y="404.0" width="2.0" height="1.6" fill="#3c9a3c" fill-opacity="0.55"/><rect x="65.0" y="404.0" width="7.0" height="1.6" fill="#3c9a3c" fill-opacity="0.55"/><rect x="73.0" y="404.0" width="6.0" height="1.6" fill="#3c9a3c" fill-opacity="0.55"/><rect x="80.0" y="404.0" width="1.0" height="1.6" fill="#3c9a3c" fill-opacity="0.55"/><rect x="10.0" y="406.0" width="6.0" height="1.6" fill="#3c9a3c" fill-opacity="0.55"/><rect x="17.0" y="406.0" width="4.0" height="1.6" fill="#3c9a3c" fill-opacity="0.55"/><rect x="22.0" y="406.0" width="1.0" height="1.6" fill="#3c9a3c" fill-opacity="0.55"/><rect x="8.0" y="410.5" width="80.0" height="1.3" fill="#3c9a3c" fill-opacity="0.7"/><rect x="12.0" y="412.5" width="5.0" height="1" fill="#9a9a9a" fill-opacity="0.55"/><rect x="22.0" y="412.5" width="10.0" height="1" fill="#2a3a8a" fill-opacity="0.65"/><rect x="12.0" y="414.5" width="11.0" height="1" fill="#9a9a9a" fill-opacity="0.5"/><rect x="22.0" y="414.5" width="28.0" height="1" fill="#2a3a8a" fill-opacity="0.65"/><rect x="51.0" y="414.5" width="9.0" height="1" fill="#2a3a8a" fill-opacity="0.35"/><rect x="12.0" y="418.5" width="5.0" height="1" fill="#9a9a9a" fill-opacity="0.55"/><rect x="22.0" y="418.5" width="12.0" height="1" fill="#2a3a8a" fill-opacity="0.65"/><rect x="12.0" y="420.5" width="11.0" height="1" fill="#9a9a9a" fill-opacity="0.5"/><rect x="22.0" y="420.5" width="30.0" height="1" fill="#2a3a8a" fill-opacity="0.65"/><rect x="53.0" y="420.5" width="9.0" height="1" fill="#2a3a8a" fill-opacity="0.35"/><rect x="12.0" y="424.5" width="5.0" height="1" fill="#9a9a9a" fill-opacity="0.55"/><rect x="22.0" y="424.5" width="12.0" height="1" fill="#2a3a8a" fill-opacity="0.65"/><rect x="12.0" y="426.5" width="11.0" height="1" fill="#9a9a9a" fill-opacity="0.5"/><rect x="22.0" y="426.5" width="30.0" height="1" fill="#2a3a8a" fill-opacity="0.65"/><rect x="53.0" y="426.5" width="9.0" height="1" fill="#2a3a8a" fill-opacity="0.35"/><rect x="12.0" y="430.5" width="5.0" height="1" fill="#9a9a9a" fill-opacity="0.55"/><rect x="22.0" y="430.5" width="11.0" height="1" fill="#2a3a8a" fill-opacity="0.65"/><rect x="12.0" y="432.5" width="11.0" height="1" fill="#9a9a9a" fill-opacity="0.5"/><rect x="22.0" y="432.5" width="29.0" height="1" fill="#2a3a8a" fill-opacity="0.65"/><rect x="52.0" y="432.5" width="9.0" height="1" fill="#2a3a8a" fill-opacity="0.35"/><rect x="12.0" y="436.5" width="5.0" height="1" fill="#9a9a9a" fill-opacity="0.55"/><rect x="22.0" y="436.5" width="10.0" height="1" fill="#2a3a8a" fill-opacity="0.65"/><rect x="12.0" y="438.5" width="11.0" height="1" fill="#9a9a9a" fill-opacity="0.5"/><rect x="22.0" y="438.5" width="28.0" height="1" fill="#2a3a8a" fill-opacity="0.65"/><rect x="51.0" y="438.5" width="9.0" height="1" fill="#2a3a8a" fill-opacity="0.35"/><rect x="12.0" y="442.5" width="5.0" height="1" fill="#9a9a9a" fill-opacity="0.55"/><rect x="22.0" y="442.5" width="11.0" height="1" fill="#2a3a8a" fill-opacity="0.65"/><rect x="12.0" y="444.5" width="11.0" height="1" fill="#9a9a9a" fill-opacity="0.5"/><rect x="22.0" y="444.5" width="29.0" height="1" fill="#2a3a8a" fill-opacity="0.65"/><rect x="52.0" y="444.5" width="9.0" height="1" fill="#2a3a8a" fill-opacity="0.35"/><rect x="12.0" y="448.5" width="5.0" height="1" fill="#9a9a9a" fill-opacity="0.55"/><rect x="22.0" y="448.5" width="12.0" height="1" fill="#2a3a8a" fill-opacity="0.65"/><rect x="12.0" y="450.5" width="11.0" height="1" fill="#9a9a9a" fill-opacity="0.5"/><rect x="22.0" y="450.5" width="30.0" height="1" fill="#2a3a8a" fill-opacity="0.65"/><rect x="53.0" y="450.5" width="9.0" height="1" fill="#2a3a8a" fill-opacity="0.35"/><rect x="12.0" y="454.5" width="5.0" height="1" fill="#9a9a9a" fill-opacity="0.55"/><rect x="22.0" y="454.5" width="10.0" height="1" fill="#2a3a8a" fill-opacity="0.65"/><rect x="12.0" y="456.5" width="11.0" height="1" fill="#9a9a9a" fill-opacity="0.5"/><rect x="22.0" y="456.5" width="28.0" height="1" fill="#2a3a8a" fill-opacity="0.65"/><rect x="51.0" y="456.5" width="9.0" height="1" fill="#2a3a8a" fill-opacity="0.35"/><rect x="12.0" y="460.5" width="5.0" height="1" fill="#9a9a9a" fill-opacity="0.55"/><rect x="22.0" y="460.5" width="14.0" height="1" fill="#2a3a8a" fill-opacity="0.65"/><rect x="12.0" y="462.5" width="11.0" height="1" fill="#9a9a9a" fill-opacity="0.5"/><rect x="22.0" y="462.5" width="32.0" height="1" fill="#2a3a8a" fill-opacity="0.65"/><rect x="55.0" y="462.5" width="9.0" height="1" fill="#2a3a8a" fill-opacity="0.35"/><rect x="12.0" y="466.5" width="5.0" height="1" fill="#9a9a9a" fill-opacity="0.55"/><rect x="22.0" y="466.5" width="16.0" height="1" fill="#2a3a8a" fill-opacity="0.65"/><rect x="12.0" y="468.5" width="11.0" height="1" fill="#9a9a9a" fill-opacity="0.5"/><rect x="22.0" y="468.5" width="34.0" height="1" fill="#2a3a8a" fill-opacity="0.65"/><rect x="57.0" y="468.5" width="9.0" height="1" fill="#2a3a8a" fill-opacity="0.35"/><rect x="12.0" y="472.5" width="5.0" height="1" fill="#9a9a9a" fill-opacity="0.55"/><rect x="22.0" y="472.5" width="16.0" height="1" fill="#2a3a8a" fill-opacity="0.65"/><rect x="12.0" y="474.5" width="11.0" height="1" fill="#9a9a9a" fill-opacity="0.5"/><rect x="22.0" y="474.5" width="34.0" height="1" fill="#2a3a8a" fill-opacity="0.65"/><rect x="57.0" y="474.5" width="9.0" height="1" fill="#2a3a8a" fill-opacity="0.35"/><rect x="12.0" y="478.5" width="5.0" height="1" fill="#9a9a9a" fill-opacity="0.55"/><rect x="22.0" y="478.5" width="11.0" height="1" fill="#2a3a8a" fill-opacity="0.65"/><rect x="12.0" y="480.5" width="11.0" height="1" fill="#9a9a9a" fill-opacity="0.5"/><rect x="22.0" y="480.5" width="29.0" height="1" fill="#2a3a8a" fill-opacity="0.65"/><rect x="52.0" y="480.5" width="9.0" height="1" fill="#2a3a8a" fill-opacity="0.35"/><rect x="12.0" y="484.5" width="5.0" height="1" fill="#9a9a9a" fill-opacity="0.55"/><rect x="22.0" y="484.5" width="18.0" height="1" fill="#2a3a8a" fill-opacity="0.65"/><rect x="12.0" y="486.5" width="11.0" height="1" fill="#9a9a9a" fill-opacity="0.5"/><rect x="22.0" y="486.5" width="36.0" height="1" fill="#2a3a8a" fill-opacity="0.65"/><rect x="59.0" y="486.5" width="9.0" height="1" fill="#2a3a8a" fill-opacity="0.35"/><rect x="12.0" y="490.5" width="5.0" height="1" fill="#9a9a9a" fill-opacity="0.55"/><rect x="22.0" y="490.5" width="10.0" height="1" fill="#2a3a8a" fill-opacity="0.65"/><rect x="12.0" y="492.5" width="11.0" height="1" fill="#9a9a9a" fill-opacity="0.5"/><rect x="22.0" y="492.5" width="28.0" height="1" fill="#2a3a8a" fill-opacity="0.65"/><rect x="51.0" y="492.5" width="9.0" height="1" fill="#2a3a8a" fill-opacity="0.35"/><rect x="12.0" y="496.5" width="5.0" height="1" fill="#9a9a9a" fill-opacity="0.55"/><rect x="22.0" y="496.5" width="18.0" height="1" fill="#2a3a8a" fill-opacity="0.65"/><rect x="12.0" y="498.5" width="11.0" height="1" fill="#9a9a9a" fill-opacity="0.5"/><rect x="22.0" y="498.5" width="36.0" height="1" fill="#2a3a8a" fill-opacity="0.65"/><rect x="59.0" y="498.5" width="9.0" height="1" fill="#2a3a8a" fill-opacity="0.35"/><rect x="12.0" y="502.5" width="5.0" height="1" fill="#9a9a9a" fill-opacity="0.55"/><rect x="22.0" y="502.5" width="12.0" height="1" fill="#2a3a8a" fill-opacity="0.65"/><rect x="12.0" y="504.5" width="11.0" height="1" fill="#9a9a9a" fill-opacity="0.5"/><rect x="22.0" y="504.5" width="30.0" height="1" fill="#2a3a8a" fill-opacity="0.65"/><rect x="53.0" y="504.5" width="9.0" height="1" fill="#2a3a8a" fill-opacity="0.35"/><rect x="12.0" y="508.5" width="5.0" height="1" fill="#9a9a9a" fill-opacity="0.55"/><rect x="22.0" y="508.5" width="13.0" height="1" fill="#2a3a8a" fill-opacity="0.65"/><rect x="12.0" y="510.5" width="11.0" height="1" fill="#9a9a9a" fill-opacity="0.5"/><rect x="22.0" y="510.5" width="31.0" height="1" fill="#2a3a8a" fill-opacity="0.65"/><rect x="54.0" y="510.5" width="9.0" height="1" fill="#2a3a8a" fill-opacity="0.35"/><rect x="12.0" y="514.5" width="5.0" height="1" fill="#9a9a9a" fill-opacity="0.55"/><rect x="22.0" y="514.5" width="16.0" height="1" fill="#2a3a8a" fill-opacity="0.65"/><rect x="12.0" y="516.5" width="11.0" height="1" fill="#9a9a9a" fill-opacity="0.5"/><rect x="22.0" y="516.5" width="34.0" height="1" fill="#2a3a8a" fill-opacity="0.65"/><rect x="57.0" y="516.5" width="9.0" height="1" fill="#2a3a8a" fill-opacity="0.35"/><rect x="12.0" y="520.5" width="5.0" height="1" fill="#9a9a9a" fill-opacity="0.55"/><rect x="22.0" y="520.5" width="12.0" height="1" fill="#2a3a8a" fill-opacity="0.65"/><rect x="12.0" y="522.5" width="11.0" height="1" fill="#9a9a9a" fill-opacity="0.5"/><rect x="22.0" y="522.5" width="30.0" height="1" fill="#2a3a8a" fill-opacity="0.65"/><rect x="53.0" y="522.5" width="9.0" height="1" fill="#2a3a8a" fill-opacity="0.35"/><rect x="12.0" y="526.5" width="5.0" height="1" fill="#9a9a9a" fill-opacity="0.55"/><rect x="22.0" y="526.5" width="11.0" height="1" fill="#2a3a8a" fill-opacity="0.65"/><rect x="12.0" y="528.5" width="11.0" height="1" fill="#9a9a9a" fill-opacity="0.5"/><rect x="22.0" y="528.5" width="29.0" height="1" fill="#2a3a8a" fill-opacity="0.65"/><rect x="52.0" y="528.5" width="9.0" height="1" fill="#2a3a8a" fill-opacity="0.35"/><rect x="12.0" y="532.5" width="5.0" height="1" fill="#9a9a9a" fill-opacity="0.55"/><rect x="22.0" y="532.5" width="14.0" height="1" fill="#2a3a8a" fill-opacity="0.65"/><rect x="12.0" y="534.5" width="11.0" height="1" fill="#9a9a9a" fill-opacity="0.5"/><rect x="22.0" y="534.5" width="32.0" height="1" fill="#2a3a8a" fill-opacity="0.65"/><rect x="55.0" y="534.5" width="9.0" height="1" fill="#2a3a8a" fill-opacity="0.35"/><rect x="12.0" y="538.5" width="5.0" height="1" fill="#9a9a9a" fill-opacity="0.55"/><rect x="22.0" y="538.5" width="12.0" height="1" fill="#2a3a8a" fill-opacity="0.65"/><rect x="12.0" y="540.5" width="11.0" height="1" fill="#9a9a9a" fill-opacity="0.5"/><rect x="22.0" y="540.5" width="30.0" height="1" fill="#2a3a8a" fill-opacity="0.65"/><rect x="53.0" y="540.5" width="9.0" height="1" fill="#2a3a8a" fill-opacity="0.35"/><rect x="12.0" y="544.5" width="5.0" height="1" fill="#9a9a9a" fill-opacity="0.55"/><rect x="22.0" y="544.5" width="10.0" height="1" fill="#2a3a8a" fill-opacity="0.65"/><rect x="12.0" y="546.5" width="11.0" height="1" fill="#9a9a9a" fill-opacity="0.5"/><rect x="22.0" y="546.5" width="28.0" height="1" fill="#2a3a8a" fill-opacity="0.65"/><rect x="51.0" y="546.5" width="9.0" height="1" fill="#2a3a8a" fill-opacity="0.35"/><rect x="12.0" y="550.5" width="5.0" height="1" fill="#9a9a9a" fill-opacity="0.55"/><rect x="22.0" y="550.5" width="11.0" height="1" fill="#2a3a8a" fill-opacity="0.65"/><rect x="12.0" y="552.5" width="11.0" height="1" fill="#9a9a9a" fill-opacity="0.5"/><rect x="22.0" y="552.5" width="29.0" height="1" fill="#2a3a8a" fill-opacity="0.65"/><rect x="52.0" y="552.5" width="9.0" height="1" fill="#2a3a8a" fill-opacity="0.35"/><rect x="12.0" y="556.5" width="5.0" height="1" fill="#9a9a9a" fill-opacity="0.55"/><rect x="22.0" y="556.5" width="10.0" height="1" fill="#2a3a8a" fill-opacity="0.65"/><rect x="12.0" y="558.5" width="11.0" height="1" fill="#9a9a9a" fill-opacity="0.5"/><rect x="22.0" y="558.5" width="28.0" height="1" fill="#2a3a8a" fill-opacity="0.65"/><rect x="51.0" y="558.5" width="9.0" height="1" fill="#2a3a8a" fill-opacity="0.35"/><rect x="12.0" y="562.5" width="5.0" height="1" fill="#9a9a9a" fill-opacity="0.55"/><rect x="22.0" y="562.5" width="18.0" height="1" fill="#2a3a8a" fill-opacity="0.65"/><rect x="12.0" y="564.5" width="11.0" height="1" fill="#9a9a9a" fill-opacity="0.5"/><rect x="22.0" y="564.5" width="36.0" height="1" fill="#2a3a8a" fill-opacity="0.65"/><rect x="59.0" y="564.5" width="9.0" height="1" fill="#2a3a8a" fill-opacity="0.35"/><rect x="12.0" y="568.5" width="5.0" height="1" fill="#9a9a9a" fill-opacity="0.55"/><rect x="22.0" y="568.5" width="13.0" height="1" fill="#2a3a8a" fill-opacity="0.65"/><rect x="12.0" y="570.5" width="11.0" height="1" fill="#9a9a9a" fill-opacity="0.5"/><rect x="22.0" y="570.5" width="31.0" height="1" fill="#2a3a8a" fill-opacity="0.65"/><rect x="54.0" y="570.5" width="9.0" height="1" fill="#2a3a8a" fill-opacity="0.35"/><rect x="12.0" y="574.5" width="5.0" height="1" fill="#9a9a9a" fill-opacity="0.55"/><rect x="22.0" y="574.5" width="14.0" height="1" fill="#2a3a8a" fill-opacity="0.65"/><rect x="12.0" y="576.5" width="11.0" height="1" fill="#9a9a9a" fill-opacity="0.5"/><rect x="22.0" y="576.5" width="32.0" height="1" fill="#2a3a8a" fill-opacity="0.65"/><rect x="55.0" y="576.5" width="9.0" height="1" fill="#2a3a8a" fill-opacity="0.35"/><rect x="12.0" y="580.5" width="5.0" height="1" fill="#9a9a9a" fill-opacity="0.55"/><rect x="22.0" y="580.5" width="13.0" height="1" fill="#2a3a8a" fill-opacity="0.65"/><rect x="12.0" y="582.5" width="11.0" height="1" fill="#9a9a9a" fill-opacity="0.5"/><rect x="22.0" y="582.5" width="31.0" height="1" fill="#2a3a8a" fill-opacity="0.65"/><rect x="54.0" y="582.5" width="9.0" height="1" fill="#2a3a8a" fill-opacity="0.35"/><rect x="12.0" y="586.5" width="5.0" height="1" fill="#9a9a9a" fill-opacity="0.55"/><rect x="22.0" y="586.5" width="10.0" height="1" fill="#2a3a8a" fill-opacity="0.65"/><rect x="12.0" y="588.5" width="11.0" height="1" fill="#9a9a9a" fill-opacity="0.5"/><rect x="22.0" y="588.5" width="28.0" height="1" fill="#2a3a8a" fill-opacity="0.65"/><rect x="51.0" y="588.5" width="9.0" height="1" fill="#2a3a8a" fill-opacity="0.35"/><rect x="12.0" y="592.5" width="5.0" height="1" fill="#9a9a9a" fill-opacity="0.55"/><rect x="22.0" y="592.5" width="13.0" height="1" fill="#2a3a8a" fill-opacity="0.65"/><rect x="12.0" y="594.5" width="11.0" height="1" fill="#9a9a9a" fill-opacity="0.5"/><rect x="22.0" y="594.5" width="31.0" height="1" fill="#2a3a8a" fill-opacity="0.65"/><rect x="54.0" y="594.5" width="9.0" height="1" fill="#2a3a8a" fill-opacity="0.35"/><rect x="12.0" y="598.5" width="5.0" height="1" fill="#9a9a9a" fill-opacity="0.55"/><rect x="22.0" y="598.5" width="10.0" height="1" fill="#2a3a8a" fill-opacity="0.65"/><rect x="12.0" y="600.5" width="11.0" height="1" fill="#9a9a9a" fill-opacity="0.5"/><rect x="22.0" y="600.5" width="28.0" height="1" fill="#2a3a8a" fill-opacity="0.65"/><rect x="51.0" y="600.5" width="9.0" height="1" fill="#2a3a8a" fill-opacity="0.35"/><rect x="12.0" y="604.5" width="5.0" height="1" fill="#9a9a9a" fill-opacity="0.55"/><rect x="22.0" y="604.5" width="18.0" height="1" fill="#2a3a8a" fill-opacity="0.65"/><rect x="12.0" y="606.5" width="11.0" height="1" fill="#9a9a9a" fill-opacity="0.5"/><rect x="22.0" y="606.5" width="36.0" height="1" fill="#2a3a8a" fill-opacity="0.65"/><rect x="59.0" y="606.5" width="9.0" height="1" fill="#2a3a8a" fill-opacity="0.35"/><rect x="12.0" y="610.5" width="5.0" height="1" fill="#9a9a9a" fill-opacity="0.55"/><rect x="22.0" y="610.5" width="13.0" height="1" fill="#2a3a8a" fill-opacity="0.65"/><rect x="12.0" y="612.5" width="11.0" height="1" fill="#9a9a9a" fill-opacity="0.5"/><rect x="22.0" y="612.5" width="31.0" height="1" fill="#2a3a8a" fill-opacity="0.65"/><rect x="54.0" y="612.5" width="9.0" height="1" fill="#2a3a8a" fill-opacity="0.35"/><rect x="12.0" y="616.5" width="5.0" height="1" fill="#9a9a9a" fill-opacity="0.55"/><rect x="22.0" y="616.5" width="16.0" height="1" fill="#2a3a8a" fill-opacity="0.65"/><rect x="12.0" y="618.5" width="11.0" height="1" fill="#9a9a9a" fill-opacity="0.5"/><rect x="22.0" y="618.5" width="34.0" height="1" fill="#2a3a8a" fill-opacity="0.65"/><rect x="57.0" y="618.5" width="9.0" height="1" fill="#2a3a8a" fill-opacity="0.35"/><rect x="12.0" y="622.5" width="5.0" height="1" fill="#9a9a9a" fill-opacity="0.55"/><rect x="22.0" y="622.5" width="14.0" height="1" fill="#2a3a8a" fill-opacity="0.65"/><rect x="12.0" y="624.5" width="11.0" height="1" fill="#9a9a9a" fill-opacity="0.5"/><rect x="22.0" y="624.5" width="32.0" height="1" fill="#2a3a8a" fill-opacity="0.65"/><rect x="55.0" y="624.5" width="9.0" height="1" fill="#2a3a8a" fill-opacity="0.35"/><rect x="12.0" y="628.5" width="5.0" height="1" fill="#9a9a9a" fill-opacity="0.55"/><rect x="22.0" y="628.5" width="11.0" height="1" fill="#2a3a8a" fill-opacity="0.65"/><rect x="12.0" y="630.5" width="11.0" height="1" fill="#9a9a9a" fill-opacity="0.5"/><rect x="22.0" y="630.5" width="29.0" height="1" fill="#2a3a8a" fill-opacity="0.65"/><rect x="52.0" y="630.5" width="9.0" height="1" fill="#2a3a8a" fill-opacity="0.35"/><rect x="12.0" y="634.5" width="5.0" height="1" fill="#9a9a9a" fill-opacity="0.55"/><rect x="22.0" y="634.5" width="16.0" height="1" fill="#2a3a8a" fill-opacity="0.65"/><rect x="12.0" y="636.5" width="11.0" height="1" fill="#9a9a9a" fill-opacity="0.5"/><rect x="22.0" y="636.5" width="34.0" height="1" fill="#2a3a8a" fill-opacity="0.65"/><rect x="57.0" y="636.5" width="9.0" height="1" fill="#2a3a8a" fill-opacity="0.35"/><rect x="12.0" y="640.5" width="5.0" height="1" fill="#9a9a9a" fill-opacity="0.55"/><rect x="22.0" y="640.5" width="14.0" height="1" fill="#2a3a8a" fill-opacity="0.65"/><rect x="12.0" y="642.5" width="11.0" height="1" fill="#9a9a9a" fill-opacity="0.5"/><rect x="22.0" y="642.5" width="32.0" height="1" fill="#2a3a8a" fill-opacity="0.65"/><rect x="55.0" y="642.5" width="9.0" height="1" fill="#2a3a8a" fill-opacity="0.35"/><rect x="12.0" y="646.5" width="5.0" height="1" fill="#9a9a9a" fill-opacity="0.55"/><rect x="22.0" y="646.5" width="10.0" height="1" fill="#2a3a8a" fill-opacity="0.65"/><rect x="12.0" y="648.5" width="11.0" height="1" fill="#9a9a9a" fill-opacity="0.5"/><rect x="22.0" y="648.5" width="28.0" height="1" fill="#2a3a8a" fill-opacity="0.65"/><rect x="51.0" y="648.5" width="9.0" height="1" fill="#2a3a8a" fill-opacity="0.35"/><rect x="12.0" y="652.5" width="5.0" height="1" fill="#9a9a9a" fill-opacity="0.55"/><rect x="22.0" y="652.5" width="16.0" height="1" fill="#2a3a8a" fill-opacity="0.65"/><rect x="12.0" y="654.5" width="11.0" height="1" fill="#9a9a9a" fill-opacity="0.5"/><rect x="22.0" y="654.5" width="34.0" height="1" fill="#2a3a8a" fill-opacity="0.65"/><rect x="57.0" y="654.5" width="9.0" height="1" fill="#2a3a8a" fill-opacity="0.35"/><rect x="12.0" y="658.5" width="5.0" height="1" fill="#9a9a9a" fill-opacity="0.55"/><rect x="22.0" y="658.5" width="11.0" height="1" fill="#2a3a8a" fill-opacity="0.65"/><rect x="12.0" y="660.5" width="11.0" height="1" fill="#9a9a9a" fill-opacity="0.5"/><rect x="22.0" y="660.5" width="29.0" height="1" fill="#2a3a8a" fill-opacity="0.65"/><rect x="52.0" y="660.5" width="9.0" height="1" fill="#2a3a8a" fill-opacity="0.35"/><rect x="12.0" y="664.5" width="5.0" height="1" fill="#9a9a9a" fill-opacity="0.55"/><rect x="22.0" y="664.5" width="13.0" height="1" fill="#2a3a8a" fill-opacity="0.65"/><rect x="12.0" y="666.5" width="11.0" height="1" fill="#9a9a9a" fill-opacity="0.5"/><rect x="22.0" y="666.5" width="31.0" height="1" fill="#2a3a8a" fill-opacity="0.65"/><rect x="54.0" y="666.5" width="9.0" height="1" fill="#2a3a8a" fill-opacity="0.35"/><rect x="12.0" y="670.5" width="5.0" height="1" fill="#9a9a9a" fill-opacity="0.55"/><rect x="22.0" y="670.5" width="16.0" height="1" fill="#2a3a8a" fill-opacity="0.65"/><rect x="12.0" y="672.5" width="11.0" height="1" fill="#9a9a9a" fill-opacity="0.5"/><rect x="22.0" y="672.5" width="34.0" height="1" fill="#2a3a8a" fill-opacity="0.65"/><rect x="57.0" y="672.5" width="9.0" height="1" fill="#2a3a8a" fill-opacity="0.35"/><rect x="12.0" y="676.5" width="5.0" height="1" fill="#9a9a9a" fill-opacity="0.55"/><rect x="22.0" y="676.5" width="12.0" height="1" fill="#2a3a8a" fill-opacity="0.65"/><rect x="12.0" y="678.5" width="11.0" height="1" fill="#9a9a9a" fill-opacity="0.5"/><rect x="22.0" y="678.5" width="30.0" height="1" fill="#2a3a8a" fill-opacity="0.65"/><rect x="53.0" y="678.5" width="9.0" height="1" fill="#2a3a8a" fill-opacity="0.35"/><rect x="12.0" y="682.5" width="5.0" height="1" fill="#9a9a9a" fill-opacity="0.55"/><rect x="22.0" y="682.5" width="13.0" height="1" fill="#2a3a8a" fill-opacity="0.65"/><rect x="12.0" y="684.5" width="11.0" height="1" fill="#9a9a9a" fill-opacity="0.5"/><rect x="22.0" y="684.5" width="31.0" height="1" fill="#2a3a8a" fill-opacity="0.65"/><rect x="54.0" y="684.5" width="9.0" height="1" fill="#2a3a8a" fill-opacity="0.35"/><rect x="8.0" y="466.5" width="88.0" height="4" fill="#8cc0f5" fill-opacity="0.95"/><rect x="22.0" y="466.5" width="4.0" height="4" fill="#2f86ee"/><rect x="8.0" y="484.5" width="88.0" height="4" fill="#8cc0f5" fill-opacity="0.95"/><rect x="22.0" y="484.5" width="4.0" height="4" fill="#2f86ee"/><rect x="8.0" y="502.5" width="88.0" height="1.5" fill="#8cc0f5" fill-opacity="0.95"/><rect x="96.0" y="0.0" width="1.0" height="686" fill="#e6e6e6"/><rect x="106.0" y="33.0" width="3.0" height="6" fill="#1f7ff0"/><rect x="106.0" y="43.0" width="3.0" height="17" fill="#1f7ff0"/><rect x="106.0" y="65.0" width="3.0" height="5.5" fill="#1f7ff0"/><rect x="106.0" y="74.0" width="3.0" height="24" fill="#1f7ff0"/><rect x="106.0" y="102.0" width="3.0" height="8" fill="#1f7ff0"/><rect x="106.0" y="120.0" width="3.0" height="7" fill="#1f7ff0"/><rect x="106.0" y="137.0" width="3.0" height="8" fill="#1f7ff0"/><rect x="106.0" y="168.0" width="3.0" height="6" fill="#1f7ff0"/><rect x="106.0" y="177.0" width="3.0" height="6" fill="#1f7ff0"/><rect x="106.0" y="196.0" width="3.0" height="6" fill="#1f7ff0"/><rect x="106.0" y="217.0" width="3.0" height="7" fill="#1f7ff0"/><rect x="106.0" y="228.0" width="3.0" height="12" fill="#1f7ff0"/><rect x="106.0" y="247.0" width="3.0" height="5" fill="#1f7ff0"/><rect x="106.0" y="258.0" width="3.0" height="16" fill="#1f7ff0"/><rect x="106.0" y="324.0" width="3.0" height="6" fill="#1f7ff0"/><rect x="106.0" y="335.0" width="3.0" height="5" fill="#1f7ff0"/><rect x="106.0" y="346.0" width="3.0" height="6" fill="#1f7ff0"/><rect x="106.0" y="465.0" width="3.0" height="15" fill="#1f7ff0"/><rect x="106.0" y="487.0" width="3.0" height="5" fill="#1f7ff0"/><rect x="106.0" y="510.0" width="3.0" height="8" fill="#1f7ff0"/><rect x="106.0" y="524.0" width="3.0" height="9" fill="#1f7ff0"/><rect x="106.0" y="563.0" width="3.0" height="7" fill="#1f7ff0"/><rect x="106.0" y="598.0" width="3.0" height="7" fill="#1f7ff0"/><rect x="106.0" y="619.0" width="3.0" height="12" fill="#1f7ff0"/><rect x="101.0" y="98.0" width="7.0" height="6" fill="#c8c8c8"/><rect x="96.0" y="93.0" width="12.0" height="1.5" fill="#333" fill-opacity="0.9"/></svg>
</div><div id="status">
 <div class="a" style="left:0;top:0;width:34px;height:21px;background:#16825d"></div>
 <svg style="left:11px;top:6px" width="13" height="11"><path d="M1 9.5l4-3.2-4-3.2M12 1.5L8 4.7l4 3.2" stroke="#fff" stroke-width="1.2" fill="none"/></svg>
 <svg style="left:42px;top:5px" width="10" height="14"><circle cx="2.5" cy="2.5" r="1.8" stroke="#fff" stroke-width="1.1" fill="none"/><circle cx="7.5" cy="4.5" r="1.8" stroke="#fff" stroke-width="1.1" fill="none"/><circle cx="2.5" cy="11.5" r="1.8" stroke="#fff" stroke-width="1.1" fill="none"/><path d="M2.5 4.3v5.4M7.5 6.3c0 2-2.5 2.5-4.5 3.5" stroke="#fff" stroke-width="1.1" fill="none"/></svg>
 <div class="t st" style="left:59px">main*+</div>
 <svg style="left:104px;top:5px" width="16" height="13"><path d="M2 6.5a5 5 0 0 1 9.2-2.8M14 6.5a5 5 0 0 1-9.2 2.8" stroke="#fff" stroke-width="1.3" fill="none"/><path d="M12.5 0.8v3.5H9M3.5 12.2V8.7H7" stroke="#fff" stroke-width="1.3" fill="none"/></svg>
 <svg style="left:135px;top:5px" width="14" height="14"><circle cx="7" cy="7" r="5.6" stroke="#fff" stroke-width="1.1" fill="none"/><path d="M4.8 4.8l4.4 4.4M9.2 4.8L4.8 9.2" stroke="#fff" stroke-width="1.1"/></svg>
 <div class="t st" style="left:152px">0</div>
 <svg style="left:162px;top:4px" width="15" height="14"><path d="M7.5 1.2L13.8 12.5H1.2z" stroke="#fff" stroke-width="1.1" fill="none"/><path d="M7.5 5v4M7.5 10.2v1.2" stroke="#fff" stroke-width="1.1"/></svg>
 <div class="t st" style="left:179px">0</div>
 <svg style="left:189px;top:5px" width="14" height="14"><circle cx="7" cy="7" r="5.6" stroke="#fff" stroke-width="1.1" fill="none"/><path d="M7 6v4.5M7 3.8v1.2" stroke="#fff" stroke-width="1.2"/></svg>
 <div class="t st" style="left:206px">100</div>
 <div class="t st" style="left:242px">Git Graph</div>
 <div class="t st" style="left:308px">EIDE Project: Debug</div>
 <svg style="left:429px;top:5px" width="13" height="13"><path d="M1.5 11.5l6-6M3 1.2a3 3 0 0 0 3.5 4l1 1M11.5 11.5L5 5M9 2l3 3-1.5 1.5-3-3z" stroke="#fff" stroke-width="1.3" fill="none"/></svg>
 <div class="t st" style="left:447px">Build</div>
 <svg style="left:491px;top:5px" width="11" height="13"><path d="M5.5 0.5v11M1 7l4.5 4.5L10 7" stroke="#fff" stroke-width="1.2" fill="none"/></svg>
 <div class="t st" style="left:507px">Flash</div>
 <div class="t st" style="left:781px">行 87，列 20</div>
 <div class="t st" style="left:865px">空格: 2</div>
 <div class="t st" style="left:917px">UTF-8</div>
 <div class="t st" style="left:965px">CRLF</div>
 <div class="t st" style="left:1007px">{ }</div>
 <div class="t st" style="left:1028px">ARM</div>
 <svg style="left:1068px;top:5px" width="16" height="13"><path d="M3 2.5C3 1.5 4 1 5.5 1S8 1.5 8 2.5 9 1 10.5 1 13 1.5 13 2.5V5c1.5.5 2.5 1.5 2.5 3s-3 4-7.5 4S.5 9.5.5 8 1.5 5.5 3 5z" fill="#fff"/><rect x="5" y="6.5" width="1.5" height="2.5" fill="#007acc"/><rect x="9.5" y="6.5" width="1.5" height="2.5" fill="#007acc"/></svg>
 <svg style="left:1098px;top:5px" width="14" height="14"><circle cx="7" cy="7" r="5.8" stroke="#fff" stroke-width="1.2" fill="none"/><path d="M3 11l8-8" stroke="#fff" stroke-width="1.2"/></svg>
 <div class="t st" style="left:1116px">Prettier</div>
 <svg style="left:1171px;top:4px" width="13" height="15"><path d="M6.5 1.2c2.3 0 4 1.8 4 4v3.5l1.5 2.5H1l1.5-2.5V5.2c0-2.2 1.7-4 4-4z" stroke="#fff" stroke-width="1.1" fill="none"/><path d="M5 12.5a1.5 1.5 0 0 0 3 0" stroke="#fff" stroke-width="1.1" fill="none"/></svg>
</div>
<div id="wb"></div>
</div>
</body></html>
